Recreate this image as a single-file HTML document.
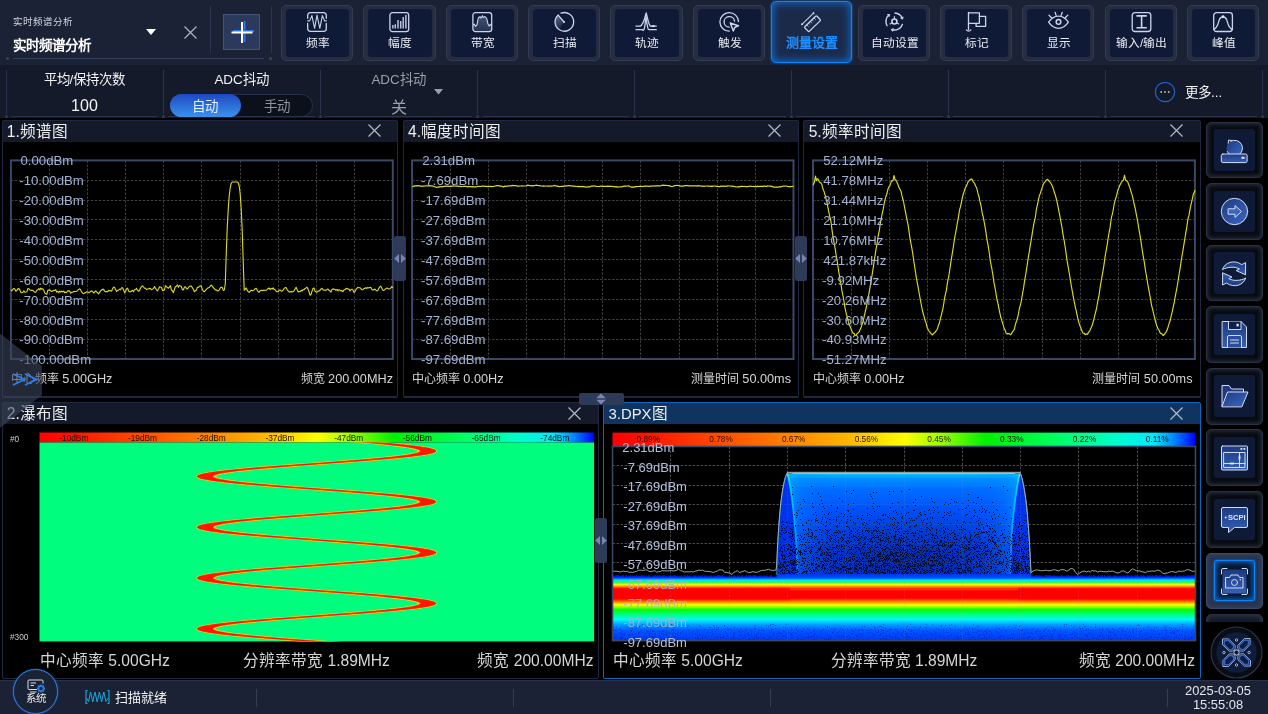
<!DOCTYPE html>
<html lang="zh-CN"><head><meta charset="utf-8"><title>实时频谱分析</title>
<style>
*{box-sizing:border-box;margin:0;padding:0}
html,body{width:1268px;height:714px;overflow:hidden;background:#000}
body{position:relative;font-family:"Liberation Sans",sans-serif;color:#fff;-webkit-font-smoothing:antialiased}
#root{position:absolute;left:0;top:0;width:1268px;height:714px;overflow:hidden;will-change:transform}
.abs{position:absolute}
#topbar{position:absolute;left:0;top:0;width:1268px;height:65px;background:#1b2236}
#prow{position:absolute;left:0;top:65px;width:1268px;height:53px;background:#141a2a}
.tb{position:absolute;top:4.6px;width:72.3px;height:56.4px;border-radius:5px;background:#262d43;border:1px solid #333b53}
.tb .in{position:absolute;left:4px;top:3.6px;width:63.3px;height:47.7px;border-radius:3.5px;background:#0f1b36}
.tb svg{position:absolute;left:25px;top:6.4px;width:20px;height:20px;overflow:visible}
.tb .lb{position:absolute;left:-10px;width:92px;top:29.6px;text-align:center;font-size:11.7px;line-height:16px;color:#e8eaf0;white-space:nowrap}
.tb.act{top:1px;width:81px;height:62px;background:#1c2a4a;border:1.5px solid #0a84ff;border-radius:5px;box-shadow:inset 0 0 9px 1px rgba(10,132,255,.75),0 0 3px rgba(10,132,255,.6)}
.tb.act svg{left:30px;top:10.7px}
.tb.act .lb{left:-6px;top:33px;font-size:13px;font-weight:bold;color:#1e8fff}
.sep{position:absolute;width:1px;background:#2c3650}
.pcell{position:absolute;top:0;height:53px}
.ptitle{position:absolute;left:0;width:100%;top:5.7px;text-align:center;font-size:13.4px;line-height:18px;color:#f2f2f2;white-space:nowrap}
.pval{position:absolute;left:0;width:100%;top:31.2px;text-align:center;font-size:16px;line-height:20px;color:#f2f2f2;white-space:nowrap}
.panel{position:absolute;background:#000;border:1px solid #1f2840;border-radius:2px}
.ptl{position:absolute;left:0;top:0;right:0;height:21px;background:#141a2a;font-size:15.6px;line-height:21px;padding-left:4.3px;color:#eee;white-space:nowrap}
.panel.act{border:1px solid #0b66c0}
.panel.act .ptl{background:#0f3460}
.px{position:absolute;top:3px;width:15px;height:15px}
.yl{position:absolute;font-size:13.2px;line-height:14px;color:#a4b2d2;white-space:nowrap}
.lt{font-size:12.7px}
.bl{position:absolute;font-size:12px;line-height:14px;color:#d6d6d6;white-space:nowrap}
.bl2{position:absolute;font-size:15.6px;line-height:18px;color:#d6d6d6;white-space:nowrap}
.hd{position:absolute;background:#2e3b58;border-radius:2.5px}
.sb{position:absolute;left:1206px;width:57px;height:56.7px;border-radius:5px;background:#080b12;border:1px solid #2a3142;box-shadow:inset 0 0 4px 1px rgba(70,80,105,.55)}
.sb .in{position:absolute;left:7px;top:6.6px;width:41px;height:41.4px;border-radius:3px;background:#0f1b36}
.sb svg{position:absolute;left:12px;top:12px;width:31px;height:31px;overflow:visible}
#status{position:absolute;left:0;top:680px;width:1268px;height:34px;background:#1b2236;border-top:1px solid #2a3248}
</style></head>
<body>
<div id="root">
<div id="topbar">
<div class="abs" style="left:13px;top:15.6px;font-size:9.5px;line-height:12px;color:#d2d6de;white-space:nowrap">实时频谱分析</div>
<div class="abs" style="left:13px;top:37px;font-size:13.5px;line-height:17px;font-weight:bold;color:#fff;white-space:nowrap">实时频谱分析</div>
<svg class="abs" style="left:146px;top:29px" width="10" height="6"><path d="M0 0H10L5 6Z" fill="#fff"/></svg>
<svg class="abs" style="left:184px;top:26px" width="13" height="13"><path d="M0.5 0.5L12.5 12.5M12.5 0.5L0.5 12.5" stroke="#aab0bd" stroke-width="1.3" fill="none"/></svg>
<div class="sep" style="left:209.5px;top:6px;height:47px"></div>
<div class="abs" style="left:223px;top:14px;width:37px;height:36px;background:#2b3a5c;border:1px solid #44547a"></div>
<svg class="abs" style="left:223px;top:14px" width="37" height="36"><path d="M10 17H31M21.5 7V28" stroke="#2b74e8" stroke-width="2" fill="none"/><path d="M8.5 18.5H29.5M19 8V29" stroke="#fff" stroke-width="2" fill="none"/></svg>
<div class="sep" style="left:270.5px;top:6px;height:47px"></div>
<div class="abs" style="left:13px;top:58px;width:251px;height:1px;background:#37415c"></div>
<div class="abs" style="left:6px;top:57px;width:3px;height:3px;border-radius:2px;background:#3a4560"></div>
<div class="abs" style="left:269px;top:57px;width:3px;height:3px;border-radius:2px;background:#3a4560"></div>
<div class="tb" style="left:281.0px"><div class="in"></div><svg viewBox="0 0 20 20"><path d="M0.7 6.3V3.2A2.5 2.5 0 0 1 3.2 0.7H16.8A2.5 2.5 0 0 1 19.3 3.2V6.3M0.7 11.4V16.8A2.5 2.5 0 0 0 3.2 19.3H16.8A2.5 2.5 0 0 0 19.3 16.8V11.4" stroke="#ccd3ea" stroke-width="1.3" fill="none" stroke-linecap="round" stroke-linejoin="round"/><path d="M0.3 8.9H2.6L4.9 3.6L7.6 16.3L10 3.1L12.8 16.3L15.4 3.6L17.6 8.9H19.7" stroke="#c9d0e8" stroke-width="1.1" fill="none" stroke-linejoin="round"/></svg><div class="lb">频率</div></div>
<div class="tb" style="left:363.4px"><div class="in"></div><svg viewBox="0 0 20 20"><rect x="0.9" y="0.6" width="18.8" height="19" rx="2.6" stroke="#ccd3ea" stroke-width="1.3" fill="none" stroke-linecap="round" stroke-linejoin="round"/><path d="M3.9 16.5V13M6.3 16.5V12.2M9 16.5V8M11.7 16.5V8.9M14.2 16.5V4.9M16.9 16.5V3" stroke="#b9c2de" stroke-width="1.5" fill="none"/></svg><div class="lb">幅度</div></div>
<div class="tb" style="left:445.7px"><div class="in"></div><svg viewBox="0 0 20 20"><defs><linearGradient id="gbw" x1="0" y1="0" x2="0" y2="1"><stop offset="0" stop-color="#6d7ea8" stop-opacity=".55"/><stop offset="1" stop-color="#6d7ea8" stop-opacity=".25"/></linearGradient></defs><path d="M1.2 13L2.4 12.2L3.6 14.4L5 12.6C5.6 10 5.6 8.5 6 7.2C6.3 6 6.5 5.4 6.9 5.1L8.2 4.9L8.85 6L9.6 5.2L10.5 3.7L11.1 5.4L11.7 5.3L12.5 4.6L13.6 5.1C14.2 5.6 14.6 6.4 15 7.7C15.4 9.2 15.6 10.8 16 12L17.2 14.1L18.4 12.4L19.3 13.4V17.5Q19.3 19 17.8 19H2.7Q1.2 19 1.2 17.5Z" fill="url(#gbw)"/><rect x="0.9" y="0.6" width="18.8" height="19" rx="2.6" stroke="#ccd3ea" stroke-width="1.3" fill="none" stroke-linecap="round" stroke-linejoin="round"/><path d="M1.2 13L2.4 12.2L3.6 14.4L5 12.6C5.6 10 5.6 8.5 6 7.2C6.3 6 6.5 5.4 6.9 5.1L8.2 4.9L8.85 6L9.6 5.2L10.5 3.7L11.1 5.4L11.7 5.3L12.5 4.6L13.6 5.1C14.2 5.6 14.6 6.4 15 7.7C15.4 9.2 15.6 10.8 16 12L17.2 14.1L18.4 12.4L19.3 13.4" stroke="#ccd3ea" stroke-width="1.1" fill="none" stroke-linejoin="round"/></svg><div class="lb">带宽</div></div>
<div class="tb" style="left:528.1px"><div class="in"></div><svg viewBox="0 0 20 20"><defs><linearGradient id="gsc" x1="0.2" y1="0" x2="0.6" y2="1"><stop offset="0" stop-color="#7e8fb8" stop-opacity=".7"/><stop offset="1" stop-color="#7e8fb8" stop-opacity=".05"/></linearGradient></defs><path d="M10 10L4.2 3.3A9 9 0 0 0 5 17.4Z" fill="url(#gsc)"/><path d="M7 1.2A9.3 9.3 0 1 1 4.2 2.9" stroke="#ccd3ea" stroke-width="1.3" fill="none" stroke-linecap="round" stroke-linejoin="round"/><path d="M10 10L4.4 3.4" stroke="#ccd3ea" stroke-width="1.3" fill="none" stroke-linecap="round" stroke-linejoin="round"/><circle cx="10" cy="10" r="1.1" fill="#ccd3ea"/></svg><div class="lb">扫描</div></div>
<div class="tb" style="left:610.4px"><div class="in"></div><svg viewBox="0 0 20 20"><path d="M0 14.1H4.3C7.3 13.2 8.9 5.5 10.2 0.9C11.4 5.5 12.6 12.5 14.2 14.1H20.3" stroke="#ccd3ea" stroke-width="1.3" fill="none" stroke-linecap="round" stroke-linejoin="round"/><path d="M0 17.7H6.3L7 18.4L8 17.6C9 15.5 9.5 8.5 10 4.2C10.6 8.5 11.2 16.2 12.4 17.3L13.2 17.7H20.3" stroke="#ccd3ea" stroke-width="1.3" fill="none" stroke-linecap="round" stroke-linejoin="round"/><path d="M15 14.1L17 12.9L19.4 14.1L17 15.3Z" fill="#dfe5f6"/></svg><div class="lb">轨迹</div></div>
<div class="tb" style="left:692.8px"><div class="in"></div><svg viewBox="0 0 20 20"><path d="M19.5 9.6A9.3 9.3 0 1 0 10.2 19.2" stroke="#ccd3ea" stroke-width="1.3" fill="none" stroke-linecap="round" stroke-linejoin="round"/><path d="M15.6 9.2A5.3 5.3 0 1 0 10.2 15.2" stroke="#ccd3ea" stroke-width="1.3" fill="none" stroke-linecap="round" stroke-linejoin="round"/><path d="M11.3 11L19.4 13.8L15.9 15.3L14.3 18.9Z" stroke="#ccd3ea" stroke-width="1.5" fill="none" stroke-linejoin="round"/></svg><div class="lb">触发</div></div>
<div class="tb act" style="left:771.3px"><svg viewBox="0 0 20 20"><g transform="translate(10.55 10.7) rotate(-44)"><rect x="-8.4" y="-3.2" width="16.8" height="6.4" rx="1" stroke="#ccd3ea" stroke-width="1.3" fill="none"/><path d="M-5 -3.2V-0.8M-2.5 -3.2V-1.5M0 -3.2V-0.8M2.5 -3.2V-1.5M5 -3.2V-0.8" stroke="#ccd3ea" stroke-width="0.8" fill="none"/><path d="M-8 -6.9H8" stroke="#ccd3ea" stroke-width="1"/><circle cx="-8" cy="-6.9" r="1" fill="#ccd3ea"/><circle cx="8" cy="-6.9" r="1" fill="#ccd3ea"/></g></svg><div class="lb">测量设置</div></div>
<div class="tb" style="left:857.5px"><div class="in"></div><svg viewBox="0 0 20 20"><path d="M3.04 13.75A8.5 8.5 0 0 1 4.94 2.99M10.99 1.02A8.5 8.5 0 0 1 18.28 6.32M18.39 12.41A8.5 8.5 0 0 1 8.20 17.71" stroke="#ccd3ea" stroke-width="1.4" fill="none" stroke-linecap="round"/><path d="M6.16 1.96L2.73 2.23L5.30 5.29ZM18.88 7.80L19.69 4.45L15.98 5.95ZM6.65 17.30L8.84 19.95L9.88 16.09Z" fill="#ccd3ea"/><circle cx="10.4" cy="9.5" r="2.5" stroke="#ccd3ea" stroke-width="1.6" fill="none"/><path d="M10.40 6.50L10.40 4.50M13.00 11.00L14.73 12.00M7.80 11.00L6.07 12.00" stroke="#ccd3ea" stroke-width="1.1" fill="none" stroke-linecap="round"/></svg><div class="lb">自动设置</div></div>
<div class="tb" style="left:939.9px"><div class="in"></div><svg viewBox="0 0 20 20"><path d="M2.5 0.5V17.6" stroke="#ccd3ea" stroke-width="1.3" fill="none" stroke-linecap="round" stroke-linejoin="round"/><path d="M2.5 0.9H13.4V11.3H2.5" stroke="#ccd3ea" stroke-width="1.3" fill="none" stroke-linecap="round" stroke-linejoin="round"/><path d="M13.4 4.4H19.6V14.4H10.1V11.3" stroke="#ccd3ea" stroke-width="1.3" fill="none" stroke-linecap="round" stroke-linejoin="round"/><path d="M0.4 17.9Q2.6 20.3 4.9 17.9" stroke="#ccd3ea" stroke-width="1.3" fill="none" stroke-linecap="round" stroke-linejoin="round"/></svg><div class="lb">标记</div></div>
<div class="tb" style="left:1022.2px"><div class="in"></div><svg viewBox="0 0 20 20"><path d="M0.6 10.2C3.8 5.6 7.4 4.2 10.5 4.2C13.6 4.2 17.2 5.6 20.4 10.2C17.2 14.9 13.6 16.4 10.5 16.4C7.4 16.4 3.8 14.9 0.6 10.2Z" stroke="#ccd3ea" stroke-width="1.3" fill="none" stroke-linecap="round" stroke-linejoin="round"/><circle cx="10.5" cy="9.9" r="2.3" stroke="#ccd3ea" stroke-width="1.5" fill="none"/><path d="M1 3.2L3.5 5.8M7.1 0.3L8.1 3.4M14.3 0.3L13.1 3.4M19.8 3.2L17.2 5.8" stroke="#ccd3ea" stroke-width="1.3" fill="none" stroke-linecap="round" stroke-linejoin="round"/></svg><div class="lb">显示</div></div>
<div class="tb" style="left:1104.6px"><div class="in"></div><svg viewBox="0 0 20 20"><rect x="1.2" y="0.6" width="18.6" height="18.9" rx="2.8" stroke="#ccd3ea" stroke-width="1.3" fill="none" stroke-linecap="round" stroke-linejoin="round"/><path d="M5.4 3.9H15.8M10.6 3.9V15.7M5.4 15.7H15.8" stroke="#ccd3ea" stroke-width="1.6" fill="none"/></svg><div class="lb">输入/输出</div></div>
<div class="tb" style="left:1187.0px"><div class="in"></div><svg viewBox="0 0 20 20"><rect x="0.7" y="0.6" width="18.7" height="18.9" rx="2.8" stroke="#ccd3ea" stroke-width="1.3" fill="none" stroke-linecap="round" stroke-linejoin="round"/><path d="M1 17.4C4.6 15.4 5.2 11.5 6 8.6C6.8 5.9 8 5 10 5C12 5 13.2 5.9 14 8.6C14.8 11.5 15.4 15.4 19 17.4" stroke="#ccd3ea" stroke-width="1.3" fill="none" stroke-linecap="round" stroke-linejoin="round"/><circle cx="10" cy="4.6" r="1.35" fill="#dfe5f6"/></svg><div class="lb">峰值</div></div>
</div>
<div id="prow">
<div class="sep" style="left:5.9px;top:5px;height:44px;background:#2a334b"></div>
<div class="abs" style="left:4.9px;top:50px;width:3px;height:3px;border-radius:2px;background:#2f3953"></div>
<div class="abs" style="left:10.9px;top:51px;width:147.1px;height:1px;background:#2a334b"></div>
<div class="sep" style="left:163.0px;top:5px;height:44px;background:#2a334b"></div>
<div class="abs" style="left:162.0px;top:50px;width:3px;height:3px;border-radius:2px;background:#2f3953"></div>
<div class="abs" style="left:168.0px;top:51px;width:147.1px;height:1px;background:#2a334b"></div>
<div class="sep" style="left:320.0px;top:5px;height:44px;background:#2a334b"></div>
<div class="abs" style="left:319.0px;top:50px;width:3px;height:3px;border-radius:2px;background:#2f3953"></div>
<div class="abs" style="left:325.0px;top:51px;width:147.1px;height:1px;background:#2a334b"></div>
<div class="sep" style="left:477.1px;top:5px;height:44px;background:#2a334b"></div>
<div class="abs" style="left:476.1px;top:50px;width:3px;height:3px;border-radius:2px;background:#2f3953"></div>
<div class="abs" style="left:482.1px;top:51px;width:147.1px;height:1px;background:#2a334b"></div>
<div class="sep" style="left:634.1px;top:5px;height:44px;background:#2a334b"></div>
<div class="abs" style="left:633.1px;top:50px;width:3px;height:3px;border-radius:2px;background:#2f3953"></div>
<div class="abs" style="left:639.1px;top:51px;width:147.1px;height:1px;background:#2a334b"></div>
<div class="sep" style="left:791.1px;top:5px;height:44px;background:#2a334b"></div>
<div class="abs" style="left:790.1px;top:50px;width:3px;height:3px;border-radius:2px;background:#2f3953"></div>
<div class="abs" style="left:796.1px;top:51px;width:147.1px;height:1px;background:#2a334b"></div>
<div class="sep" style="left:948.2px;top:5px;height:44px;background:#2a334b"></div>
<div class="abs" style="left:947.2px;top:50px;width:3px;height:3px;border-radius:2px;background:#2f3953"></div>
<div class="abs" style="left:953.2px;top:51px;width:147.1px;height:1px;background:#2a334b"></div>
<div class="sep" style="left:1105.3px;top:5px;height:44px;background:#2a334b"></div>
<div class="abs" style="left:1104.3px;top:50px;width:3px;height:3px;border-radius:2px;background:#2f3953"></div>
<div class="abs" style="left:1110.3px;top:51px;width:147.1px;height:1px;background:#2a334b"></div>
<div class="sep" style="left:1262.3px;top:5px;height:44px;background:#2a334b"></div>
<div class="abs" style="left:1261.3px;top:50px;width:3px;height:3px;border-radius:2px;background:#2f3953"></div>
<div class="pcell" style="left:5.9px;width:157.1px"><div class="ptitle">平均/保持次数</div><div class="pval">100</div></div>
<div class="pcell" style="left:163.0px;width:157.1px"><div class="ptitle">ADC抖动</div><div class="abs" style="left:6.5px;top:28.5px;width:143px;height:23px;border-radius:12px;background:#0c101b;border:1px solid #27314b"></div><div class="abs" style="left:6.5px;top:28.5px;width:71px;height:23px;border-radius:12px;background:linear-gradient(#1d48c4,#3b92ec)"></div><div class="abs" style="left:6.5px;top:31.6px;width:71px;text-align:center;font-size:13.5px;line-height:20px;color:#e8eefc">自动</div><div class="abs" style="left:78px;top:31.6px;width:71px;text-align:center;font-size:13.5px;line-height:20px;color:#8f949e">手动</div></div>
<div class="pcell" style="left:320.0px;width:157.1px"><div class="ptitle" style="color:#9a9fa8">ADC抖动</div><div class="pval" style="color:#9a9fa8;top:32.6px">关</div><svg class="abs" style="left:113.7px;top:24px" width="9" height="6"><path d="M0 0H9L4.5 5.5Z" fill="#9a9fa8"/></svg></div>
<svg class="abs" style="left:1154px;top:16px" width="22" height="22"><circle cx="11" cy="11" r="9.7" fill="none" stroke="#1f5fd0" stroke-width="1.2"/><circle cx="7.2" cy="11" r="0.9" fill="#b8bcc6"/><circle cx="11" cy="11" r="0.9" fill="#b8bcc6"/><circle cx="14.8" cy="11" r="0.9" fill="#b8bcc6"/></svg>
<div class="abs" style="left:1185px;top:18.8px;font-size:13.5px;line-height:18px;color:#f2f2f2;white-space:nowrap">更多...</div>
</div>
<div class="panel" style="left:1.5px;top:120px;width:396.4px;height:277.9px;border-bottom-width:2px"><div class="ptl">1.频谱图</div><svg class="px" style="left:365.2px;top:3.0px;width:13px;height:13px" viewBox="0 0 13 13"><path d="M0.5 0.5L12.5 12.5M12.5 0.5L0.5 12.5" stroke="#b4bac6" stroke-width="1.2" fill="none"/></svg></div>
<div class="panel" style="left:402.8px;top:120px;width:396.2px;height:277.9px;border-bottom-width:2px"><div class="ptl">4.幅度时间图</div><svg class="px" style="left:364.7px;top:3.0px;width:13px;height:13px" viewBox="0 0 13 13"><path d="M0.5 0.5L12.5 12.5M12.5 0.5L0.5 12.5" stroke="#b4bac6" stroke-width="1.2" fill="none"/></svg></div>
<div class="panel" style="left:803.4px;top:120px;width:397.6px;height:277.9px;border-bottom-width:2px"><div class="ptl">5.频率时间图</div><svg class="px" style="left:365.2px;top:3.0px;width:13px;height:13px" viewBox="0 0 13 13"><path d="M0.5 0.5L12.5 12.5M12.5 0.5L0.5 12.5" stroke="#b4bac6" stroke-width="1.2" fill="none"/></svg></div>
<div class="panel" style="left:1.5px;top:401.8px;width:597.5px;height:277px"><div class="ptl">2.瀑布图</div><svg class="px" style="left:565.9px;top:4.0px;width:13px;height:13px" viewBox="0 0 13 13"><path d="M0.5 0.5L12.5 12.5M12.5 0.5L0.5 12.5" stroke="#b4bac6" stroke-width="1.2" fill="none"/></svg></div>
<div class="panel act" style="left:603.2px;top:401.8px;width:598px;height:277px"><div class="ptl"><span style="font-size:14.9px">3.DPX</span>图</div><svg class="px" style="left:565.4px;top:4.0px;width:13px;height:13px" viewBox="0 0 13 13"><path d="M0.5 0.5L12.5 12.5M12.5 0.5L0.5 12.5" stroke="#b4bac6" stroke-width="1.2" fill="none"/></svg></div>
<svg class="abs" style="left:0;top:0" width="1268" height="714" viewBox="0 0 1268 714"><defs>
<linearGradient id="cbar" x1="0" y1="0" x2="1" y2="0">
<stop offset="0" stop-color="#ff0000"/><stop offset="0.06" stop-color="#ff1400"/><stop offset="0.25" stop-color="#ff6a00"/><stop offset="0.40" stop-color="#ffb400"/><stop offset="0.50" stop-color="#ffff00"/><stop offset="0.56" stop-color="#a0ff00"/><stop offset="0.64" stop-color="#00f000"/><stop offset="0.76" stop-color="#00ff60"/><stop offset="0.86" stop-color="#00ffc8"/><stop offset="0.93" stop-color="#00e8ff"/><stop offset="0.965" stop-color="#0080ff"/><stop offset="1" stop-color="#0000ff"/>
</linearGradient>
<linearGradient id="nband" x1="0" y1="0" x2="0" y2="1">
<stop offset="0" stop-color="#0000f0"/><stop offset="0.035" stop-color="#0028ff"/><stop offset="0.06" stop-color="#0090ff"/><stop offset="0.08" stop-color="#00f0f0"/><stop offset="0.105" stop-color="#00ff70"/><stop offset="0.125" stop-color="#90ff00"/><stop offset="0.147" stop-color="#ffff00"/><stop offset="0.177" stop-color="#ff8000"/><stop offset="0.206" stop-color="#ff0800"/><stop offset="0.24" stop-color="#ff0000"/><stop offset="0.36" stop-color="#ff0000"/><stop offset="0.40" stop-color="#ff7000"/><stop offset="0.45" stop-color="#ffff00"/><stop offset="0.485" stop-color="#90ff00"/><stop offset="0.525" stop-color="#00ff10"/><stop offset="0.60" stop-color="#00ff80"/><stop offset="0.675" stop-color="#00f8f8"/><stop offset="0.75" stop-color="#00a0ff"/><stop offset="0.84" stop-color="#0058ff"/><stop offset="1" stop-color="#0038f8"/>
</linearGradient>
<linearGradient id="blktoe" x1="0" y1="0" x2="0" y2="1"><stop offset="0" stop-color="#0034ec"/><stop offset="0.6" stop-color="#0050ff"/><stop offset="1" stop-color="#00c0ff" stop-opacity="0"/></linearGradient>
<linearGradient id="edgL" gradientUnits="userSpaceOnUse" x1="787" y1="0" x2="830" y2="0"><stop offset="0" stop-color="#00b8ff" stop-opacity=".6"/><stop offset="0.35" stop-color="#0090ff" stop-opacity=".28"/><stop offset="1" stop-color="#0070ff" stop-opacity="0"/></linearGradient>
<linearGradient id="edgR" gradientUnits="userSpaceOnUse" x1="1020" y1="0" x2="977" y2="0"><stop offset="0" stop-color="#00b8ff" stop-opacity=".6"/><stop offset="0.35" stop-color="#0090ff" stop-opacity=".28"/><stop offset="1" stop-color="#0070ff" stop-opacity="0"/></linearGradient>
<linearGradient id="lobg" gradientUnits="userSpaceOnUse" x1="0" y1="472" x2="0" y2="580"><stop offset="0" stop-color="#40f0c0"/><stop offset="0.12" stop-color="#00d0ff"/><stop offset="0.6" stop-color="#0098ff"/><stop offset="1" stop-color="#0068ff"/></linearGradient>
<linearGradient id="blk" x1="0" y1="0" x2="0" y2="1">
<stop offset="0" stop-color="#20e8c0"/><stop offset="0.018" stop-color="#00b8ff"/><stop offset="0.055" stop-color="#0090ff"/><stop offset="0.15" stop-color="#006cff"/><stop offset="0.33" stop-color="#0054ff"/><stop offset="0.7" stop-color="#0042fc"/><stop offset="1" stop-color="#003af4"/>
</linearGradient>
<radialGradient id="spk" cx="0.5" cy="0.78" r="0.62" gradientTransform="translate(0.5 0.78) scale(1 0.85) translate(-0.5 -0.78)">
<stop offset="0" stop-color="#000" stop-opacity="0.30"/><stop offset="0.45" stop-color="#000" stop-opacity="0.20"/><stop offset="0.8" stop-color="#000" stop-opacity="0.06"/><stop offset="1" stop-color="#000" stop-opacity="0"/>
</radialGradient>
<filter id="wfb" x="-5%" y="-5%" width="110%" height="110%"><feGaussianBlur stdDeviation="0.7"/></filter>
<filter id="wfb2" x="-5%" y="-5%" width="110%" height="110%"><feGaussianBlur stdDeviation="0.35"/></filter>
<clipPath id="wfc"><rect x="39.5" y="442.5" width="555" height="199"/></clipPath>
<clipPath id="dpc"><rect x="612.5" y="446.5" width="583" height="194.1"/></clipPath>
</defs><path d="M49.5 160.4V359.0" stroke="#3e3e3e" stroke-width="1" stroke-dasharray="2.5 1.5" fill="none"/><path d="M87.5 160.4V359.0" stroke="#3e3e3e" stroke-width="1" stroke-dasharray="2.5 1.5" fill="none"/><path d="M125.5 160.4V359.0" stroke="#3e3e3e" stroke-width="1" stroke-dasharray="2.5 1.5" fill="none"/><path d="M163.5 160.4V359.0" stroke="#3e3e3e" stroke-width="1" stroke-dasharray="2.5 1.5" fill="none"/><path d="M201.5 160.4V359.0" stroke="#3e3e3e" stroke-width="1" stroke-dasharray="2.5 1.5" fill="none"/><path d="M240.5 160.4V359.0" stroke="#3e3e3e" stroke-width="1" stroke-dasharray="2.5 1.5" fill="none"/><path d="M278.5 160.4V359.0" stroke="#3e3e3e" stroke-width="1" stroke-dasharray="2.5 1.5" fill="none"/><path d="M316.5 160.4V359.0" stroke="#3e3e3e" stroke-width="1" stroke-dasharray="2.5 1.5" fill="none"/><path d="M354.5 160.4V359.0" stroke="#3e3e3e" stroke-width="1" stroke-dasharray="2.5 1.5" fill="none"/><path d="M10.9 180.5H392.8" stroke="#3e3e3e" stroke-width="1" stroke-dasharray="2.5 1.5" fill="none"/><path d="M10.9 200.5H392.8" stroke="#3e3e3e" stroke-width="1" stroke-dasharray="2.5 1.5" fill="none"/><path d="M10.9 219.5H392.8" stroke="#3e3e3e" stroke-width="1" stroke-dasharray="2.5 1.5" fill="none"/><path d="M10.9 239.5H392.8" stroke="#3e3e3e" stroke-width="1" stroke-dasharray="2.5 1.5" fill="none"/><path d="M10.9 259.5H392.8" stroke="#3e3e3e" stroke-width="1" stroke-dasharray="2.5 1.5" fill="none"/><path d="M10.9 279.5H392.8" stroke="#3e3e3e" stroke-width="1" stroke-dasharray="2.5 1.5" fill="none"/><path d="M10.9 299.5H392.8" stroke="#3e3e3e" stroke-width="1" stroke-dasharray="2.5 1.5" fill="none"/><path d="M10.9 319.5H392.8" stroke="#3e3e3e" stroke-width="1" stroke-dasharray="2.5 1.5" fill="none"/><path d="M10.9 339.5H392.8" stroke="#3e3e3e" stroke-width="1" stroke-dasharray="2.5 1.5" fill="none"/><rect x="10.9" y="160.4" width="381.9" height="198.6" fill="none" stroke="#3a4868" stroke-width="2"/><path d="M450.5 160.4V359.0" stroke="#3e3e3e" stroke-width="1" stroke-dasharray="2.5 1.5" fill="none"/><path d="M488.5 160.4V359.0" stroke="#3e3e3e" stroke-width="1" stroke-dasharray="2.5 1.5" fill="none"/><path d="M526.5 160.4V359.0" stroke="#3e3e3e" stroke-width="1" stroke-dasharray="2.5 1.5" fill="none"/><path d="M564.5 160.4V359.0" stroke="#3e3e3e" stroke-width="1" stroke-dasharray="2.5 1.5" fill="none"/><path d="M602.5 160.4V359.0" stroke="#3e3e3e" stroke-width="1" stroke-dasharray="2.5 1.5" fill="none"/><path d="M640.5 160.4V359.0" stroke="#3e3e3e" stroke-width="1" stroke-dasharray="2.5 1.5" fill="none"/><path d="M679.5 160.4V359.0" stroke="#3e3e3e" stroke-width="1" stroke-dasharray="2.5 1.5" fill="none"/><path d="M717.5 160.4V359.0" stroke="#3e3e3e" stroke-width="1" stroke-dasharray="2.5 1.5" fill="none"/><path d="M755.5 160.4V359.0" stroke="#3e3e3e" stroke-width="1" stroke-dasharray="2.5 1.5" fill="none"/><path d="M412.1 180.5H793.5" stroke="#3e3e3e" stroke-width="1" stroke-dasharray="2.5 1.5" fill="none"/><path d="M412.1 200.5H793.5" stroke="#3e3e3e" stroke-width="1" stroke-dasharray="2.5 1.5" fill="none"/><path d="M412.1 219.5H793.5" stroke="#3e3e3e" stroke-width="1" stroke-dasharray="2.5 1.5" fill="none"/><path d="M412.1 239.5H793.5" stroke="#3e3e3e" stroke-width="1" stroke-dasharray="2.5 1.5" fill="none"/><path d="M412.1 259.5H793.5" stroke="#3e3e3e" stroke-width="1" stroke-dasharray="2.5 1.5" fill="none"/><path d="M412.1 279.5H793.5" stroke="#3e3e3e" stroke-width="1" stroke-dasharray="2.5 1.5" fill="none"/><path d="M412.1 299.5H793.5" stroke="#3e3e3e" stroke-width="1" stroke-dasharray="2.5 1.5" fill="none"/><path d="M412.1 319.5H793.5" stroke="#3e3e3e" stroke-width="1" stroke-dasharray="2.5 1.5" fill="none"/><path d="M412.1 339.5H793.5" stroke="#3e3e3e" stroke-width="1" stroke-dasharray="2.5 1.5" fill="none"/><rect x="412.1" y="160.4" width="381.4" height="198.6" fill="none" stroke="#3a4868" stroke-width="2"/><path d="M851.5 160.4V359.0" stroke="#3e3e3e" stroke-width="1" stroke-dasharray="2.5 1.5" fill="none"/><path d="M889.5 160.4V359.0" stroke="#3e3e3e" stroke-width="1" stroke-dasharray="2.5 1.5" fill="none"/><path d="M927.5 160.4V359.0" stroke="#3e3e3e" stroke-width="1" stroke-dasharray="2.5 1.5" fill="none"/><path d="M965.5 160.4V359.0" stroke="#3e3e3e" stroke-width="1" stroke-dasharray="2.5 1.5" fill="none"/><path d="M1003.5 160.4V359.0" stroke="#3e3e3e" stroke-width="1" stroke-dasharray="2.5 1.5" fill="none"/><path d="M1042.5 160.4V359.0" stroke="#3e3e3e" stroke-width="1" stroke-dasharray="2.5 1.5" fill="none"/><path d="M1080.5 160.4V359.0" stroke="#3e3e3e" stroke-width="1" stroke-dasharray="2.5 1.5" fill="none"/><path d="M1118.5 160.4V359.0" stroke="#3e3e3e" stroke-width="1" stroke-dasharray="2.5 1.5" fill="none"/><path d="M1156.5 160.4V359.0" stroke="#3e3e3e" stroke-width="1" stroke-dasharray="2.5 1.5" fill="none"/><path d="M813.0 180.5H1194.9" stroke="#3e3e3e" stroke-width="1" stroke-dasharray="2.5 1.5" fill="none"/><path d="M813.0 200.5H1194.9" stroke="#3e3e3e" stroke-width="1" stroke-dasharray="2.5 1.5" fill="none"/><path d="M813.0 219.5H1194.9" stroke="#3e3e3e" stroke-width="1" stroke-dasharray="2.5 1.5" fill="none"/><path d="M813.0 239.5H1194.9" stroke="#3e3e3e" stroke-width="1" stroke-dasharray="2.5 1.5" fill="none"/><path d="M813.0 259.5H1194.9" stroke="#3e3e3e" stroke-width="1" stroke-dasharray="2.5 1.5" fill="none"/><path d="M813.0 279.5H1194.9" stroke="#3e3e3e" stroke-width="1" stroke-dasharray="2.5 1.5" fill="none"/><path d="M813.0 299.5H1194.9" stroke="#3e3e3e" stroke-width="1" stroke-dasharray="2.5 1.5" fill="none"/><path d="M813.0 319.5H1194.9" stroke="#3e3e3e" stroke-width="1" stroke-dasharray="2.5 1.5" fill="none"/><path d="M813.0 339.5H1194.9" stroke="#3e3e3e" stroke-width="1" stroke-dasharray="2.5 1.5" fill="none"/><rect x="813.0" y="160.4" width="381.9" height="198.6" fill="none" stroke="#3a4868" stroke-width="2"/><polyline points="10.9,290.0 11.9,290.7 12.9,289.2 13.9,288.3 14.9,289.2 15.9,291.3 16.9,290.4 17.9,288.9 18.9,288.6 19.9,290.1 20.9,292.5 21.9,292.8 22.9,292.3 23.9,290.8 24.9,292.2 25.9,292.1 26.9,291.7 27.9,288.5 28.8,288.8 29.8,289.7 30.8,290.4 31.8,290.3 32.8,290.4 33.8,291.3 34.8,292.3 35.8,292.3 36.8,290.2 37.8,289.8 38.8,288.5 39.8,289.9 40.8,288.0 41.8,289.3 42.8,288.7 43.8,290.2 44.8,293.1 45.8,293.7 46.8,294.3 47.8,290.3 48.8,290.1 49.8,289.9 50.8,291.0 51.8,291.6 52.8,291.1 53.8,290.3 54.8,290.5 55.8,289.7 56.8,292.2 57.8,291.3 58.8,292.6 59.8,291.0 60.8,292.2 61.8,291.1 62.8,292.0 63.7,291.0 64.7,292.6 65.7,292.3 66.7,292.5 67.7,290.7 68.7,290.9 69.7,291.1 70.7,293.2 71.7,292.2 72.7,292.3 73.7,291.3 74.7,291.8 75.7,291.5 76.7,291.2 77.7,290.4 78.7,289.4 79.7,288.8 80.7,289.9 81.7,292.0 82.7,293.2 83.7,293.6 84.7,292.9 85.7,292.6 86.7,291.9 87.7,291.8 88.7,292.7 89.7,292.3 90.7,291.0 91.7,291.1 92.7,291.6 93.7,293.0 94.7,292.0 95.7,290.8 96.7,292.0 97.7,292.8 98.6,293.9 99.6,292.4 100.6,290.9 101.6,290.0 102.6,289.2 103.6,289.4 104.6,291.1 105.6,291.8 106.6,291.5 107.6,291.6 108.6,290.3 109.6,290.9 110.6,290.7 111.6,291.1 112.6,288.8 113.6,287.0 114.6,287.4 115.6,289.4 116.6,291.5 117.6,290.4 118.6,289.9 119.6,289.1 120.6,289.8 121.6,287.7 122.6,287.8 123.6,289.9 124.6,292.8 125.6,291.3 126.6,288.9 127.6,288.1 128.6,291.1 129.6,291.9 130.6,291.8 131.6,291.0 132.5,290.3 133.5,291.8 134.5,289.8 135.5,289.5 136.5,288.4 137.5,290.2 138.5,291.2 139.5,290.8 140.5,288.0 141.5,286.7 142.5,285.9 143.5,287.0 144.5,288.1 145.5,288.3 146.5,289.5 147.5,289.0 148.5,289.0 149.5,288.4 150.5,288.6 151.5,289.7 152.5,289.1 153.5,288.5 154.5,286.6 155.5,288.4 156.5,289.8 157.5,290.8 158.5,289.0 159.5,286.7 160.5,287.0 161.5,287.5 162.5,290.5 163.5,290.5 164.5,289.7 165.5,285.7 166.5,286.7 167.4,287.5 168.4,288.2 169.4,287.1 170.4,285.6 171.4,290.0 172.4,290.8 173.4,292.7 174.4,289.5 175.4,286.7 176.4,286.1 177.4,284.9 178.4,287.3 179.4,285.5 180.4,286.1 181.4,286.6 182.4,289.9 183.4,289.7 184.4,287.3 185.4,286.7 186.4,288.4 187.4,288.9 188.4,287.6 189.4,286.2 190.4,286.1 191.4,286.1 192.4,287.8 193.4,289.5 194.4,291.8 195.4,290.7 196.4,290.0 197.4,287.4 198.4,287.4 199.4,286.4 200.4,285.7 201.4,286.5 202.3,288.9 203.3,291.2 204.3,291.7 205.3,290.7 206.3,289.4 207.3,288.4 208.3,287.8 209.3,287.5 210.3,286.0 211.3,285.1 212.3,286.1 213.3,287.7 214.3,288.6 215.3,289.9 216.3,289.9 217.3,290.9 218.3,290.7 219.3,289.9 220.3,287.7 221.3,287.3 222.3,287.5 223.3,290.4 224.3,290.0 225.3,284.0 226.3,251.7 227.3,226.6 228.3,208.0 229.3,195.2 230.3,187.2 231.3,183.2 232.3,182.0 233.3,182.0 234.3,182.0 235.3,182.0 236.3,182.0 237.2,182.0 238.2,182.5 239.2,186.0 240.2,194.2 241.2,208.7 242.2,230.6 243.2,261.2 244.2,290.3 245.2,289.4 246.2,287.9 247.2,290.1 248.2,291.8 249.2,292.4 250.2,291.1 251.2,290.3 252.2,290.6 253.2,290.3 254.2,289.9 255.2,288.7 256.2,288.3 257.2,290.1 258.2,291.7 259.2,292.3 260.2,290.7 261.2,290.3 262.2,290.6 263.2,290.3 264.2,290.4 265.2,290.3 266.2,290.3 267.2,289.4 268.2,288.4 269.2,288.1 270.2,289.6 271.2,288.4 272.1,289.1 273.1,287.9 274.1,289.4 275.1,289.7 276.1,291.2 277.1,291.8 278.1,291.6 279.1,290.2 280.1,290.0 281.1,290.9 282.1,291.1 283.1,290.2 284.1,288.4 285.1,287.7 286.1,287.5 287.1,289.6 288.1,290.9 289.1,291.9 290.1,292.2 291.1,291.3 292.1,292.1 293.1,291.6 294.1,290.8 295.1,288.8 296.1,287.3 297.1,289.4 298.1,291.9 299.1,291.6 300.1,291.7 301.1,290.3 302.1,291.0 303.1,289.6 304.1,289.6 305.1,288.4 306.0,288.0 307.0,287.2 308.0,289.1 309.0,291.8 310.0,295.2 311.0,294.5 312.0,291.2 313.0,288.4 314.0,287.9 315.0,291.1 316.0,291.9 317.0,292.1 318.0,291.1 319.0,291.1 320.0,290.3 321.0,289.0 322.0,288.3 323.0,289.7 324.0,290.2 325.0,290.1 326.0,290.2 327.0,289.6 328.0,289.1 329.0,290.2 330.0,291.0 331.0,292.1 332.0,289.4 333.0,288.9 334.0,289.2 335.0,289.4 336.0,290.5 337.0,289.4 338.0,290.8 339.0,289.7 340.0,290.2 340.9,290.9 341.9,290.6 342.9,291.7 343.9,290.0 344.9,289.5 345.9,288.7 346.9,288.4 347.9,288.9 348.9,289.0 349.9,291.0 350.9,289.7 351.9,289.3 352.9,289.9 353.9,292.4 354.9,291.7 355.9,289.6 356.9,288.2 357.9,287.4 358.9,287.7 359.9,287.7 360.9,288.6 361.9,289.8 362.9,289.7 363.9,288.5 364.9,288.4 365.9,287.6 366.9,288.5 367.9,287.4 368.9,288.0 369.9,287.5 370.9,287.4 371.9,289.5 372.9,289.9 373.9,289.9 374.9,289.0 375.8,290.1 376.8,290.9 377.8,290.6 378.8,288.3 379.8,286.8 380.8,286.2 381.8,288.3 382.8,290.1 383.8,290.4 384.8,289.7 385.8,288.6 386.8,288.0 387.8,288.4 388.8,289.0 389.8,288.8 390.8,287.9 391.8,286.6 392.8,287.8" fill="none" stroke="#dcdc1e" stroke-width="1.1" stroke-linejoin="round"/><polyline points="412.1,186.5 413.1,186.4 414.1,186.1 415.1,185.9 416.1,185.7 417.1,185.8 418.1,185.7 419.1,185.8 420.1,185.9 421.1,186.3 422.1,186.1 423.1,186.0 424.0,186.2 425.0,186.0 426.0,185.8 427.0,185.9 428.0,186.0 429.0,185.6 430.0,185.9 431.0,185.8 432.0,185.8 433.0,186.1 434.0,186.5 435.0,187.0 436.0,187.2 437.0,187.3 438.0,187.0 439.0,187.1 440.0,186.6 441.0,186.6 442.0,186.8 443.0,186.6 444.0,186.4 445.0,186.3 446.0,186.1 447.0,186.2 447.9,186.4 448.9,186.4 449.9,186.4 450.9,186.3 451.9,186.2 452.9,186.1 453.9,185.9 454.9,186.0 455.9,186.1 456.9,186.0 457.9,186.1 458.9,186.4 459.9,186.4 460.9,186.7 461.9,186.5 462.9,186.5 463.9,186.3 464.9,186.3 465.9,186.3 466.9,186.6 467.9,186.9 468.9,186.6 469.9,186.7 470.9,186.6 471.8,186.8 472.8,186.7 473.8,186.9 474.8,186.9 475.8,186.8 476.8,186.6 477.8,186.3 478.8,186.5 479.8,186.4 480.8,186.5 481.8,186.2 482.8,186.1 483.8,186.2 484.8,186.4 485.8,186.3 486.8,186.3 487.8,186.6 488.8,186.6 489.8,186.4 490.8,186.4 491.8,186.7 492.8,186.5 493.8,186.3 494.8,186.0 495.7,185.9 496.7,185.6 497.7,185.6 498.7,185.5 499.7,186.1 500.7,186.2 501.7,186.2 502.7,186.7 503.7,186.8 504.7,186.2 505.7,186.3 506.7,186.2 507.7,186.1 508.7,185.9 509.7,186.0 510.7,185.7 511.7,185.8 512.7,185.4 513.7,185.6 514.7,185.6 515.7,185.7 516.7,185.8 517.7,186.1 518.7,186.1 519.6,186.0 520.6,186.0 521.6,185.8 522.6,186.1 523.6,186.0 524.6,186.0 525.6,186.0 526.6,185.8 527.6,185.2 528.6,185.3 529.6,185.6 530.6,185.7 531.6,185.8 532.6,185.7 533.6,185.8 534.6,185.5 535.6,185.3 536.6,185.2 537.6,185.5 538.6,185.6 539.6,185.7 540.6,185.9 541.6,186.0 542.6,186.1 543.5,185.9 544.5,186.2 545.5,186.0 546.5,186.0 547.5,186.1 548.5,186.1 549.5,186.0 550.5,186.1 551.5,186.2 552.5,186.0 553.5,185.8 554.5,185.4 555.5,185.8 556.5,185.9 557.5,186.1 558.5,186.4 559.5,186.7 560.5,186.5 561.5,186.4 562.5,186.3 563.5,186.3 564.5,186.2 565.5,185.8 566.5,185.8 567.4,185.8 568.4,185.7 569.4,185.7 570.4,185.8 571.4,185.8 572.4,186.1 573.4,186.0 574.4,186.2 575.4,186.4 576.4,186.5 577.4,186.4 578.4,186.6 579.4,186.4 580.4,186.6 581.4,186.6 582.4,186.4 583.4,186.6 584.4,186.8 585.4,186.9 586.4,187.1 587.4,187.0 588.4,186.7 589.4,186.9 590.4,186.6 591.3,186.1 592.3,186.2 593.3,186.1 594.3,185.8 595.3,186.1 596.3,186.5 597.3,186.5 598.3,186.5 599.3,186.5 600.3,186.1 601.3,186.2 602.3,186.3 603.3,186.3 604.3,186.4 605.3,186.3 606.3,186.4 607.3,186.2 608.3,186.4 609.3,186.2 610.3,186.4 611.3,186.3 612.3,186.3 613.3,186.6 614.3,186.7 615.2,186.8 616.2,186.7 617.2,187.1 618.2,186.9 619.2,187.0 620.2,186.8 621.2,186.8 622.2,186.6 623.2,186.3 624.2,186.1 625.2,186.1 626.2,186.1 627.2,186.0 628.2,185.9 629.2,186.1 630.2,186.7 631.2,187.1 632.2,186.9 633.2,187.1 634.2,187.1 635.2,186.6 636.2,186.5 637.2,186.6 638.2,186.5 639.1,186.4 640.1,186.4 641.1,186.4 642.1,186.5 643.1,186.4 644.1,186.3 645.1,186.2 646.1,186.1 647.1,186.0 648.1,186.3 649.1,186.4 650.1,186.2 651.1,186.1 652.1,186.1 653.1,186.0 654.1,185.8 655.1,186.1 656.1,185.9 657.1,185.8 658.1,185.7 659.1,186.0 660.1,185.8 661.1,185.6 662.1,185.3 663.0,185.2 664.0,185.3 665.0,185.4 666.0,185.3 667.0,185.5 668.0,185.7 669.0,185.7 670.0,185.9 671.0,186.3 672.0,186.5 673.0,186.2 674.0,185.9 675.0,185.6 676.0,185.5 677.0,185.4 678.0,185.5 679.0,185.6 680.0,185.9 681.0,186.2 682.0,186.2 683.0,186.2 684.0,185.9 685.0,185.7 686.0,185.7 686.9,185.4 687.9,185.7 688.9,185.9 689.9,185.9 690.9,185.8 691.9,185.8 692.9,185.9 693.9,185.8 694.9,185.9 695.9,185.8 696.9,186.1 697.9,185.6 698.9,185.8 699.9,185.8 700.9,186.2 701.9,186.0 702.9,186.2 703.9,186.4 704.9,186.1 705.9,186.0 706.9,186.0 707.9,186.1 708.9,186.0 709.9,186.3 710.8,186.3 711.8,186.2 712.8,186.3 713.8,186.0 714.8,186.0 715.8,186.2 716.8,186.5 717.8,186.3 718.8,186.7 719.8,186.6 720.8,186.2 721.8,186.1 722.8,186.4 723.8,186.2 724.8,186.2 725.8,186.3 726.8,186.1 727.8,185.9 728.8,186.0 729.8,186.0 730.8,186.1 731.8,186.0 732.8,186.3 733.8,186.4 734.7,186.5 735.7,186.8 736.7,187.0 737.7,186.8 738.7,186.7 739.7,186.8 740.7,186.4 741.7,186.4 742.7,186.4 743.7,186.5 744.7,186.4 745.7,186.7 746.7,186.5 747.7,186.6 748.7,186.5 749.7,186.1 750.7,186.2 751.7,186.4 752.7,186.5 753.7,186.3 754.7,186.7 755.7,186.4 756.7,186.6 757.7,186.2 758.6,186.6 759.6,186.4 760.6,186.4 761.6,186.2 762.6,186.5 763.6,186.1 764.6,186.1 765.6,186.4 766.6,186.4 767.6,185.9 768.6,186.0 769.6,186.1 770.6,186.1 771.6,186.3 772.6,186.6 773.6,187.1 774.6,187.1 775.6,187.1 776.6,187.1 777.6,187.4 778.6,187.0 779.6,186.7 780.6,186.8 781.6,186.7 782.5,186.3 783.5,186.0 784.5,186.2 785.5,186.0 786.5,186.0 787.5,186.4 788.5,186.6 789.5,186.7 790.5,186.6 791.5,186.5 792.5,186.4 793.5,186.5" fill="none" stroke="#dcdc1e" stroke-width="1.2"/><polyline points="813.0,185.2 813.5,184.2 814.0,183.0 814.5,182.1 815.0,178.6 815.5,176.0 816.0,178.6 816.5,180.7 817.0,179.3 817.5,178.9 818.0,178.9 818.5,179.9 819.0,181.1 819.5,182.0 820.0,182.7 820.5,182.6 821.0,182.9 821.5,183.7 822.0,185.0 822.5,187.4 823.0,188.7 823.5,190.2 824.0,191.2 824.5,193.1 825.0,194.7 825.5,196.7 826.0,198.6 826.5,200.6 827.0,202.6 827.5,205.1 828.0,207.8 828.5,210.3 829.0,213.0 829.5,215.4 830.0,217.3 830.5,219.2 831.0,222.2 831.5,226.0 832.0,229.9 832.5,233.3 833.0,236.5 833.5,239.3 834.0,242.3 834.5,244.4 835.0,247.7 835.5,250.7 836.0,254.3 836.5,257.1 837.0,259.8 837.5,263.1 838.0,266.7 838.5,270.0 839.0,273.3 839.5,275.8 840.0,279.0 840.5,281.6 841.0,284.9 841.5,287.7 842.0,290.9 842.5,293.5 843.0,296.0 843.5,298.5 844.0,301.6 844.5,304.9 844.9,307.4 845.4,309.7 845.9,311.8 846.4,314.2 846.9,315.7 847.4,317.5 847.9,319.1 848.4,321.7 848.9,323.5 849.4,325.6 849.9,326.0 850.4,327.3 850.9,328.6 851.4,330.1 851.9,331.2 852.4,331.9 852.9,333.0 853.4,333.2 853.9,333.4 854.4,333.7 854.9,335.0 855.4,335.5 855.9,335.7 856.4,334.5 856.9,334.0 857.4,333.4 857.9,332.8 858.4,332.6 858.9,331.9 859.4,331.5 859.9,329.9 860.4,329.1 860.9,327.6 861.4,326.7 861.9,324.9 862.4,323.1 862.9,321.5 863.4,319.6 863.9,317.9 864.4,315.3 864.9,313.3 865.4,311.0 865.9,309.1 866.4,306.7 866.9,304.2 867.4,301.1 867.9,298.5 868.4,296.3 868.9,294.1 869.4,290.8 869.9,287.9 870.4,284.8 870.9,282.3 871.4,279.2 871.9,276.0 872.4,272.8 872.9,269.9 873.4,266.7 873.9,263.1 874.4,259.6 874.9,256.7 875.4,253.4 875.9,250.1 876.4,247.0 876.9,244.4 877.4,241.5 877.9,237.9 878.4,235.1 878.9,232.6 879.4,229.9 879.9,226.5 880.4,222.8 880.9,220.3 881.4,217.8 881.9,215.2 882.4,212.7 882.9,210.4 883.4,208.3 883.9,205.1 884.4,202.5 884.9,200.3 885.4,198.4 885.9,196.7 886.4,195.0 886.9,193.8 887.4,191.6 887.9,189.4 888.4,187.9 888.9,187.1 889.4,186.4 889.9,185.4 890.4,184.0 890.9,182.7 891.4,181.1 891.9,180.7 892.4,181.0 892.9,181.0 893.4,178.5 893.9,175.5 894.4,176.9 894.9,179.3 895.4,179.9 895.9,179.8 896.4,181.4 896.9,182.0 897.4,183.4 897.9,184.2 898.4,186.0 898.9,187.3 899.4,188.5 899.9,189.0 900.4,190.0 900.9,191.0 901.4,193.0 901.9,195.7 902.4,197.3 902.9,199.6 903.4,200.6 903.9,203.7 904.4,206.3 904.9,208.9 905.4,211.6 905.9,213.8 906.4,216.9 906.9,219.1 907.4,221.7 907.9,224.1 908.4,226.8 908.8,230.1 909.3,233.3 909.8,237.0 910.3,239.8 910.8,242.7 911.3,245.0 911.8,247.9 912.3,250.8 912.8,253.9 913.3,257.5 913.8,261.1 914.3,264.5 914.8,267.5 915.3,270.9 915.8,274.2 916.3,277.4 916.8,280.0 917.3,282.8 917.8,285.3 918.3,288.3 918.8,291.0 919.3,294.0 919.8,296.7 920.3,299.5 920.8,302.2 921.3,304.6 921.8,307.5 922.3,309.9 922.8,312.0 923.3,313.9 923.8,315.7 924.3,317.7 924.8,319.6 925.3,321.2 925.8,322.3 926.3,323.9 926.8,326.1 927.3,327.9 927.8,328.8 928.3,329.8 928.8,330.7 929.3,331.5 929.8,331.8 930.3,332.9 930.8,333.1 931.3,334.0 931.8,334.3 932.3,335.0 932.8,334.6 933.3,333.9 933.8,333.5 934.3,332.7 934.8,332.8 935.3,331.9 935.8,331.4 936.3,330.4 936.8,329.8 937.3,329.0 937.8,327.5 938.3,325.8 938.8,324.5 939.3,323.3 939.8,321.4 940.3,319.1 940.8,316.9 941.3,315.3 941.8,313.2 942.3,311.2 942.8,309.2 943.3,306.4 943.8,303.5 944.3,299.8 944.8,297.0 945.3,294.9 945.8,292.7 946.3,290.8 946.8,287.1 947.3,283.8 947.8,280.7 948.3,278.6 948.8,276.0 949.3,272.8 949.8,269.4 950.3,266.0 950.8,262.6 951.3,259.6 951.8,256.4 952.3,253.4 952.8,250.4 953.3,247.0 953.8,243.5 954.3,240.2 954.8,237.3 955.3,234.5 955.8,231.9 956.3,229.1 956.8,226.2 957.3,223.0 957.8,220.8 958.3,217.9 958.8,214.7 959.3,211.4 959.8,209.0 960.3,207.4 960.8,205.2 961.3,203.0 961.8,200.3 962.3,197.8 962.8,195.8 963.3,193.8 963.8,192.9 964.3,190.8 964.8,189.3 965.3,187.6 965.8,187.1 966.3,186.3 966.8,185.0 967.3,183.9 967.8,182.4 968.3,181.3 968.8,181.2 969.3,180.4 969.8,180.3 970.3,179.4 970.8,179.5 971.3,178.9 971.8,179.2 972.2,179.7 972.7,180.9 973.2,181.8 973.7,182.4 974.2,183.0 974.7,183.8 975.2,185.1 975.7,186.2 976.2,187.0 976.7,187.9 977.2,190.0 977.7,192.4 978.2,194.2 978.7,195.7 979.2,197.7 979.7,200.4 980.2,202.3 980.7,204.3 981.2,206.6 981.7,209.9 982.2,212.9 982.7,214.8 983.2,216.9 983.7,219.1 984.2,222.2 984.7,224.7 985.2,227.6 985.7,230.5 986.2,234.2 986.7,237.6 987.2,240.8 987.7,243.4 988.2,246.1 988.7,249.0 989.2,252.5 989.7,256.2 990.2,259.9 990.7,262.8 991.2,265.7 991.7,267.8 992.2,271.0 992.7,273.6 993.2,277.6 993.7,280.3 994.2,283.8 994.7,285.9 995.2,288.9 995.7,291.5 996.2,295.0 996.7,297.9 997.2,300.5 997.7,302.2 998.2,304.6 998.7,307.3 999.2,309.8 999.7,312.3 1000.2,314.6 1000.7,317.0 1001.2,318.6 1001.7,320.4 1002.2,322.0 1002.7,323.3 1003.2,325.2 1003.7,326.9 1004.2,328.2 1004.7,329.2 1005.2,330.5 1005.7,332.0 1006.2,333.2 1006.7,333.5 1007.2,334.0 1007.7,333.7 1008.2,333.8 1008.7,333.5 1009.2,333.7 1009.7,333.9 1010.2,334.4 1010.7,334.7 1011.2,334.2 1011.7,333.2 1012.2,332.2 1012.7,331.3 1013.2,331.2 1013.7,330.5 1014.2,329.6 1014.7,327.5 1015.2,325.3 1015.7,323.6 1016.2,322.0 1016.7,320.5 1017.2,318.8 1017.7,317.3 1018.2,315.1 1018.7,312.5 1019.2,309.7 1019.7,307.3 1020.2,305.5 1020.7,303.7 1021.2,301.4 1021.7,298.4 1022.2,295.5 1022.7,292.6 1023.2,290.0 1023.7,287.2 1024.2,283.5 1024.7,280.4 1025.2,277.3 1025.7,274.5 1026.2,271.3 1026.7,268.1 1027.2,265.1 1027.7,261.3 1028.2,258.1 1028.7,255.1 1029.2,252.4 1029.7,248.8 1030.2,245.6 1030.7,242.7 1031.2,240.1 1031.7,237.1 1032.2,233.7 1032.7,230.5 1033.2,227.6 1033.7,224.7 1034.2,222.1 1034.7,220.1 1035.2,217.7 1035.7,215.0 1036.1,211.0 1036.6,208.3 1037.1,206.1 1037.6,204.0 1038.1,201.7 1038.6,198.6 1039.1,197.0 1039.6,194.9 1040.1,193.9 1040.6,192.4 1041.1,190.9 1041.6,189.4 1042.1,187.7 1042.6,186.4 1043.1,184.8 1043.6,183.5 1044.1,182.9 1044.6,182.5 1045.1,181.7 1045.6,181.1 1046.1,180.2 1046.6,179.7 1047.1,179.6 1047.6,179.4 1048.1,180.3 1048.6,180.2 1049.1,181.2 1049.6,181.5 1050.1,182.4 1050.6,182.9 1051.1,183.8 1051.6,184.5 1052.1,185.8 1052.6,186.8 1053.1,188.3 1053.6,189.9 1054.1,191.5 1054.6,193.1 1055.1,194.3 1055.6,196.1 1056.1,198.0 1056.6,200.2 1057.1,202.2 1057.6,204.4 1058.1,206.9 1058.6,209.7 1059.1,212.4 1059.6,214.5 1060.1,217.4 1060.6,219.9 1061.1,223.0 1061.6,225.4 1062.1,228.5 1062.6,231.9 1063.1,234.9 1063.6,237.9 1064.1,240.2 1064.6,243.5 1065.1,246.5 1065.6,250.0 1066.1,253.4 1066.6,257.1 1067.1,260.7 1067.6,263.4 1068.1,266.4 1068.6,269.2 1069.1,272.5 1069.6,275.0 1070.1,278.3 1070.6,281.5 1071.1,284.7 1071.6,287.4 1072.1,290.1 1072.6,292.8 1073.1,295.9 1073.6,298.5 1074.1,301.2 1074.6,303.4 1075.1,305.9 1075.6,308.3 1076.1,310.2 1076.6,312.8 1077.1,315.2 1077.6,317.5 1078.1,319.8 1078.6,321.3 1079.1,323.2 1079.6,324.6 1080.1,326.2 1080.6,327.3 1081.1,328.7 1081.6,330.1 1082.1,331.2 1082.6,332.3 1083.1,333.2 1083.6,333.3 1084.1,333.2 1084.6,333.8 1085.1,334.5 1085.6,334.6 1086.1,333.8 1086.6,333.8 1087.1,334.3 1087.6,334.2 1088.1,333.0 1088.6,332.1 1089.1,331.5 1089.6,331.2 1090.1,330.0 1090.6,328.7 1091.1,327.7 1091.6,326.7 1092.1,325.6 1092.6,323.8 1093.1,322.1 1093.6,320.2 1094.1,318.6 1094.6,316.0 1095.1,314.1 1095.6,312.0 1096.1,310.3 1096.6,307.8 1097.1,305.2 1097.6,302.2 1098.1,299.8 1098.6,297.2 1099.1,294.9 1099.5,291.8 1100.0,288.3 1100.5,285.1 1101.0,282.2 1101.5,279.3 1102.0,276.4 1102.5,273.7 1103.0,270.9 1103.5,267.9 1104.0,264.6 1104.5,261.1 1105.0,257.4 1105.5,254.0 1106.0,251.4 1106.5,248.6 1107.0,245.6 1107.5,242.6 1108.0,239.0 1108.5,235.9 1109.0,233.0 1109.5,230.4 1110.0,227.8 1110.5,224.0 1111.0,220.5 1111.5,217.2 1112.0,215.3 1112.5,213.6 1113.0,211.2 1113.5,208.1 1114.0,205.0 1114.5,202.6 1115.0,200.8 1115.5,198.8 1116.0,197.6 1116.5,195.7 1117.0,193.8 1117.5,191.6 1118.0,189.7 1118.5,188.7 1119.0,187.5 1119.5,186.1 1120.0,185.0 1120.5,183.9 1121.0,183.1 1121.5,182.1 1122.0,181.5 1122.5,180.9 1123.0,180.2 1123.5,180.1 1124.0,177.5 1124.5,175.2 1125.0,177.5 1125.5,179.8 1126.0,180.4 1126.5,180.4 1127.0,181.3 1127.5,181.5 1128.0,182.6 1128.5,184.0 1129.0,185.6 1129.5,186.7 1130.0,188.3 1130.5,189.6 1131.0,192.0 1131.5,193.1 1132.0,194.6 1132.5,196.6 1133.0,198.7 1133.5,201.4 1134.0,203.5 1134.5,205.5 1135.0,207.7 1135.5,209.7 1136.0,212.8 1136.5,215.4 1137.0,217.9 1137.5,220.5 1138.0,223.5 1138.5,226.7 1139.0,229.7 1139.5,232.3 1140.0,235.4 1140.5,238.4 1141.0,241.7 1141.5,245.2 1142.0,248.5 1142.5,251.8 1143.0,254.8 1143.5,257.7 1144.0,260.3 1144.5,263.6 1145.0,267.2 1145.5,270.7 1146.0,273.5 1146.5,276.0 1147.0,279.4 1147.5,282.5 1148.0,285.2 1148.5,287.8 1149.0,290.4 1149.5,293.4 1150.0,296.0 1150.5,298.6 1151.0,301.7 1151.5,304.8 1152.0,307.1 1152.5,308.8 1153.0,310.7 1153.5,313.2 1154.0,315.2 1154.5,317.6 1155.0,319.2 1155.5,321.6 1156.0,323.2 1156.5,325.2 1157.0,326.3 1157.5,327.5 1158.0,328.9 1158.5,329.6 1159.0,330.2 1159.5,331.2 1160.0,332.6 1160.5,333.4 1161.0,333.5 1161.5,333.7 1162.0,333.9 1162.5,335.1 1163.0,334.9 1163.4,335.4 1163.9,334.5 1164.4,334.5 1164.9,333.6 1165.4,332.7 1165.9,332.4 1166.4,331.5 1166.9,330.6 1167.4,329.0 1167.9,327.6 1168.4,325.9 1168.9,324.4 1169.4,322.5 1169.9,321.3 1170.4,319.8 1170.9,317.5 1171.4,315.2 1171.9,313.2 1172.4,311.1 1172.9,308.6 1173.4,306.2 1173.9,304.0 1174.4,301.7 1174.9,298.4 1175.4,295.8 1175.9,293.0 1176.4,290.6 1176.9,287.8 1177.4,285.2 1177.9,282.0 1178.4,278.8 1178.9,275.5 1179.4,272.5 1179.9,269.6 1180.4,266.3 1180.9,263.1 1181.4,259.7 1181.9,256.5 1182.4,253.5 1182.9,250.8 1183.4,247.7 1183.9,244.7 1184.4,241.4 1184.9,238.5 1185.4,235.4 1185.9,232.2 1186.4,229.3 1186.9,226.3 1187.4,222.6 1187.9,219.7 1188.4,217.1 1188.9,215.9 1189.4,212.9 1189.9,210.2 1190.4,207.3 1190.9,204.9 1191.4,203.0 1191.9,200.8 1192.4,198.7 1192.9,196.1 1193.4,193.9 1193.9,193.0 1194.4,192.3 1194.9,190.1" fill="none" stroke="#dcdc1e" stroke-width="1.15" stroke-linejoin="round"/><rect x="39.5" y="432.5" width="554.6" height="10" fill="url(#cbar)"/><rect x="39.5" y="442.5" width="554.6" height="198.9" fill="#00fd7e"/><g clip-path="url(#wfc)"><polygon points="234.0,430.5 237.2,430.9 240.6,431.3 244.3,431.7 248.2,432.1 252.2,432.5 256.4,432.9 260.8,433.3 265.4,433.7 270.0,434.1 274.9,434.5 279.8,434.9 284.9,435.3 290.0,435.7 295.3,436.1 300.6,436.5 306.0,436.9 311.4,437.3 316.9,437.7 322.4,438.1 327.8,438.5 333.3,438.9 338.8,439.3 344.2,439.7 349.6,440.1 354.9,440.5 360.2,440.9 365.3,441.3 370.4,441.7 375.3,442.1 380.2,442.5 384.8,442.9 389.4,443.3 393.8,443.7 398.0,444.1 402.0,444.5 405.9,444.9 409.6,445.3 413.0,445.7 416.2,446.1 419.3,446.5 422.0,446.9 424.6,447.3 426.9,447.7 428.9,448.1 430.7,448.5 432.3,448.9 433.6,449.3 434.6,449.7 435.3,450.1 435.8,450.5 436.0,450.9 435.9,451.3 435.6,451.7 435.0,452.1 434.1,452.5 433.0,452.9 431.5,453.3 429.9,453.7 427.9,454.1 425.8,454.5 423.3,454.9 420.7,455.3 417.8,455.7 414.7,456.1 411.3,456.5 407.8,456.9 404.0,457.3 400.1,457.7 395.9,458.1 391.6,458.5 387.1,458.9 382.5,459.3 377.8,459.7 372.9,460.1 367.9,460.5 362.7,460.9 357.5,461.3 352.3,461.7 346.9,462.1 341.5,462.5 336.1,462.9 330.6,463.3 325.1,463.7 319.6,464.1 314.1,464.5 308.7,464.9 303.3,465.3 297.9,465.7 292.7,466.1 287.5,466.5 282.3,466.9 277.3,467.3 272.4,467.7 267.7,468.1 263.1,468.5 258.6,468.9 254.3,469.3 250.1,469.7 246.2,470.1 242.4,470.5 238.9,470.9 235.5,471.3 232.4,471.7 229.5,472.1 226.9,472.5 224.4,472.9 222.3,473.3 220.3,473.7 218.7,474.1 217.2,474.5 216.1,474.9 215.2,475.3 214.6,475.7 214.3,476.1 214.2,476.5 214.4,476.9 214.9,477.3 215.6,477.7 216.6,478.1 217.9,478.5 219.5,478.9 221.3,479.3 223.3,479.7 225.6,480.1 228.2,480.5 230.9,480.9 234.0,481.3 237.2,481.7 240.6,482.1 244.3,482.5 248.2,482.9 252.2,483.3 256.4,483.7 260.8,484.1 265.4,484.5 270.0,484.9 274.9,485.3 279.8,485.7 284.9,486.1 290.0,486.5 295.3,486.9 300.6,487.3 306.0,487.7 311.4,488.1 316.9,488.5 322.4,488.9 327.8,489.3 333.3,489.7 338.8,490.1 344.2,490.5 349.6,490.9 354.9,491.3 360.2,491.7 365.3,492.1 370.4,492.5 375.3,492.9 380.2,493.3 384.8,493.7 389.4,494.1 393.8,494.5 398.0,494.9 402.0,495.3 405.9,495.7 409.6,496.1 413.0,496.5 416.2,496.9 419.3,497.3 422.0,497.7 424.6,498.1 426.9,498.5 428.9,498.9 430.7,499.3 432.3,499.7 433.6,500.1 434.6,500.5 435.3,500.9 435.8,501.3 436.0,501.7 435.9,502.1 435.6,502.5 435.0,502.9 434.1,503.3 433.0,503.7 431.5,504.1 429.9,504.5 427.9,504.9 425.8,505.3 423.3,505.7 420.7,506.1 417.8,506.5 414.7,506.9 411.3,507.3 407.8,507.7 404.0,508.1 400.1,508.5 395.9,508.9 391.6,509.3 387.1,509.7 382.5,510.1 377.8,510.5 372.9,510.9 367.9,511.3 362.7,511.7 357.5,512.1 352.3,512.5 346.9,512.9 341.5,513.3 336.1,513.7 330.6,514.1 325.1,514.5 319.6,514.9 314.1,515.3 308.7,515.7 303.3,516.1 297.9,516.5 292.7,516.9 287.5,517.3 282.3,517.7 277.3,518.1 272.4,518.5 267.7,518.9 263.1,519.3 258.6,519.7 254.3,520.1 250.1,520.5 246.2,520.9 242.4,521.3 238.9,521.7 235.5,522.1 232.4,522.5 229.5,522.9 226.9,523.3 224.4,523.7 222.3,524.1 220.3,524.5 218.7,524.9 217.2,525.3 216.1,525.7 215.2,526.1 214.6,526.5 214.3,526.9 214.2,527.3 214.4,527.7 214.9,528.1 215.6,528.5 216.6,528.9 217.9,529.3 219.5,529.7 221.3,530.1 223.3,530.5 225.6,530.9 228.2,531.3 230.9,531.7 234.0,532.1 237.2,532.5 240.6,532.9 244.3,533.3 248.2,533.7 252.2,534.1 256.4,534.5 260.8,534.9 265.4,535.3 270.0,535.7 274.9,536.1 279.8,536.5 284.9,536.9 290.0,537.3 295.3,537.7 300.6,538.1 306.0,538.5 311.4,538.9 316.9,539.3 322.4,539.7 327.8,540.1 333.3,540.5 338.8,540.9 344.2,541.3 349.6,541.7 354.9,542.1 360.2,542.5 365.3,542.9 370.4,543.3 375.3,543.7 380.2,544.1 384.8,544.5 389.4,544.9 393.8,545.3 398.0,545.7 402.0,546.1 405.9,546.5 409.6,546.9 413.0,547.3 416.2,547.7 419.3,548.1 422.0,548.5 424.6,548.9 426.9,549.3 428.9,549.7 430.7,550.1 432.3,550.5 433.6,550.9 434.6,551.3 435.3,551.7 435.8,552.1 436.0,552.5 435.9,552.9 435.6,553.3 435.0,553.7 434.1,554.1 433.0,554.5 431.5,554.9 429.9,555.3 427.9,555.7 425.8,556.1 423.3,556.5 420.7,556.9 417.8,557.3 414.7,557.7 411.3,558.1 407.8,558.5 404.0,558.9 400.1,559.3 395.9,559.7 391.6,560.1 387.1,560.5 382.5,560.9 377.8,561.3 372.9,561.7 367.9,562.1 362.7,562.5 357.5,562.9 352.3,563.3 346.9,563.7 341.5,564.1 336.1,564.5 330.6,564.9 325.1,565.3 319.6,565.7 314.1,566.1 308.7,566.5 303.3,566.9 297.9,567.3 292.7,567.7 287.5,568.1 282.3,568.5 277.3,568.9 272.4,569.3 267.7,569.7 263.1,570.1 258.6,570.5 254.3,570.9 250.1,571.3 246.2,571.7 242.4,572.1 238.9,572.5 235.5,572.9 232.4,573.3 229.5,573.7 226.9,574.1 224.4,574.5 222.3,574.9 220.3,575.3 218.7,575.7 217.2,576.1 216.1,576.5 215.2,576.9 214.6,577.3 214.3,577.7 214.2,578.1 214.4,578.5 214.9,578.9 215.6,579.3 216.6,579.7 217.9,580.1 219.5,580.5 221.3,580.9 223.3,581.3 225.6,581.7 228.2,582.1 230.9,582.5 234.0,582.9 237.2,583.3 240.6,583.7 244.3,584.1 248.2,584.5 252.2,584.9 256.4,585.3 260.8,585.7 265.4,586.1 270.0,586.5 274.9,586.9 279.8,587.3 284.9,587.7 290.0,588.1 295.3,588.5 300.6,588.9 306.0,589.3 311.4,589.7 316.9,590.1 322.4,590.5 327.8,590.9 333.3,591.3 338.8,591.7 344.2,592.1 349.6,592.5 354.9,592.9 360.2,593.3 365.3,593.7 370.4,594.1 375.3,594.5 380.2,594.9 384.8,595.3 389.4,595.7 393.8,596.1 398.0,596.5 402.0,596.9 405.9,597.3 409.6,597.7 413.0,598.1 416.2,598.5 419.3,598.9 422.0,599.3 424.6,599.7 426.9,600.1 428.9,600.5 430.7,600.9 432.3,601.3 433.6,601.7 434.6,602.1 435.3,602.5 435.8,602.9 436.0,603.3 435.9,603.7 435.6,604.1 435.0,604.5 434.1,604.9 433.0,605.3 431.5,605.7 429.9,606.1 427.9,606.5 425.8,606.9 423.3,607.3 420.7,607.7 417.8,608.1 414.7,608.5 411.3,608.9 407.8,609.3 404.0,609.7 400.1,610.1 395.9,610.5 391.6,610.9 387.1,611.3 382.5,611.7 377.8,612.1 372.9,612.5 367.9,612.9 362.7,613.3 357.5,613.7 352.3,614.1 346.9,614.5 341.5,614.9 336.1,615.3 330.6,615.7 325.1,616.1 319.6,616.5 314.1,616.9 308.7,617.3 303.3,617.7 297.9,618.1 292.7,618.5 287.5,618.9 282.3,619.3 277.3,619.7 272.4,620.1 267.7,620.5 263.1,620.9 258.6,621.3 254.3,621.7 250.1,622.1 246.2,622.5 242.4,622.9 238.9,623.3 235.5,623.7 232.4,624.1 229.5,624.5 226.9,624.9 224.4,625.3 222.3,625.7 220.3,626.1 218.7,626.5 217.2,626.9 216.1,627.3 215.2,627.7 214.6,628.1 214.3,628.5 214.2,628.9 214.4,629.3 214.9,629.7 215.6,630.1 216.6,630.5 217.9,630.9 219.5,631.3 221.3,631.7 223.3,632.1 225.6,632.5 228.2,632.9 230.9,633.3 234.0,633.7 237.2,634.1 240.6,634.5 244.3,634.9 248.2,635.3 252.2,635.7 256.4,636.1 260.8,636.5 265.4,636.9 270.0,637.3 274.9,637.7 279.8,638.1 284.9,638.5 290.0,638.9 295.3,639.3 300.6,639.7 306.0,640.1 311.4,640.5 316.9,640.9 322.4,641.3 327.8,641.7 333.3,642.1 338.8,642.5 344.2,642.9 349.6,643.3 354.9,643.7 360.2,644.1 365.3,644.5 370.4,644.9 375.3,645.3 380.2,645.7 384.8,646.1 389.4,646.5 393.8,646.9 398.0,647.3 402.0,647.7 405.9,648.1 409.6,648.5 413.0,648.9 416.2,649.3 419.3,649.7 422.0,650.1 424.6,650.5 426.9,650.9 428.9,651.3 430.7,651.7 432.3,652.1 433.6,652.5 434.6,652.9 435.3,653.3 418.3,653.3 417.6,652.9 416.6,652.5 415.3,652.1 413.7,651.7 411.9,651.3 409.9,650.9 407.6,650.5 405.0,650.1 402.3,649.7 399.2,649.3 396.0,648.9 392.6,648.5 388.9,648.1 385.0,647.7 381.0,647.3 376.8,646.9 372.4,646.5 367.8,646.1 363.2,645.7 358.3,645.3 353.4,644.9 348.3,644.5 343.2,644.1 337.9,643.7 332.6,643.3 327.2,642.9 321.8,642.5 316.3,642.1 310.8,641.7 305.4,641.3 299.9,640.9 294.4,640.5 289.0,640.1 283.6,639.7 278.3,639.3 273.0,638.9 267.9,638.5 262.8,638.1 257.9,637.7 253.0,637.3 248.4,636.9 243.8,636.5 239.4,636.1 235.2,635.7 231.2,635.3 227.3,634.9 223.6,634.5 220.2,634.1 217.0,633.7 213.9,633.3 211.2,632.9 208.6,632.5 206.3,632.1 204.3,631.7 202.5,631.3 200.9,630.9 199.6,630.5 198.6,630.1 197.9,629.7 197.4,629.3 197.2,628.9 197.3,628.5 197.6,628.1 198.2,627.7 199.1,627.3 200.2,626.9 201.7,626.5 203.3,626.1 205.3,625.7 207.4,625.3 209.9,624.9 212.5,624.5 215.4,624.1 218.5,623.7 221.9,623.3 225.4,622.9 229.2,622.5 233.1,622.1 237.3,621.7 241.6,621.3 246.1,620.9 250.7,620.5 255.4,620.1 260.3,619.7 265.3,619.3 270.5,618.9 275.7,618.5 280.9,618.1 286.3,617.7 291.7,617.3 297.1,616.9 302.6,616.5 308.1,616.1 313.6,615.7 319.1,615.3 324.5,614.9 329.9,614.5 335.3,614.1 340.5,613.7 345.7,613.3 350.9,612.9 355.9,612.5 360.8,612.1 365.5,611.7 370.1,611.3 374.6,610.9 378.9,610.5 383.1,610.1 387.0,609.7 390.8,609.3 394.3,608.9 397.7,608.5 400.8,608.1 403.7,607.7 406.3,607.3 408.8,606.9 410.9,606.5 412.9,606.1 414.5,605.7 416.0,605.3 417.1,604.9 418.0,604.5 418.6,604.1 418.9,603.7 419.0,603.3 418.8,602.9 418.3,602.5 417.6,602.1 416.6,601.7 415.3,601.3 413.7,600.9 411.9,600.5 409.9,600.1 407.6,599.7 405.0,599.3 402.3,598.9 399.2,598.5 396.0,598.1 392.6,597.7 388.9,597.3 385.0,596.9 381.0,596.5 376.8,596.1 372.4,595.7 367.8,595.3 363.2,594.9 358.3,594.5 353.4,594.1 348.3,593.7 343.2,593.3 337.9,592.9 332.6,592.5 327.2,592.1 321.8,591.7 316.3,591.3 310.8,590.9 305.4,590.5 299.9,590.1 294.4,589.7 289.0,589.3 283.6,588.9 278.3,588.5 273.0,588.1 267.9,587.7 262.8,587.3 257.9,586.9 253.0,586.5 248.4,586.1 243.8,585.7 239.4,585.3 235.2,584.9 231.2,584.5 227.3,584.1 223.6,583.7 220.2,583.3 217.0,582.9 213.9,582.5 211.2,582.1 208.6,581.7 206.3,581.3 204.3,580.9 202.5,580.5 200.9,580.1 199.6,579.7 198.6,579.3 197.9,578.9 197.4,578.5 197.2,578.1 197.3,577.7 197.6,577.3 198.2,576.9 199.1,576.5 200.2,576.1 201.7,575.7 203.3,575.3 205.3,574.9 207.4,574.5 209.9,574.1 212.5,573.7 215.4,573.3 218.5,572.9 221.9,572.5 225.4,572.1 229.2,571.7 233.1,571.3 237.3,570.9 241.6,570.5 246.1,570.1 250.7,569.7 255.4,569.3 260.3,568.9 265.3,568.5 270.5,568.1 275.7,567.7 280.9,567.3 286.3,566.9 291.7,566.5 297.1,566.1 302.6,565.7 308.1,565.3 313.6,564.9 319.1,564.5 324.5,564.1 329.9,563.7 335.3,563.3 340.5,562.9 345.7,562.5 350.9,562.1 355.9,561.7 360.8,561.3 365.5,560.9 370.1,560.5 374.6,560.1 378.9,559.7 383.1,559.3 387.0,558.9 390.8,558.5 394.3,558.1 397.7,557.7 400.8,557.3 403.7,556.9 406.3,556.5 408.8,556.1 410.9,555.7 412.9,555.3 414.5,554.9 416.0,554.5 417.1,554.1 418.0,553.7 418.6,553.3 418.9,552.9 419.0,552.5 418.8,552.1 418.3,551.7 417.6,551.3 416.6,550.9 415.3,550.5 413.7,550.1 411.9,549.7 409.9,549.3 407.6,548.9 405.0,548.5 402.3,548.1 399.2,547.7 396.0,547.3 392.6,546.9 388.9,546.5 385.0,546.1 381.0,545.7 376.8,545.3 372.4,544.9 367.8,544.5 363.2,544.1 358.3,543.7 353.4,543.3 348.3,542.9 343.2,542.5 337.9,542.1 332.6,541.7 327.2,541.3 321.8,540.9 316.3,540.5 310.8,540.1 305.4,539.7 299.9,539.3 294.4,538.9 289.0,538.5 283.6,538.1 278.3,537.7 273.0,537.3 267.9,536.9 262.8,536.5 257.9,536.1 253.0,535.7 248.4,535.3 243.8,534.9 239.4,534.5 235.2,534.1 231.2,533.7 227.3,533.3 223.6,532.9 220.2,532.5 217.0,532.1 213.9,531.7 211.2,531.3 208.6,530.9 206.3,530.5 204.3,530.1 202.5,529.7 200.9,529.3 199.6,528.9 198.6,528.5 197.9,528.1 197.4,527.7 197.2,527.3 197.3,526.9 197.6,526.5 198.2,526.1 199.1,525.7 200.2,525.3 201.7,524.9 203.3,524.5 205.3,524.1 207.4,523.7 209.9,523.3 212.5,522.9 215.4,522.5 218.5,522.1 221.9,521.7 225.4,521.3 229.2,520.9 233.1,520.5 237.3,520.1 241.6,519.7 246.1,519.3 250.7,518.9 255.4,518.5 260.3,518.1 265.3,517.7 270.5,517.3 275.7,516.9 280.9,516.5 286.3,516.1 291.7,515.7 297.1,515.3 302.6,514.9 308.1,514.5 313.6,514.1 319.1,513.7 324.5,513.3 329.9,512.9 335.3,512.5 340.5,512.1 345.7,511.7 350.9,511.3 355.9,510.9 360.8,510.5 365.5,510.1 370.1,509.7 374.6,509.3 378.9,508.9 383.1,508.5 387.0,508.1 390.8,507.7 394.3,507.3 397.7,506.9 400.8,506.5 403.7,506.1 406.3,505.7 408.8,505.3 410.9,504.9 412.9,504.5 414.5,504.1 416.0,503.7 417.1,503.3 418.0,502.9 418.6,502.5 418.9,502.1 419.0,501.7 418.8,501.3 418.3,500.9 417.6,500.5 416.6,500.1 415.3,499.7 413.7,499.3 411.9,498.9 409.9,498.5 407.6,498.1 405.0,497.7 402.3,497.3 399.2,496.9 396.0,496.5 392.6,496.1 388.9,495.7 385.0,495.3 381.0,494.9 376.8,494.5 372.4,494.1 367.8,493.7 363.2,493.3 358.3,492.9 353.4,492.5 348.3,492.1 343.2,491.7 337.9,491.3 332.6,490.9 327.2,490.5 321.8,490.1 316.3,489.7 310.8,489.3 305.4,488.9 299.9,488.5 294.4,488.1 289.0,487.7 283.6,487.3 278.3,486.9 273.0,486.5 267.9,486.1 262.8,485.7 257.9,485.3 253.0,484.9 248.4,484.5 243.8,484.1 239.4,483.7 235.2,483.3 231.2,482.9 227.3,482.5 223.6,482.1 220.2,481.7 217.0,481.3 213.9,480.9 211.2,480.5 208.6,480.1 206.3,479.7 204.3,479.3 202.5,478.9 200.9,478.5 199.6,478.1 198.6,477.7 197.9,477.3 197.4,476.9 197.2,476.5 197.3,476.1 197.6,475.7 198.2,475.3 199.1,474.9 200.2,474.5 201.7,474.1 203.3,473.7 205.3,473.3 207.4,472.9 209.9,472.5 212.5,472.1 215.4,471.7 218.5,471.3 221.9,470.9 225.4,470.5 229.2,470.1 233.1,469.7 237.3,469.3 241.6,468.9 246.1,468.5 250.7,468.1 255.4,467.7 260.3,467.3 265.3,466.9 270.5,466.5 275.7,466.1 280.9,465.7 286.3,465.3 291.7,464.9 297.1,464.5 302.6,464.1 308.1,463.7 313.6,463.3 319.1,462.9 324.5,462.5 329.9,462.1 335.3,461.7 340.5,461.3 345.7,460.9 350.9,460.5 355.9,460.1 360.8,459.7 365.5,459.3 370.1,458.9 374.6,458.5 378.9,458.1 383.1,457.7 387.0,457.3 390.8,456.9 394.3,456.5 397.7,456.1 400.8,455.7 403.7,455.3 406.3,454.9 408.8,454.5 410.9,454.1 412.9,453.7 414.5,453.3 416.0,452.9 417.1,452.5 418.0,452.1 418.6,451.7 418.9,451.3 419.0,450.9 418.8,450.5 418.3,450.1 417.6,449.7 416.6,449.3 415.3,448.9 413.7,448.5 411.9,448.1 409.9,447.7 407.6,447.3 405.0,446.9 402.3,446.5 399.2,446.1 396.0,445.7 392.6,445.3 388.9,444.9 385.0,444.5 381.0,444.1 376.8,443.7 372.4,443.3 367.8,442.9 363.2,442.5 358.3,442.1 353.4,441.7 348.3,441.3 343.2,440.9 337.9,440.5 332.6,440.1 327.2,439.7 321.8,439.3 316.3,438.9 310.8,438.5 305.4,438.1 299.9,437.7 294.4,437.3 289.0,436.9 283.6,436.5 278.3,436.1 273.0,435.7 267.9,435.3 262.8,434.9 257.9,434.5 253.0,434.1 248.4,433.7 243.8,433.3 239.4,432.9 235.2,432.5 231.2,432.1 227.3,431.7 223.6,431.3 220.2,430.9 217.0,430.5" fill="#d8ff20" stroke="#d8ff20" stroke-width="1.6" stroke-linejoin="round" filter="url(#wfb)"/><polygon points="233.4,430.5 236.6,430.9 240.1,431.3 243.8,431.7 247.6,432.1 251.7,432.5 255.9,432.9 260.3,433.3 264.9,433.7 269.6,434.1 274.4,434.5 279.4,434.9 284.5,435.3 289.7,435.7 294.9,436.1 300.2,436.5 305.6,436.9 311.1,437.3 316.6,437.7 322.0,438.1 327.6,438.5 333.0,438.9 338.5,439.3 344.0,439.7 349.4,440.1 354.7,440.5 359.9,440.9 365.1,441.3 370.2,441.7 375.2,442.1 380.0,442.5 384.7,442.9 389.3,443.3 393.7,443.7 397.9,444.1 402.0,444.5 405.8,444.9 409.5,445.3 413.0,445.7 416.2,446.1 419.2,446.5 422.0,446.9 424.6,447.3 426.9,447.7 428.9,448.1 430.7,448.5 432.3,448.9 433.6,449.3 434.6,449.7 435.3,450.1 435.8,450.5 436.0,450.9 435.9,451.3 435.6,451.7 435.0,452.1 434.1,452.5 432.9,452.9 431.5,453.3 429.9,453.7 427.9,454.1 425.7,454.5 423.3,454.9 420.6,455.3 417.7,455.7 414.6,456.1 411.2,456.5 407.7,456.9 403.9,457.3 400.0,457.7 395.8,458.1 391.5,458.5 387.0,458.9 382.4,459.3 377.6,459.7 372.7,460.1 367.7,460.5 362.5,460.9 357.3,461.3 352.0,461.7 346.7,462.1 341.2,462.5 335.8,462.9 330.3,463.3 324.8,463.7 319.3,464.1 313.8,464.5 308.4,464.9 302.9,465.3 297.6,465.7 292.3,466.1 287.1,466.5 281.9,466.9 276.9,467.3 272.0,467.7 267.2,468.1 262.6,468.5 258.1,468.9 253.8,469.3 249.6,469.7 245.7,470.1 241.9,470.5 238.4,470.9 235.0,471.3 231.9,471.7 229.0,472.1 226.3,472.5 223.9,472.9 221.7,473.3 219.7,473.7 218.1,474.1 216.7,474.5 215.5,474.9 214.6,475.3 214.0,475.7 213.7,476.1 213.6,476.5 213.8,476.9 214.3,477.3 215.0,477.7 216.0,478.1 217.3,478.5 218.9,478.9 220.7,479.3 222.7,479.7 225.0,480.1 227.6,480.5 230.4,480.9 233.4,481.3 236.6,481.7 240.1,482.1 243.8,482.5 247.6,482.9 251.7,483.3 255.9,483.7 260.3,484.1 264.9,484.5 269.6,484.9 274.4,485.3 279.4,485.7 284.5,486.1 289.7,486.5 294.9,486.9 300.2,487.3 305.6,487.7 311.1,488.1 316.6,488.5 322.0,488.9 327.6,489.3 333.0,489.7 338.5,490.1 344.0,490.5 349.4,490.9 354.7,491.3 359.9,491.7 365.1,492.1 370.2,492.5 375.2,492.9 380.0,493.3 384.7,493.7 389.3,494.1 393.7,494.5 397.9,494.9 402.0,495.3 405.8,495.7 409.5,496.1 413.0,496.5 416.2,496.9 419.2,497.3 422.0,497.7 424.6,498.1 426.9,498.5 428.9,498.9 430.7,499.3 432.3,499.7 433.6,500.1 434.6,500.5 435.3,500.9 435.8,501.3 436.0,501.7 435.9,502.1 435.6,502.5 435.0,502.9 434.1,503.3 432.9,503.7 431.5,504.1 429.9,504.5 427.9,504.9 425.7,505.3 423.3,505.7 420.6,506.1 417.7,506.5 414.6,506.9 411.2,507.3 407.7,507.7 403.9,508.1 400.0,508.5 395.8,508.9 391.5,509.3 387.0,509.7 382.4,510.1 377.6,510.5 372.7,510.9 367.7,511.3 362.5,511.7 357.3,512.1 352.0,512.5 346.7,512.9 341.2,513.3 335.8,513.7 330.3,514.1 324.8,514.5 319.3,514.9 313.8,515.3 308.4,515.7 302.9,516.1 297.6,516.5 292.3,516.9 287.1,517.3 281.9,517.7 276.9,518.1 272.0,518.5 267.2,518.9 262.6,519.3 258.1,519.7 253.8,520.1 249.6,520.5 245.7,520.9 241.9,521.3 238.4,521.7 235.0,522.1 231.9,522.5 229.0,522.9 226.3,523.3 223.9,523.7 221.7,524.1 219.7,524.5 218.1,524.9 216.7,525.3 215.5,525.7 214.6,526.1 214.0,526.5 213.7,526.9 213.6,527.3 213.8,527.7 214.3,528.1 215.0,528.5 216.0,528.9 217.3,529.3 218.9,529.7 220.7,530.1 222.7,530.5 225.0,530.9 227.6,531.3 230.4,531.7 233.4,532.1 236.6,532.5 240.1,532.9 243.8,533.3 247.6,533.7 251.7,534.1 255.9,534.5 260.3,534.9 264.9,535.3 269.6,535.7 274.4,536.1 279.4,536.5 284.5,536.9 289.7,537.3 294.9,537.7 300.2,538.1 305.6,538.5 311.1,538.9 316.6,539.3 322.0,539.7 327.6,540.1 333.0,540.5 338.5,540.9 344.0,541.3 349.4,541.7 354.7,542.1 359.9,542.5 365.1,542.9 370.2,543.3 375.2,543.7 380.0,544.1 384.7,544.5 389.3,544.9 393.7,545.3 397.9,545.7 402.0,546.1 405.8,546.5 409.5,546.9 413.0,547.3 416.2,547.7 419.2,548.1 422.0,548.5 424.6,548.9 426.9,549.3 428.9,549.7 430.7,550.1 432.3,550.5 433.6,550.9 434.6,551.3 435.3,551.7 435.8,552.1 436.0,552.5 435.9,552.9 435.6,553.3 435.0,553.7 434.1,554.1 432.9,554.5 431.5,554.9 429.9,555.3 427.9,555.7 425.7,556.1 423.3,556.5 420.6,556.9 417.7,557.3 414.6,557.7 411.2,558.1 407.7,558.5 403.9,558.9 400.0,559.3 395.8,559.7 391.5,560.1 387.0,560.5 382.4,560.9 377.6,561.3 372.7,561.7 367.7,562.1 362.5,562.5 357.3,562.9 352.0,563.3 346.7,563.7 341.2,564.1 335.8,564.5 330.3,564.9 324.8,565.3 319.3,565.7 313.8,566.1 308.4,566.5 302.9,566.9 297.6,567.3 292.3,567.7 287.1,568.1 281.9,568.5 276.9,568.9 272.0,569.3 267.2,569.7 262.6,570.1 258.1,570.5 253.8,570.9 249.6,571.3 245.7,571.7 241.9,572.1 238.4,572.5 235.0,572.9 231.9,573.3 229.0,573.7 226.3,574.1 223.9,574.5 221.7,574.9 219.7,575.3 218.1,575.7 216.7,576.1 215.5,576.5 214.6,576.9 214.0,577.3 213.7,577.7 213.6,578.1 213.8,578.5 214.3,578.9 215.0,579.3 216.0,579.7 217.3,580.1 218.9,580.5 220.7,580.9 222.7,581.3 225.0,581.7 227.6,582.1 230.4,582.5 233.4,582.9 236.6,583.3 240.1,583.7 243.8,584.1 247.6,584.5 251.7,584.9 255.9,585.3 260.3,585.7 264.9,586.1 269.6,586.5 274.4,586.9 279.4,587.3 284.5,587.7 289.7,588.1 294.9,588.5 300.2,588.9 305.6,589.3 311.1,589.7 316.6,590.1 322.0,590.5 327.6,590.9 333.0,591.3 338.5,591.7 344.0,592.1 349.4,592.5 354.7,592.9 359.9,593.3 365.1,593.7 370.2,594.1 375.2,594.5 380.0,594.9 384.7,595.3 389.3,595.7 393.7,596.1 397.9,596.5 402.0,596.9 405.8,597.3 409.5,597.7 413.0,598.1 416.2,598.5 419.2,598.9 422.0,599.3 424.6,599.7 426.9,600.1 428.9,600.5 430.7,600.9 432.3,601.3 433.6,601.7 434.6,602.1 435.3,602.5 435.8,602.9 436.0,603.3 435.9,603.7 435.6,604.1 435.0,604.5 434.1,604.9 432.9,605.3 431.5,605.7 429.9,606.1 427.9,606.5 425.7,606.9 423.3,607.3 420.6,607.7 417.7,608.1 414.6,608.5 411.2,608.9 407.7,609.3 403.9,609.7 400.0,610.1 395.8,610.5 391.5,610.9 387.0,611.3 382.4,611.7 377.6,612.1 372.7,612.5 367.7,612.9 362.5,613.3 357.3,613.7 352.0,614.1 346.7,614.5 341.2,614.9 335.8,615.3 330.3,615.7 324.8,616.1 319.3,616.5 313.8,616.9 308.4,617.3 302.9,617.7 297.6,618.1 292.3,618.5 287.1,618.9 281.9,619.3 276.9,619.7 272.0,620.1 267.2,620.5 262.6,620.9 258.1,621.3 253.8,621.7 249.6,622.1 245.7,622.5 241.9,622.9 238.4,623.3 235.0,623.7 231.9,624.1 229.0,624.5 226.3,624.9 223.9,625.3 221.7,625.7 219.7,626.1 218.1,626.5 216.7,626.9 215.5,627.3 214.6,627.7 214.0,628.1 213.7,628.5 213.6,628.9 213.8,629.3 214.3,629.7 215.0,630.1 216.0,630.5 217.3,630.9 218.9,631.3 220.7,631.7 222.7,632.1 225.0,632.5 227.6,632.9 230.4,633.3 233.4,633.7 236.6,634.1 240.1,634.5 243.8,634.9 247.6,635.3 251.7,635.7 255.9,636.1 260.3,636.5 264.9,636.9 269.6,637.3 274.4,637.7 279.4,638.1 284.5,638.5 289.7,638.9 294.9,639.3 300.2,639.7 305.6,640.1 311.1,640.5 316.6,640.9 322.0,641.3 327.6,641.7 333.0,642.1 338.5,642.5 344.0,642.9 349.4,643.3 354.7,643.7 359.9,644.1 365.1,644.5 370.2,644.9 375.2,645.3 380.0,645.7 384.7,646.1 389.3,646.5 393.7,646.9 397.9,647.3 402.0,647.7 405.8,648.1 409.5,648.5 413.0,648.9 416.2,649.3 419.2,649.7 422.0,650.1 424.6,650.5 426.9,650.9 428.9,651.3 430.7,651.7 432.3,652.1 433.6,652.5 434.6,652.9 435.3,653.3 418.9,653.3 418.2,652.9 417.2,652.5 415.9,652.1 414.3,651.7 412.5,651.3 410.5,650.9 408.2,650.5 405.6,650.1 402.8,649.7 399.8,649.3 396.6,648.9 393.1,648.5 389.4,648.1 385.6,647.7 381.5,647.3 377.3,646.9 372.9,646.5 368.3,646.1 363.6,645.7 358.8,645.3 353.8,644.9 348.7,644.5 343.5,644.1 338.3,643.7 333.0,643.3 327.6,642.9 322.1,642.5 316.6,642.1 311.2,641.7 305.6,641.3 300.2,640.9 294.7,640.5 289.2,640.1 283.8,639.7 278.5,639.3 273.3,638.9 268.1,638.5 263.0,638.1 258.0,637.7 253.2,637.3 248.5,636.9 243.9,636.5 239.5,636.1 235.3,635.7 231.2,635.3 227.4,634.9 223.7,634.5 220.2,634.1 217.0,633.7 214.0,633.3 211.2,632.9 208.6,632.5 206.3,632.1 204.3,631.7 202.5,631.3 200.9,630.9 199.6,630.5 198.6,630.1 197.9,629.7 197.4,629.3 197.2,628.9 197.3,628.5 197.6,628.1 198.2,627.7 199.1,627.3 200.3,626.9 201.7,626.5 203.3,626.1 205.3,625.7 207.5,625.3 209.9,624.9 212.6,624.5 215.5,624.1 218.6,623.7 222.0,623.3 225.5,622.9 229.3,622.5 233.2,622.1 237.4,621.7 241.7,621.3 246.2,620.9 250.8,620.5 255.6,620.1 260.5,619.7 265.5,619.3 270.7,618.9 275.9,618.5 281.2,618.1 286.5,617.7 292.0,617.3 297.4,616.9 302.9,616.5 308.4,616.1 313.9,615.7 319.4,615.3 324.8,614.9 330.3,614.5 335.6,614.1 340.9,613.7 346.1,613.3 351.3,612.9 356.3,612.5 361.2,612.1 366.0,611.7 370.6,611.3 375.1,610.9 379.4,610.5 383.6,610.1 387.5,609.7 391.3,609.3 394.8,608.9 398.2,608.5 401.3,608.1 404.2,607.7 406.9,607.3 409.3,606.9 411.5,606.5 413.5,606.1 415.1,605.7 416.5,605.3 417.7,604.9 418.6,604.5 419.2,604.1 419.5,603.7 419.6,603.3 419.4,602.9 418.9,602.5 418.2,602.1 417.2,601.7 415.9,601.3 414.3,600.9 412.5,600.5 410.5,600.1 408.2,599.7 405.6,599.3 402.8,598.9 399.8,598.5 396.6,598.1 393.1,597.7 389.4,597.3 385.6,596.9 381.5,596.5 377.3,596.1 372.9,595.7 368.3,595.3 363.6,594.9 358.8,594.5 353.8,594.1 348.7,593.7 343.5,593.3 338.3,592.9 333.0,592.5 327.6,592.1 322.1,591.7 316.6,591.3 311.2,590.9 305.6,590.5 300.2,590.1 294.7,589.7 289.2,589.3 283.8,588.9 278.5,588.5 273.3,588.1 268.1,587.7 263.0,587.3 258.0,586.9 253.2,586.5 248.5,586.1 243.9,585.7 239.5,585.3 235.3,584.9 231.2,584.5 227.4,584.1 223.7,583.7 220.2,583.3 217.0,582.9 214.0,582.5 211.2,582.1 208.6,581.7 206.3,581.3 204.3,580.9 202.5,580.5 200.9,580.1 199.6,579.7 198.6,579.3 197.9,578.9 197.4,578.5 197.2,578.1 197.3,577.7 197.6,577.3 198.2,576.9 199.1,576.5 200.3,576.1 201.7,575.7 203.3,575.3 205.3,574.9 207.5,574.5 209.9,574.1 212.6,573.7 215.5,573.3 218.6,572.9 222.0,572.5 225.5,572.1 229.3,571.7 233.2,571.3 237.4,570.9 241.7,570.5 246.2,570.1 250.8,569.7 255.6,569.3 260.5,568.9 265.5,568.5 270.7,568.1 275.9,567.7 281.2,567.3 286.5,566.9 292.0,566.5 297.4,566.1 302.9,565.7 308.4,565.3 313.9,564.9 319.4,564.5 324.8,564.1 330.3,563.7 335.6,563.3 340.9,562.9 346.1,562.5 351.3,562.1 356.3,561.7 361.2,561.3 366.0,560.9 370.6,560.5 375.1,560.1 379.4,559.7 383.6,559.3 387.5,558.9 391.3,558.5 394.8,558.1 398.2,557.7 401.3,557.3 404.2,556.9 406.9,556.5 409.3,556.1 411.5,555.7 413.5,555.3 415.1,554.9 416.5,554.5 417.7,554.1 418.6,553.7 419.2,553.3 419.5,552.9 419.6,552.5 419.4,552.1 418.9,551.7 418.2,551.3 417.2,550.9 415.9,550.5 414.3,550.1 412.5,549.7 410.5,549.3 408.2,548.9 405.6,548.5 402.8,548.1 399.8,547.7 396.6,547.3 393.1,546.9 389.4,546.5 385.6,546.1 381.5,545.7 377.3,545.3 372.9,544.9 368.3,544.5 363.6,544.1 358.8,543.7 353.8,543.3 348.7,542.9 343.5,542.5 338.3,542.1 333.0,541.7 327.6,541.3 322.1,540.9 316.6,540.5 311.2,540.1 305.6,539.7 300.2,539.3 294.7,538.9 289.2,538.5 283.8,538.1 278.5,537.7 273.3,537.3 268.1,536.9 263.0,536.5 258.0,536.1 253.2,535.7 248.5,535.3 243.9,534.9 239.5,534.5 235.3,534.1 231.2,533.7 227.4,533.3 223.7,532.9 220.2,532.5 217.0,532.1 214.0,531.7 211.2,531.3 208.6,530.9 206.3,530.5 204.3,530.1 202.5,529.7 200.9,529.3 199.6,528.9 198.6,528.5 197.9,528.1 197.4,527.7 197.2,527.3 197.3,526.9 197.6,526.5 198.2,526.1 199.1,525.7 200.3,525.3 201.7,524.9 203.3,524.5 205.3,524.1 207.5,523.7 209.9,523.3 212.6,522.9 215.5,522.5 218.6,522.1 222.0,521.7 225.5,521.3 229.3,520.9 233.2,520.5 237.4,520.1 241.7,519.7 246.2,519.3 250.8,518.9 255.6,518.5 260.5,518.1 265.5,517.7 270.7,517.3 275.9,516.9 281.2,516.5 286.5,516.1 292.0,515.7 297.4,515.3 302.9,514.9 308.4,514.5 313.9,514.1 319.4,513.7 324.8,513.3 330.3,512.9 335.6,512.5 340.9,512.1 346.1,511.7 351.3,511.3 356.3,510.9 361.2,510.5 366.0,510.1 370.6,509.7 375.1,509.3 379.4,508.9 383.6,508.5 387.5,508.1 391.3,507.7 394.8,507.3 398.2,506.9 401.3,506.5 404.2,506.1 406.9,505.7 409.3,505.3 411.5,504.9 413.5,504.5 415.1,504.1 416.5,503.7 417.7,503.3 418.6,502.9 419.2,502.5 419.5,502.1 419.6,501.7 419.4,501.3 418.9,500.9 418.2,500.5 417.2,500.1 415.9,499.7 414.3,499.3 412.5,498.9 410.5,498.5 408.2,498.1 405.6,497.7 402.8,497.3 399.8,496.9 396.6,496.5 393.1,496.1 389.4,495.7 385.6,495.3 381.5,494.9 377.3,494.5 372.9,494.1 368.3,493.7 363.6,493.3 358.8,492.9 353.8,492.5 348.7,492.1 343.5,491.7 338.3,491.3 333.0,490.9 327.6,490.5 322.1,490.1 316.6,489.7 311.2,489.3 305.6,488.9 300.2,488.5 294.7,488.1 289.2,487.7 283.8,487.3 278.5,486.9 273.3,486.5 268.1,486.1 263.0,485.7 258.0,485.3 253.2,484.9 248.5,484.5 243.9,484.1 239.5,483.7 235.3,483.3 231.2,482.9 227.4,482.5 223.7,482.1 220.2,481.7 217.0,481.3 214.0,480.9 211.2,480.5 208.6,480.1 206.3,479.7 204.3,479.3 202.5,478.9 200.9,478.5 199.6,478.1 198.6,477.7 197.9,477.3 197.4,476.9 197.2,476.5 197.3,476.1 197.6,475.7 198.2,475.3 199.1,474.9 200.3,474.5 201.7,474.1 203.3,473.7 205.3,473.3 207.5,472.9 209.9,472.5 212.6,472.1 215.5,471.7 218.6,471.3 222.0,470.9 225.5,470.5 229.3,470.1 233.2,469.7 237.4,469.3 241.7,468.9 246.2,468.5 250.8,468.1 255.6,467.7 260.5,467.3 265.5,466.9 270.7,466.5 275.9,466.1 281.2,465.7 286.5,465.3 292.0,464.9 297.4,464.5 302.9,464.1 308.4,463.7 313.9,463.3 319.4,462.9 324.8,462.5 330.3,462.1 335.6,461.7 340.9,461.3 346.1,460.9 351.3,460.5 356.3,460.1 361.2,459.7 366.0,459.3 370.6,458.9 375.1,458.5 379.4,458.1 383.6,457.7 387.5,457.3 391.3,456.9 394.8,456.5 398.2,456.1 401.3,455.7 404.2,455.3 406.9,454.9 409.3,454.5 411.5,454.1 413.5,453.7 415.1,453.3 416.5,452.9 417.7,452.5 418.6,452.1 419.2,451.7 419.5,451.3 419.6,450.9 419.4,450.5 418.9,450.1 418.2,449.7 417.2,449.3 415.9,448.9 414.3,448.5 412.5,448.1 410.5,447.7 408.2,447.3 405.6,446.9 402.8,446.5 399.8,446.1 396.6,445.7 393.1,445.3 389.4,444.9 385.6,444.5 381.5,444.1 377.3,443.7 372.9,443.3 368.3,442.9 363.6,442.5 358.8,442.1 353.8,441.7 348.7,441.3 343.5,440.9 338.3,440.5 333.0,440.1 327.6,439.7 322.1,439.3 316.6,438.9 311.2,438.5 305.6,438.1 300.2,437.7 294.7,437.3 289.2,436.9 283.8,436.5 278.5,436.1 273.3,435.7 268.1,435.3 263.0,434.9 258.0,434.5 253.2,434.1 248.5,433.7 243.9,433.3 239.5,432.9 235.3,432.5 231.2,432.1 227.4,431.7 223.7,431.3 220.2,430.9 217.0,430.5" fill="#ffa000" stroke="#ffa000" stroke-width="0.9" stroke-linejoin="round" filter="url(#wfb2)"/><polygon points="232.7,430.5 235.9,430.9 239.4,431.3 243.1,431.7 247.0,432.1 251.0,432.5 255.3,432.9 259.7,433.3 264.3,433.7 269.0,434.1 273.9,434.5 278.8,434.9 283.9,435.3 289.1,435.7 294.4,436.1 299.8,436.5 305.2,436.9 310.6,437.3 316.1,437.7 321.6,438.1 327.2,438.5 332.7,438.9 338.2,439.3 343.6,439.7 349.0,440.1 354.4,440.5 359.7,440.9 364.9,441.3 370.0,441.7 374.9,442.1 379.8,442.5 384.5,442.9 389.1,443.3 393.5,443.7 397.8,444.1 401.8,444.5 405.7,444.9 409.4,445.3 412.9,445.7 416.1,446.1 419.2,446.5 422.0,446.9 424.5,447.3 426.8,447.7 428.9,448.1 430.7,448.5 432.3,448.9 433.5,449.3 434.6,449.7 435.3,450.1 435.8,450.5 436.0,450.9 435.9,451.3 435.6,451.7 435.0,452.1 434.1,452.5 432.9,452.9 431.5,453.3 429.8,453.7 427.9,454.1 425.7,454.5 423.3,454.9 420.6,455.3 417.7,455.7 414.5,456.1 411.2,456.5 407.6,456.9 403.8,457.3 399.8,457.7 395.7,458.1 391.3,458.5 386.8,458.9 382.2,459.3 377.4,459.7 372.5,460.1 367.4,460.5 362.3,460.9 357.0,461.3 351.7,461.7 346.3,462.1 340.9,462.5 335.4,462.9 329.9,463.3 324.4,463.7 318.9,464.1 313.4,464.5 307.9,464.9 302.5,465.3 297.1,465.7 291.8,466.1 286.5,466.5 281.4,466.9 276.3,467.3 271.4,467.7 266.6,468.1 262.0,468.5 257.5,468.9 253.1,469.3 249.0,469.7 245.0,470.1 241.2,470.5 237.6,470.9 234.3,471.3 231.1,471.7 228.2,472.1 225.5,472.5 223.1,472.9 220.9,473.3 219.0,473.7 217.3,474.1 215.9,474.5 214.7,474.9 213.8,475.3 213.2,475.7 212.9,476.1 212.8,476.5 213.0,476.9 213.5,477.3 214.2,477.7 215.3,478.1 216.5,478.5 218.1,478.9 219.9,479.3 222.0,479.7 224.3,480.1 226.8,480.5 229.6,480.9 232.7,481.3 235.9,481.7 239.4,482.1 243.1,482.5 247.0,482.9 251.0,483.3 255.3,483.7 259.7,484.1 264.3,484.5 269.0,484.9 273.9,485.3 278.8,485.7 283.9,486.1 289.1,486.5 294.4,486.9 299.8,487.3 305.2,487.7 310.6,488.1 316.1,488.5 321.6,488.9 327.2,489.3 332.7,489.7 338.2,490.1 343.6,490.5 349.0,490.9 354.4,491.3 359.7,491.7 364.9,492.1 370.0,492.5 374.9,492.9 379.8,493.3 384.5,493.7 389.1,494.1 393.5,494.5 397.8,494.9 401.8,495.3 405.7,495.7 409.4,496.1 412.9,496.5 416.1,496.9 419.2,497.3 422.0,497.7 424.5,498.1 426.8,498.5 428.9,498.9 430.7,499.3 432.3,499.7 433.5,500.1 434.6,500.5 435.3,500.9 435.8,501.3 436.0,501.7 435.9,502.1 435.6,502.5 435.0,502.9 434.1,503.3 432.9,503.7 431.5,504.1 429.8,504.5 427.9,504.9 425.7,505.3 423.3,505.7 420.6,506.1 417.7,506.5 414.5,506.9 411.2,507.3 407.6,507.7 403.8,508.1 399.8,508.5 395.7,508.9 391.3,509.3 386.8,509.7 382.2,510.1 377.4,510.5 372.5,510.9 367.4,511.3 362.3,511.7 357.0,512.1 351.7,512.5 346.3,512.9 340.9,513.3 335.4,513.7 329.9,514.1 324.4,514.5 318.9,514.9 313.4,515.3 307.9,515.7 302.5,516.1 297.1,516.5 291.8,516.9 286.5,517.3 281.4,517.7 276.3,518.1 271.4,518.5 266.6,518.9 262.0,519.3 257.5,519.7 253.1,520.1 249.0,520.5 245.0,520.9 241.2,521.3 237.6,521.7 234.3,522.1 231.1,522.5 228.2,522.9 225.5,523.3 223.1,523.7 220.9,524.1 219.0,524.5 217.3,524.9 215.9,525.3 214.7,525.7 213.8,526.1 213.2,526.5 212.9,526.9 212.8,527.3 213.0,527.7 213.5,528.1 214.2,528.5 215.3,528.9 216.5,529.3 218.1,529.7 219.9,530.1 222.0,530.5 224.3,530.9 226.8,531.3 229.6,531.7 232.7,532.1 235.9,532.5 239.4,532.9 243.1,533.3 247.0,533.7 251.0,534.1 255.3,534.5 259.7,534.9 264.3,535.3 269.0,535.7 273.9,536.1 278.8,536.5 283.9,536.9 289.1,537.3 294.4,537.7 299.8,538.1 305.2,538.5 310.6,538.9 316.1,539.3 321.6,539.7 327.2,540.1 332.7,540.5 338.2,540.9 343.6,541.3 349.0,541.7 354.4,542.1 359.7,542.5 364.9,542.9 370.0,543.3 374.9,543.7 379.8,544.1 384.5,544.5 389.1,544.9 393.5,545.3 397.8,545.7 401.8,546.1 405.7,546.5 409.4,546.9 412.9,547.3 416.1,547.7 419.2,548.1 422.0,548.5 424.5,548.9 426.8,549.3 428.9,549.7 430.7,550.1 432.3,550.5 433.5,550.9 434.6,551.3 435.3,551.7 435.8,552.1 436.0,552.5 435.9,552.9 435.6,553.3 435.0,553.7 434.1,554.1 432.9,554.5 431.5,554.9 429.8,555.3 427.9,555.7 425.7,556.1 423.3,556.5 420.6,556.9 417.7,557.3 414.5,557.7 411.2,558.1 407.6,558.5 403.8,558.9 399.8,559.3 395.7,559.7 391.3,560.1 386.8,560.5 382.2,560.9 377.4,561.3 372.5,561.7 367.4,562.1 362.3,562.5 357.0,562.9 351.7,563.3 346.3,563.7 340.9,564.1 335.4,564.5 329.9,564.9 324.4,565.3 318.9,565.7 313.4,566.1 307.9,566.5 302.5,566.9 297.1,567.3 291.8,567.7 286.5,568.1 281.4,568.5 276.3,568.9 271.4,569.3 266.6,569.7 262.0,570.1 257.5,570.5 253.1,570.9 249.0,571.3 245.0,571.7 241.2,572.1 237.6,572.5 234.3,572.9 231.1,573.3 228.2,573.7 225.5,574.1 223.1,574.5 220.9,574.9 219.0,575.3 217.3,575.7 215.9,576.1 214.7,576.5 213.8,576.9 213.2,577.3 212.9,577.7 212.8,578.1 213.0,578.5 213.5,578.9 214.2,579.3 215.3,579.7 216.5,580.1 218.1,580.5 219.9,580.9 222.0,581.3 224.3,581.7 226.8,582.1 229.6,582.5 232.7,582.9 235.9,583.3 239.4,583.7 243.1,584.1 247.0,584.5 251.0,584.9 255.3,585.3 259.7,585.7 264.3,586.1 269.0,586.5 273.9,586.9 278.8,587.3 283.9,587.7 289.1,588.1 294.4,588.5 299.8,588.9 305.2,589.3 310.6,589.7 316.1,590.1 321.6,590.5 327.2,590.9 332.7,591.3 338.2,591.7 343.6,592.1 349.0,592.5 354.4,592.9 359.7,593.3 364.9,593.7 370.0,594.1 374.9,594.5 379.8,594.9 384.5,595.3 389.1,595.7 393.5,596.1 397.8,596.5 401.8,596.9 405.7,597.3 409.4,597.7 412.9,598.1 416.1,598.5 419.2,598.9 422.0,599.3 424.5,599.7 426.8,600.1 428.9,600.5 430.7,600.9 432.3,601.3 433.5,601.7 434.6,602.1 435.3,602.5 435.8,602.9 436.0,603.3 435.9,603.7 435.6,604.1 435.0,604.5 434.1,604.9 432.9,605.3 431.5,605.7 429.8,606.1 427.9,606.5 425.7,606.9 423.3,607.3 420.6,607.7 417.7,608.1 414.5,608.5 411.2,608.9 407.6,609.3 403.8,609.7 399.8,610.1 395.7,610.5 391.3,610.9 386.8,611.3 382.2,611.7 377.4,612.1 372.5,612.5 367.4,612.9 362.3,613.3 357.0,613.7 351.7,614.1 346.3,614.5 340.9,614.9 335.4,615.3 329.9,615.7 324.4,616.1 318.9,616.5 313.4,616.9 307.9,617.3 302.5,617.7 297.1,618.1 291.8,618.5 286.5,618.9 281.4,619.3 276.3,619.7 271.4,620.1 266.6,620.5 262.0,620.9 257.5,621.3 253.1,621.7 249.0,622.1 245.0,622.5 241.2,622.9 237.6,623.3 234.3,623.7 231.1,624.1 228.2,624.5 225.5,624.9 223.1,625.3 220.9,625.7 219.0,626.1 217.3,626.5 215.9,626.9 214.7,627.3 213.8,627.7 213.2,628.1 212.9,628.5 212.8,628.9 213.0,629.3 213.5,629.7 214.2,630.1 215.3,630.5 216.5,630.9 218.1,631.3 219.9,631.7 222.0,632.1 224.3,632.5 226.8,632.9 229.6,633.3 232.7,633.7 235.9,634.1 239.4,634.5 243.1,634.9 247.0,635.3 251.0,635.7 255.3,636.1 259.7,636.5 264.3,636.9 269.0,637.3 273.9,637.7 278.8,638.1 283.9,638.5 289.1,638.9 294.4,639.3 299.8,639.7 305.2,640.1 310.6,640.5 316.1,640.9 321.6,641.3 327.2,641.7 332.7,642.1 338.2,642.5 343.6,642.9 349.0,643.3 354.4,643.7 359.7,644.1 364.9,644.5 370.0,644.9 374.9,645.3 379.8,645.7 384.5,646.1 389.1,646.5 393.5,646.9 397.8,647.3 401.8,647.7 405.7,648.1 409.4,648.5 412.9,648.9 416.1,649.3 419.2,649.7 422.0,650.1 424.5,650.5 426.8,650.9 428.9,651.3 430.7,651.7 432.3,652.1 433.5,652.5 434.6,652.9 435.3,653.3 419.7,653.3 419.0,652.9 417.9,652.5 416.7,652.1 415.1,651.7 413.3,651.3 411.2,650.9 408.9,650.5 406.4,650.1 403.6,649.7 400.5,649.3 397.3,648.9 393.8,648.5 390.1,648.1 386.2,647.7 382.2,647.3 377.9,646.9 373.5,646.5 368.9,646.1 364.2,645.7 359.3,645.3 354.4,644.9 349.3,644.5 344.1,644.1 338.8,643.7 333.4,643.3 328.0,642.9 322.6,642.5 317.1,642.1 311.6,641.7 306.0,641.3 300.5,640.9 295.0,640.5 289.6,640.1 284.2,639.7 278.8,639.3 273.5,638.9 268.3,638.5 263.2,638.1 258.3,637.7 253.4,637.3 248.7,636.9 244.1,636.5 239.7,636.1 235.4,635.7 231.4,635.3 227.5,634.9 223.8,634.5 220.3,634.1 217.1,633.7 214.0,633.3 211.2,632.9 208.7,632.5 206.4,632.1 204.3,631.7 202.5,631.3 200.9,630.9 199.7,630.5 198.6,630.1 197.9,629.7 197.4,629.3 197.2,628.9 197.3,628.5 197.6,628.1 198.2,627.7 199.1,627.3 200.3,626.9 201.7,626.5 203.4,626.1 205.3,625.7 207.5,625.3 209.9,624.9 212.6,624.5 215.5,624.1 218.7,623.7 222.0,623.3 225.6,622.9 229.4,622.5 233.4,622.1 237.5,621.7 241.9,621.3 246.4,620.9 251.0,620.5 255.8,620.1 260.7,619.7 265.8,619.3 270.9,618.9 276.2,618.5 281.5,618.1 286.9,617.7 292.3,617.3 297.8,616.9 303.3,616.5 308.8,616.1 314.3,615.7 319.8,615.3 325.3,614.9 330.7,614.5 336.1,614.1 341.4,613.7 346.7,613.3 351.8,612.9 356.9,612.5 361.8,612.1 366.6,611.7 371.2,611.3 375.7,610.9 380.1,610.5 384.2,610.1 388.2,609.7 392.0,609.3 395.6,608.9 398.9,608.5 402.1,608.1 405.0,607.7 407.7,607.3 410.1,606.9 412.3,606.5 414.2,606.1 415.9,605.7 417.3,605.3 418.5,604.9 419.4,604.5 420.0,604.1 420.3,603.7 420.4,603.3 420.2,602.9 419.7,602.5 419.0,602.1 417.9,601.7 416.7,601.3 415.1,600.9 413.3,600.5 411.2,600.1 408.9,599.7 406.4,599.3 403.6,598.9 400.5,598.5 397.3,598.1 393.8,597.7 390.1,597.3 386.2,596.9 382.2,596.5 377.9,596.1 373.5,595.7 368.9,595.3 364.2,594.9 359.3,594.5 354.4,594.1 349.3,593.7 344.1,593.3 338.8,592.9 333.4,592.5 328.0,592.1 322.6,591.7 317.1,591.3 311.6,590.9 306.0,590.5 300.5,590.1 295.0,589.7 289.6,589.3 284.2,588.9 278.8,588.5 273.5,588.1 268.3,587.7 263.2,587.3 258.3,586.9 253.4,586.5 248.7,586.1 244.1,585.7 239.7,585.3 235.4,584.9 231.4,584.5 227.5,584.1 223.8,583.7 220.3,583.3 217.1,582.9 214.0,582.5 211.2,582.1 208.7,581.7 206.4,581.3 204.3,580.9 202.5,580.5 200.9,580.1 199.7,579.7 198.6,579.3 197.9,578.9 197.4,578.5 197.2,578.1 197.3,577.7 197.6,577.3 198.2,576.9 199.1,576.5 200.3,576.1 201.7,575.7 203.4,575.3 205.3,574.9 207.5,574.5 209.9,574.1 212.6,573.7 215.5,573.3 218.7,572.9 222.0,572.5 225.6,572.1 229.4,571.7 233.4,571.3 237.5,570.9 241.9,570.5 246.4,570.1 251.0,569.7 255.8,569.3 260.7,568.9 265.8,568.5 270.9,568.1 276.2,567.7 281.5,567.3 286.9,566.9 292.3,566.5 297.8,566.1 303.3,565.7 308.8,565.3 314.3,564.9 319.8,564.5 325.3,564.1 330.7,563.7 336.1,563.3 341.4,562.9 346.7,562.5 351.8,562.1 356.9,561.7 361.8,561.3 366.6,560.9 371.2,560.5 375.7,560.1 380.1,559.7 384.2,559.3 388.2,558.9 392.0,558.5 395.6,558.1 398.9,557.7 402.1,557.3 405.0,556.9 407.7,556.5 410.1,556.1 412.3,555.7 414.2,555.3 415.9,554.9 417.3,554.5 418.5,554.1 419.4,553.7 420.0,553.3 420.3,552.9 420.4,552.5 420.2,552.1 419.7,551.7 419.0,551.3 417.9,550.9 416.7,550.5 415.1,550.1 413.3,549.7 411.2,549.3 408.9,548.9 406.4,548.5 403.6,548.1 400.5,547.7 397.3,547.3 393.8,546.9 390.1,546.5 386.2,546.1 382.2,545.7 377.9,545.3 373.5,544.9 368.9,544.5 364.2,544.1 359.3,543.7 354.4,543.3 349.3,542.9 344.1,542.5 338.8,542.1 333.4,541.7 328.0,541.3 322.6,540.9 317.1,540.5 311.6,540.1 306.0,539.7 300.5,539.3 295.0,538.9 289.6,538.5 284.2,538.1 278.8,537.7 273.5,537.3 268.3,536.9 263.2,536.5 258.3,536.1 253.4,535.7 248.7,535.3 244.1,534.9 239.7,534.5 235.4,534.1 231.4,533.7 227.5,533.3 223.8,532.9 220.3,532.5 217.1,532.1 214.0,531.7 211.2,531.3 208.7,530.9 206.4,530.5 204.3,530.1 202.5,529.7 200.9,529.3 199.7,528.9 198.6,528.5 197.9,528.1 197.4,527.7 197.2,527.3 197.3,526.9 197.6,526.5 198.2,526.1 199.1,525.7 200.3,525.3 201.7,524.9 203.4,524.5 205.3,524.1 207.5,523.7 209.9,523.3 212.6,522.9 215.5,522.5 218.7,522.1 222.0,521.7 225.6,521.3 229.4,520.9 233.4,520.5 237.5,520.1 241.9,519.7 246.4,519.3 251.0,518.9 255.8,518.5 260.7,518.1 265.8,517.7 270.9,517.3 276.2,516.9 281.5,516.5 286.9,516.1 292.3,515.7 297.8,515.3 303.3,514.9 308.8,514.5 314.3,514.1 319.8,513.7 325.3,513.3 330.7,512.9 336.1,512.5 341.4,512.1 346.7,511.7 351.8,511.3 356.9,510.9 361.8,510.5 366.6,510.1 371.2,509.7 375.7,509.3 380.1,508.9 384.2,508.5 388.2,508.1 392.0,507.7 395.6,507.3 398.9,506.9 402.1,506.5 405.0,506.1 407.7,505.7 410.1,505.3 412.3,504.9 414.2,504.5 415.9,504.1 417.3,503.7 418.5,503.3 419.4,502.9 420.0,502.5 420.3,502.1 420.4,501.7 420.2,501.3 419.7,500.9 419.0,500.5 417.9,500.1 416.7,499.7 415.1,499.3 413.3,498.9 411.2,498.5 408.9,498.1 406.4,497.7 403.6,497.3 400.5,496.9 397.3,496.5 393.8,496.1 390.1,495.7 386.2,495.3 382.2,494.9 377.9,494.5 373.5,494.1 368.9,493.7 364.2,493.3 359.3,492.9 354.4,492.5 349.3,492.1 344.1,491.7 338.8,491.3 333.4,490.9 328.0,490.5 322.6,490.1 317.1,489.7 311.6,489.3 306.0,488.9 300.5,488.5 295.0,488.1 289.6,487.7 284.2,487.3 278.8,486.9 273.5,486.5 268.3,486.1 263.2,485.7 258.3,485.3 253.4,484.9 248.7,484.5 244.1,484.1 239.7,483.7 235.4,483.3 231.4,482.9 227.5,482.5 223.8,482.1 220.3,481.7 217.1,481.3 214.0,480.9 211.2,480.5 208.7,480.1 206.4,479.7 204.3,479.3 202.5,478.9 200.9,478.5 199.7,478.1 198.6,477.7 197.9,477.3 197.4,476.9 197.2,476.5 197.3,476.1 197.6,475.7 198.2,475.3 199.1,474.9 200.3,474.5 201.7,474.1 203.4,473.7 205.3,473.3 207.5,472.9 209.9,472.5 212.6,472.1 215.5,471.7 218.7,471.3 222.0,470.9 225.6,470.5 229.4,470.1 233.4,469.7 237.5,469.3 241.9,468.9 246.4,468.5 251.0,468.1 255.8,467.7 260.7,467.3 265.8,466.9 270.9,466.5 276.2,466.1 281.5,465.7 286.9,465.3 292.3,464.9 297.8,464.5 303.3,464.1 308.8,463.7 314.3,463.3 319.8,462.9 325.3,462.5 330.7,462.1 336.1,461.7 341.4,461.3 346.7,460.9 351.8,460.5 356.9,460.1 361.8,459.7 366.6,459.3 371.2,458.9 375.7,458.5 380.1,458.1 384.2,457.7 388.2,457.3 392.0,456.9 395.6,456.5 398.9,456.1 402.1,455.7 405.0,455.3 407.7,454.9 410.1,454.5 412.3,454.1 414.2,453.7 415.9,453.3 417.3,452.9 418.5,452.5 419.4,452.1 420.0,451.7 420.3,451.3 420.4,450.9 420.2,450.5 419.7,450.1 419.0,449.7 417.9,449.3 416.7,448.9 415.1,448.5 413.3,448.1 411.2,447.7 408.9,447.3 406.4,446.9 403.6,446.5 400.5,446.1 397.3,445.7 393.8,445.3 390.1,444.9 386.2,444.5 382.2,444.1 377.9,443.7 373.5,443.3 368.9,442.9 364.2,442.5 359.3,442.1 354.4,441.7 349.3,441.3 344.1,440.9 338.8,440.5 333.4,440.1 328.0,439.7 322.6,439.3 317.1,438.9 311.6,438.5 306.0,438.1 300.5,437.7 295.0,437.3 289.6,436.9 284.2,436.5 278.8,436.1 273.5,435.7 268.3,435.3 263.2,434.9 258.3,434.5 253.4,434.1 248.7,433.7 244.1,433.3 239.7,432.9 235.4,432.5 231.4,432.1 227.5,431.7 223.8,431.3 220.3,430.9 217.1,430.5" fill="#ff1800" stroke="#ff1800" stroke-width="0.3" stroke-linejoin="round"/></g><rect x="612.5" y="432.6" width="583.0" height="13.4" fill="url(#cbar)"/><path d="M670.5 446.5V640.6" stroke="#3a3a3a" stroke-width="1" stroke-dasharray="2.5 1.5" fill="none"/><path d="M729.5 446.5V640.6" stroke="#3a3a3a" stroke-width="1" stroke-dasharray="2.5 1.5" fill="none"/><path d="M787.5 446.5V640.6" stroke="#3a3a3a" stroke-width="1" stroke-dasharray="2.5 1.5" fill="none"/><path d="M845.5 446.5V640.6" stroke="#3a3a3a" stroke-width="1" stroke-dasharray="2.5 1.5" fill="none"/><path d="M904.5 446.5V640.6" stroke="#3a3a3a" stroke-width="1" stroke-dasharray="2.5 1.5" fill="none"/><path d="M962.5 446.5V640.6" stroke="#3a3a3a" stroke-width="1" stroke-dasharray="2.5 1.5" fill="none"/><path d="M1020.5 446.5V640.6" stroke="#3a3a3a" stroke-width="1" stroke-dasharray="2.5 1.5" fill="none"/><path d="M1078.5 446.5V640.6" stroke="#3a3a3a" stroke-width="1" stroke-dasharray="2.5 1.5" fill="none"/><path d="M1137.5 446.5V640.6" stroke="#3a3a3a" stroke-width="1" stroke-dasharray="2.5 1.5" fill="none"/><path d="M612.5 465.5H1195.5" stroke="#3a3a3a" stroke-width="1" stroke-dasharray="2.5 1.5" fill="none"/><path d="M612.5 485.5H1195.5" stroke="#3a3a3a" stroke-width="1" stroke-dasharray="2.5 1.5" fill="none"/><path d="M612.5 504.5H1195.5" stroke="#3a3a3a" stroke-width="1" stroke-dasharray="2.5 1.5" fill="none"/><path d="M612.5 524.5H1195.5" stroke="#3a3a3a" stroke-width="1" stroke-dasharray="2.5 1.5" fill="none"/><path d="M612.5 543.5H1195.5" stroke="#3a3a3a" stroke-width="1" stroke-dasharray="2.5 1.5" fill="none"/><path d="M612.5 562.5H1195.5" stroke="#3a3a3a" stroke-width="1" stroke-dasharray="2.5 1.5" fill="none"/><path d="M612.5 582.5H1195.5" stroke="#3a3a3a" stroke-width="1" stroke-dasharray="2.5 1.5" fill="none"/><path d="M612.5 601.5H1195.5" stroke="#3a3a3a" stroke-width="1" stroke-dasharray="2.5 1.5" fill="none"/><path d="M612.5 621.5H1195.5" stroke="#3a3a3a" stroke-width="1" stroke-dasharray="2.5 1.5" fill="none"/><g clip-path="url(#dpc)"><path d="M776.6 583.0 C777.4 545 779 520 780.6 505 C782.3 490 784.5 477 787.4 472.7 L1019.9 472.7 C1022.4 477 1024.7 490 1026.5 505 C1028.1 520 1029.8 545 1030.7 583.0 Z" fill="#0034ec"/><path d="M797.6 583.0 C797.2 555 796 535 794.4 520 C792.8 503 790.5 485 787.4 472.7 L1019.9 472.7 C1016.8 485 1014.5 503 1012.9 520 C1011.3 535 1010.6 555 1010.4 583.0 Z" fill="url(#blk)"/><path d="M797.6 583.0 C797.2 555 796 535 794.4 520 C792.8 503 790.5 485 787.4 472.7 L1019.9 472.7 C1016.8 485 1014.5 503 1012.9 520 C1011.3 535 1010.6 555 1010.4 583.0 Z" fill="url(#edgL)"/><path d="M797.6 583.0 C797.2 555 796 535 794.4 520 C792.8 503 790.5 485 787.4 472.7 L1019.9 472.7 C1016.8 485 1014.5 503 1012.9 520 C1011.3 535 1010.6 555 1010.4 583.0 Z" fill="url(#edgR)"/><rect x="776" y="472.7" width="255" height="110.3" fill="url(#spk)"/><path d="M797.6 579.0 C797.2 555 796 535 794.4 520 C792.8 503 790.5 485 787.4 472.7" stroke="url(#lobg)" stroke-width="1.8" fill="none"/><path d="M1010.4 579.0 C1010.6 555 1011.3 535 1012.9 520 C1014.5 503 1016.8 485 1019.9 472.7" stroke="url(#lobg)" stroke-width="1.8" fill="none"/><path d="M776.6 575.0 C777.4 545 779 520 780.6 505 C782.3 490 784.5 477 787.4 472.7" stroke="#20c0d0" stroke-width="0.9" fill="none" opacity=".7"/><path d="M1030.7 575.0 C1029.8 545 1028.1 520 1026.5 505 C1024.7 490 1022.4 477 1019.9 472.7" stroke="#20c0d0" stroke-width="0.9" fill="none" opacity=".7"/><path d="M811 486h1m21 0h1m169 0h1M792 487h1m197 0h1M909 489h1M853 490h1m153 0h1M846 491h1m42 0h1m3 0h1m7 0h1M873 492h1m2 0h1M812 493h1m5 0h1m32 0h1M792 494h1m77 0h1m18 0h1m78 0h1M820 496h1m50 0h1m49 0h1M977 497h1m0 0h1M839 498h1m32 0h1m58 0h1M803 499h1m111 0h1m35 0h1m29 0h1M821 500h1m146 0h1M804 501h1m37 0h1m89 0h1m21 0h1M797 502h1m100 0h1m14 0h1m20 0h1m10 0h1m10 0h1m16 0h1m18 0h1M812 503h1m9 0h1m30 0h1m19 0h1m18 0h1m57 0h1m11 0h1m13 0h1M800 504h1m18 0h1m28 0h1m95 0h1m3 0h1M831 505h1m83 0h1m52 0h1M812 506h1m10 0h1m48 0h1m4 0h1m1 0h1m27 0h1m73 0h1M813 507h1m23 0h1m52 0h1m11 0h1m30 0h1m3 0h1m28 0h1m43 0h1M801 508h1m22 0h1m12 0h1m29 0h1m5 0h1m91 0h1m16 0h1M853 509h1m75 0h1m28 0h1m3 0h1m21 0h1m11 0h1M798 510h1m48 0h1m0 0h1m46 0h1m17 0h1m0 0h1m13 0h1m5 0h1m39 0h1m4 0h1m6 0h1m10 0h1M822 511h1m13 0h1m11 0h1m25 0h1m18 0h1m30 0h1m25 0h1m18 0h1m12 0h1m2 0h1M796 512h1m18 0h1m13 0h1m1 0h1m64 0h1m11 0h1m11 0h1m12 0h1m4 0h1m5 0h1m2 0h1m2 0h1m24 0h1m5 0h1m3 0h1m3 0h1m3 0h1M797 513h1m4 0h1m25 0h1m12 0h1m8 0h1m16 0h1m21 0h1m11 0h1m4 0h1m12 0h1m10 0h1m17 0h1m5 0h1m50 0h1M794 514h1m18 0h1m10 0h1m3 0h1m15 0h1m24 0h1m13 0h1m1 0h1m11 0h1m22 0h1m3 0h1m0 0h1m20 0h1m19 0h1m0 0h1m26 0h1m4 0h1m19 0h1M796 515h1m0 0h1m18 0h1m45 0h1m4 0h1m3 0h1m10 0h1m0 0h1m1 0h1m3 0h1m15 0h1m15 0h1m22 0h1m4 0h1m1 0h1m13 0h1m8 0h1m50 0h1M838 516h1m4 0h1m3 0h1m2 0h1m0 0h1m5 0h1m29 0h1m14 0h1m15 0h1m54 0h1m3 0h1m13 0h1m6 0h1M796 517h1m25 0h1m2 0h1m10 0h1m51 0h1m4 0h1m7 0h1m28 0h1m1 0h1m9 0h1m0 0h1m73 0h1M816 518h1m10 0h1m29 0h1m0 0h1m2 0h1m28 0h1m3 0h1m7 0h1m6 0h1m1 0h1m4 0h1m10 0h1m4 0h1m38 0h1m7 0h1m12 0h1m2 0h1m7 0h1m7 0h1M800 519h1m14 0h1m6 0h1m6 0h1m0 0h1m2 0h1m2 0h1m10 0h1m13 0h1m1 0h1m14 0h1m1 0h1m2 0h1m8 0h1m2 0h1m28 0h1m2 0h1m16 0h1m2 0h1m38 0h1m5 0h1m13 0h1m8 0h1M808 520h1m2 0h1m3 0h1m0 0h1m0 0h1m18 0h1m4 0h1m8 0h1m18 0h1m11 0h1m28 0h1m1 0h1m1 0h1m6 0h1m1 0h1m33 0h1m20 0h1m45 0h1m1 0h1M782 521h1m0 0h1m31 0h1m5 0h1m4 0h1m20 0h1m28 0h1m24 0h1m62 0h1m11 0h1M781 522h1m4 0h1m0 0h1m18 0h1m11 0h1m7 0h1m19 0h1m6 0h1m10 0h1m9 0h1m2 0h1m5 0h1m10 0h1m2 0h1m0 0h1m7 0h1m2 0h1m12 0h1m7 0h1m32 0h1m6 0h1m9 0h1m38 0h1m3 0h1M789 523h1m1 0h1m0 0h1m13 0h1m14 0h1m8 0h1m8 0h1m6 0h1m8 0h1m6 0h1m3 0h1m12 0h1m18 0h1m7 0h1m19 0h1m0 0h1m10 0h1m2 0h1m8 0h1m14 0h1m12 0h1m7 0h1m13 0h1m12 0h1m5 0h1m4 0h1M782 524h1m0 0h1m18 0h1m7 0h1m12 0h1m5 0h1m3 0h1m20 0h1m7 0h1m0 0h1m3 0h1m9 0h1m1 0h1m6 0h1m3 0h1m1 0h1m1 0h1m2 0h1m3 0h1m2 0h1m11 0h1m5 0h1m3 0h1m4 0h1m8 0h1m21 0h1m15 0h1m2 0h1m0 0h1m8 0h1m6 0h1m16 0h1m3 0h1M795 525h1m2 0h1m3 0h1m0 0h1m22 0h1m10 0h1m27 0h1m27 0h1m21 0h1m0 0h1m13 0h1m25 0h1m22 0h1m6 0h1m0 0h1m6 0h1m13 0h1m12 0h1m0 0h1M781 526h1m5 0h1m7 0h1m29 0h1m10 0h1m9 0h1m0 0h1m27 0h1m13 0h1m7 0h1m3 0h1m8 0h1m3 0h1m46 0h1m25 0h1m1 0h1m19 0h1m8 0h1m1 0h1M786 527h1m6 0h1m24 0h1m18 0h1m10 0h1m10 0h1m4 0h1m11 0h1m1 0h1m5 0h1m7 0h1m3 0h1m12 0h1m16 0h1m0 0h1m3 0h1m11 0h1m13 0h1m3 0h1m21 0h1m34 0h1M782 528h1m1 0h1m5 0h1m17 0h1m40 0h1m3 0h1m1 0h1m10 0h1m2 0h1m3 0h1m3 0h1m16 0h1m4 0h1m1 0h1m19 0h1m6 0h1m3 0h1m8 0h1m3 0h1m1 0h1m15 0h1m12 0h1m6 0h1m5 0h1m0 0h1m1 0h1m28 0h1m5 0h1M791 529h1m0 0h1m10 0h1m4 0h1m1 0h1m8 0h1m0 0h1m4 0h1m4 0h1m18 0h1m8 0h1m16 0h1m9 0h1m1 0h1m0 0h1m1 0h1m6 0h1m0 0h1m11 0h1m15 0h1m0 0h1m1 0h1m6 0h1m8 0h1m2 0h1m10 0h1m1 0h1m2 0h1m0 0h1m12 0h1m0 0h1m0 0h1m9 0h1m13 0h1m8 0h1m2 0h1m4 0h1m5 0h1M781 530h1m0 0h1m2 0h1m17 0h1m1 0h1m2 0h1m2 0h1m3 0h1m0 0h1m5 0h1m3 0h1m0 0h1m1 0h1m6 0h1m1 0h1m12 0h1m5 0h1m4 0h1m2 0h1m0 0h1m0 0h1m0 0h1m2 0h1m1 0h1m0 0h1m1 0h1m1 0h1m3 0h1m0 0h1m9 0h1m13 0h1m9 0h1m1 0h1m10 0h1m5 0h1m2 0h1m3 0h1m7 0h1m2 0h1m7 0h1m31 0h1m6 0h1m11 0h1M786 531h1m3 0h1m1 0h1m35 0h1m10 0h1m2 0h1m1 0h1m0 0h1m4 0h1m0 0h1m5 0h1m4 0h1m2 0h1m1 0h1m1 0h1m3 0h1m2 0h1m0 0h1m1 0h1m15 0h1m0 0h1m1 0h1m5 0h1m0 0h1m0 0h1m1 0h1m10 0h1m0 0h1m0 0h1m0 0h1m3 0h1m13 0h1m3 0h1m34 0h1m1 0h1m4 0h1m1 0h1m0 0h1m3 0h1m1 0h1m12 0h1m7 0h1m1 0h1M783 532h1m1 0h1m0 0h1m1 0h1m3 0h1m16 0h1m1 0h1m0 0h1m8 0h1m5 0h1m6 0h1m0 0h1m0 0h1m0 0h1m2 0h1m8 0h1m5 0h1m3 0h1m8 0h1m2 0h1m0 0h1m7 0h1m1 0h1m6 0h1m5 0h1m3 0h1m12 0h1m2 0h1m5 0h1m14 0h1m7 0h1m7 0h1m0 0h1m8 0h1m6 0h1m4 0h1m3 0h1m2 0h1m0 0h1m0 0h1m0 0h1m1 0h1m0 0h1m4 0h1m2 0h1m17 0h1m5 0h1m5 0h1M780 533h1m3 0h1m4 0h1m0 0h1m0 0h1m15 0h1m4 0h1m12 0h1m3 0h1m3 0h1m4 0h1m11 0h1m0 0h1m5 0h1m4 0h1m8 0h1m0 0h1m4 0h1m1 0h1m2 0h1m0 0h1m2 0h1m3 0h1m12 0h1m0 0h1m2 0h1m0 0h1m2 0h1m1 0h1m1 0h1m2 0h1m11 0h1m5 0h1m6 0h1m5 0h1m1 0h1m2 0h1m4 0h1m20 0h1m21 0h1m6 0h1m5 0h1m0 0h1m1 0h1m0 0h1m3 0h1M781 534h1m10 0h1m0 0h1m10 0h1m1 0h1m1 0h1m3 0h1m6 0h1m1 0h1m4 0h1m4 0h1m11 0h1m0 0h1m0 0h1m3 0h1m9 0h1m13 0h1m12 0h1m8 0h1m1 0h1m30 0h1m2 0h1m0 0h1m14 0h1m2 0h1m3 0h1m0 0h1m9 0h1m4 0h1m5 0h1m0 0h1m0 0h1m8 0h1m1 0h1m1 0h1m10 0h1m9 0h1m9 0h1M792 535h1m4 0h1m0 0h1m1 0h1m11 0h1m8 0h1m5 0h1m1 0h1m2 0h1m1 0h1m1 0h1m6 0h1m0 0h1m4 0h1m3 0h1m9 0h1m7 0h1m1 0h1m1 0h1m1 0h1m1 0h1m0 0h1m0 0h1m4 0h1m8 0h1m4 0h1m0 0h1m11 0h1m0 0h1m4 0h1m1 0h1m3 0h1m0 0h1m5 0h1m0 0h1m1 0h1m0 0h1m3 0h1m4 0h1m11 0h1m0 0h1m12 0h1m3 0h1m13 0h1m4 0h1m0 0h1m4 0h1m0 0h1m10 0h1m0 0h1m0 0h1m4 0h1m4 0h1m2 0h1M780 536h1m8 0h1m1 0h1m0 0h1m8 0h1m6 0h1m1 0h1m0 0h1m2 0h1m1 0h1m13 0h1m4 0h1m5 0h1m9 0h1m1 0h1m0 0h1m0 0h1m2 0h1m2 0h1m3 0h1m8 0h1m3 0h1m4 0h1m4 0h1m2 0h1m1 0h1m0 0h1m0 0h1m7 0h1m2 0h1m7 0h1m6 0h1m15 0h1m9 0h1m6 0h1m0 0h1m7 0h1m1 0h1m4 0h1m3 0h1m3 0h1m9 0h1m2 0h1m15 0h1m1 0h1m8 0h1m7 0h1m0 0h1M790 537h1m10 0h1m2 0h1m7 0h1m2 0h1m11 0h1m9 0h1m0 0h1m2 0h1m0 0h1m4 0h1m1 0h1m2 0h1m3 0h1m4 0h1m0 0h1m1 0h1m1 0h1m5 0h1m0 0h1m1 0h1m0 0h1m0 0h1m0 0h1m3 0h1m1 0h1m0 0h1m0 0h1m4 0h1m2 0h1m4 0h1m1 0h1m2 0h1m1 0h1m11 0h1m2 0h1m0 0h1m8 0h1m0 0h1m1 0h1m2 0h1m3 0h1m0 0h1m1 0h1m0 0h1m2 0h1m1 0h1m2 0h1m7 0h1m2 0h1m0 0h1m4 0h1m5 0h1m2 0h1m4 0h1m0 0h1m6 0h1m0 0h1m2 0h1m6 0h1m0 0h1m0 0h1m4 0h1m4 0h1m3 0h1m1 0h1m0 0h1M783 538h1m7 0h1m1 0h1m5 0h1m3 0h1m7 0h1m2 0h1m15 0h1m0 0h1m3 0h1m4 0h1m1 0h1m6 0h1m7 0h1m1 0h1m0 0h1m3 0h1m0 0h1m3 0h1m1 0h1m2 0h1m5 0h1m2 0h1m2 0h1m1 0h1m0 0h1m4 0h1m4 0h1m1 0h1m0 0h1m0 0h1m14 0h1m15 0h1m0 0h1m1 0h1m6 0h1m8 0h1m2 0h1m3 0h1m3 0h1m1 0h1m2 0h1m0 0h1m6 0h1m13 0h1m0 0h1m5 0h1m5 0h1m3 0h1m3 0h1m0 0h1m1 0h1m3 0h1m0 0h1m6 0h1M784 539h1m0 0h1m6 0h1m4 0h1m2 0h1m1 0h1m0 0h1m1 0h1m1 0h1m9 0h1m3 0h1m0 0h1m3 0h1m2 0h1m4 0h1m8 0h1m10 0h1m3 0h1m5 0h1m2 0h1m0 0h1m1 0h1m0 0h1m6 0h1m0 0h1m0 0h1m6 0h1m7 0h1m0 0h1m1 0h1m0 0h1m0 0h1m6 0h1m0 0h1m3 0h1m2 0h1m1 0h1m6 0h1m4 0h1m2 0h1m14 0h1m2 0h1m3 0h1m0 0h1m0 0h1m0 0h1m8 0h1m5 0h1m6 0h1m0 0h1m7 0h1m0 0h1m4 0h1m24 0h1m2 0h1m1 0h1M794 540h1m2 0h1m1 0h1m7 0h1m1 0h1m20 0h1m4 0h1m2 0h1m3 0h1m4 0h1m0 0h1m6 0h1m1 0h1m0 0h1m0 0h1m3 0h1m6 0h1m4 0h1m4 0h1m0 0h1m0 0h1m0 0h1m1 0h1m2 0h1m5 0h1m3 0h1m1 0h1m0 0h1m1 0h1m1 0h1m5 0h1m10 0h1m1 0h1m0 0h1m8 0h1m5 0h1m0 0h1m7 0h1m9 0h1m7 0h1m2 0h1m0 0h1m16 0h1m1 0h1m1 0h1m4 0h1m1 0h1m5 0h1m4 0h1m3 0h1m4 0h1m0 0h1M791 541h1m9 0h1m17 0h1m10 0h1m2 0h1m2 0h1m4 0h1m3 0h1m0 0h1m1 0h1m1 0h1m0 0h1m17 0h1m0 0h1m0 0h1m0 0h1m1 0h1m1 0h1m3 0h1m3 0h1m1 0h1m3 0h1m7 0h1m1 0h1m2 0h1m0 0h1m4 0h1m0 0h1m1 0h1m5 0h1m2 0h1m2 0h1m3 0h1m2 0h1m1 0h1m3 0h1m2 0h1m0 0h1m2 0h1m19 0h1m3 0h1m0 0h1m4 0h1m15 0h1m1 0h1m0 0h1m4 0h1m12 0h1m1 0h1m0 0h1m10 0h1m2 0h1M805 542h1m0 0h1m1 0h1m0 0h1m3 0h1m4 0h1m0 0h1m2 0h1m3 0h1m0 0h1m7 0h1m2 0h1m7 0h1m2 0h1m10 0h1m4 0h1m6 0h1m4 0h1m0 0h1m6 0h1m2 0h1m1 0h1m2 0h1m1 0h1m4 0h1m1 0h1m3 0h1m5 0h1m2 0h1m3 0h1m4 0h1m1 0h1m0 0h1m5 0h1m1 0h1m0 0h1m3 0h1m0 0h1m3 0h1m0 0h1m1 0h1m1 0h1m1 0h1m1 0h1m1 0h1m5 0h1m5 0h1m0 0h1m4 0h1m3 0h1m2 0h1m0 0h1m2 0h1m3 0h1m3 0h1m0 0h1m0 0h1m6 0h1m0 0h1m0 0h1m2 0h1m10 0h1m5 0h1m3 0h1M781 543h1m5 0h1m5 0h1m21 0h1m0 0h1m1 0h1m7 0h1m6 0h1m4 0h1m7 0h1m0 0h1m1 0h1m8 0h1m0 0h1m1 0h1m2 0h1m0 0h1m2 0h1m8 0h1m3 0h1m2 0h1m4 0h1m7 0h1m0 0h1m1 0h1m5 0h1m2 0h1m4 0h1m1 0h1m6 0h1m10 0h1m2 0h1m1 0h1m2 0h1m0 0h1m0 0h1m3 0h1m4 0h1m0 0h1m3 0h1m5 0h1m5 0h1m5 0h1m3 0h1m0 0h1m1 0h1m0 0h1m3 0h1m2 0h1m2 0h1m0 0h1m12 0h1m0 0h1m1 0h1m2 0h1m1 0h1m3 0h1m6 0h1M780 544h1m5 0h1m1 0h1m0 0h1m3 0h1m6 0h1m1 0h1m1 0h1m6 0h1m3 0h1m6 0h1m5 0h1m3 0h1m8 0h1m1 0h1m9 0h1m4 0h1m4 0h1m0 0h1m0 0h1m1 0h1m1 0h1m5 0h1m3 0h1m0 0h1m6 0h1m5 0h1m1 0h1m0 0h1m0 0h1m0 0h1m4 0h1m5 0h1m0 0h1m14 0h1m1 0h1m0 0h1m8 0h1m0 0h1m3 0h1m1 0h1m1 0h1m3 0h1m1 0h1m2 0h1m5 0h1m0 0h1m2 0h1m2 0h1m0 0h1m5 0h1m1 0h1m7 0h1m1 0h1m1 0h1m4 0h1m1 0h1m3 0h1m9 0h1m2 0h1m0 0h1m0 0h1m0 0h1m1 0h1m4 0h1M783 545h1m0 0h1m4 0h1m4 0h1m0 0h1m3 0h1m5 0h1m2 0h1m7 0h1m7 0h1m11 0h1m0 0h1m1 0h1m1 0h1m2 0h1m1 0h1m8 0h1m0 0h1m3 0h1m11 0h1m2 0h1m4 0h1m2 0h1m2 0h1m3 0h1m5 0h1m1 0h1m1 0h1m1 0h1m1 0h1m1 0h1m0 0h1m0 0h1m0 0h1m1 0h1m0 0h1m9 0h1m2 0h1m1 0h1m1 0h1m4 0h1m0 0h1m0 0h1m1 0h1m0 0h1m0 0h1m0 0h1m0 0h1m1 0h1m0 0h1m2 0h1m1 0h1m0 0h1m0 0h1m2 0h1m1 0h1m1 0h1m6 0h1m5 0h1m3 0h1m1 0h1m1 0h1m1 0h1m3 0h1m0 0h1m7 0h1m8 0h1m4 0h1m3 0h1m5 0h1m2 0h1m5 0h1M781 546h1m5 0h1m2 0h1m0 0h1m9 0h1m9 0h1m2 0h1m5 0h1m0 0h1m7 0h1m6 0h1m1 0h1m2 0h1m0 0h1m1 0h1m3 0h1m3 0h1m9 0h1m0 0h1m3 0h1m3 0h1m2 0h1m2 0h1m6 0h1m0 0h1m6 0h1m2 0h1m3 0h1m7 0h1m1 0h1m2 0h1m2 0h1m1 0h1m0 0h1m3 0h1m1 0h1m7 0h1m0 0h1m8 0h1m0 0h1m0 0h1m3 0h1m1 0h1m0 0h1m7 0h1m2 0h1m1 0h1m1 0h1m7 0h1m2 0h1m1 0h1m4 0h1m0 0h1m1 0h1m8 0h1m1 0h1m2 0h1m10 0h1m2 0h1m9 0h1M780 547h1m0 0h1m2 0h1m5 0h1m0 0h1m2 0h1m10 0h1m0 0h1m2 0h1m1 0h1m0 0h1m7 0h1m4 0h1m4 0h1m1 0h1m0 0h1m0 0h1m1 0h1m4 0h1m7 0h1m1 0h1m2 0h1m0 0h1m0 0h1m0 0h1m0 0h1m3 0h1m1 0h1m2 0h1m1 0h1m2 0h1m2 0h1m0 0h1m0 0h1m0 0h1m1 0h1m5 0h1m0 0h1m4 0h1m4 0h1m2 0h1m0 0h1m1 0h1m6 0h1m4 0h1m4 0h1m2 0h1m1 0h1m4 0h1m0 0h1m0 0h1m5 0h1m8 0h1m1 0h1m0 0h1m9 0h1m1 0h1m0 0h1m4 0h1m0 0h1m1 0h1m0 0h1m0 0h1m0 0h1m1 0h1m0 0h1m1 0h1m5 0h1m0 0h1m0 0h1m21 0h1m2 0h1m4 0h1m2 0h1m2 0h1m1 0h1m2 0h1M781 548h1m5 0h1m0 0h1m4 0h1m2 0h1m4 0h1m6 0h1m9 0h1m0 0h1m0 0h1m5 0h1m0 0h1m5 0h1m1 0h1m1 0h1m1 0h1m3 0h1m0 0h1m6 0h1m3 0h1m3 0h1m1 0h1m6 0h1m1 0h1m10 0h1m0 0h1m2 0h1m0 0h1m1 0h1m5 0h1m0 0h1m2 0h1m4 0h1m8 0h1m0 0h1m0 0h1m0 0h1m2 0h1m3 0h1m3 0h1m5 0h1m3 0h1m1 0h1m7 0h1m8 0h1m1 0h1m6 0h1m0 0h1m0 0h1m1 0h1m0 0h1m3 0h1m0 0h1m4 0h1m0 0h1m3 0h1m7 0h1m1 0h1m2 0h1m23 0h1m2 0h1m2 0h1m0 0h1M780 549h1m3 0h1m2 0h1m0 0h1m1 0h1m1 0h1m0 0h1m1 0h1m0 0h1m6 0h1m1 0h1m5 0h1m6 0h1m0 0h1m0 0h1m6 0h1m0 0h1m0 0h1m1 0h1m0 0h1m5 0h1m1 0h1m1 0h1m6 0h1m0 0h1m0 0h1m1 0h1m4 0h1m0 0h1m3 0h1m5 0h1m3 0h1m4 0h1m4 0h1m0 0h1m0 0h1m3 0h1m0 0h1m0 0h1m1 0h1m2 0h1m2 0h1m0 0h1m1 0h1m0 0h1m3 0h1m1 0h1m0 0h1m5 0h1m1 0h1m9 0h1m9 0h1m0 0h1m4 0h1m1 0h1m1 0h1m5 0h1m0 0h1m1 0h1m0 0h1m8 0h1m0 0h1m1 0h1m0 0h1m2 0h1m0 0h1m5 0h1m6 0h1m19 0h1m0 0h1m3 0h1m7 0h1m0 0h1m1 0h1m1 0h1m0 0h1M779 550h1m0 0h1m3 0h1m2 0h1m2 0h1m0 0h1m0 0h1m2 0h1m2 0h1m1 0h1m3 0h1m5 0h1m6 0h1m1 0h1m2 0h1m5 0h1m12 0h1m6 0h1m11 0h1m4 0h1m4 0h1m3 0h1m7 0h1m1 0h1m9 0h1m2 0h1m1 0h1m1 0h1m1 0h1m0 0h1m0 0h1m1 0h1m3 0h1m3 0h1m3 0h1m0 0h1m0 0h1m2 0h1m1 0h1m0 0h1m2 0h1m5 0h1m2 0h1m2 0h1m2 0h1m6 0h1m7 0h1m5 0h1m2 0h1m13 0h1m1 0h1m1 0h1m1 0h1m1 0h1m6 0h1m0 0h1m0 0h1m13 0h1m1 0h1m0 0h1m1 0h1m1 0h1M779 551h1m1 0h1m0 0h1m3 0h1m5 0h1m1 0h1m0 0h1m2 0h1m0 0h1m0 0h1m3 0h1m0 0h1m0 0h1m2 0h1m1 0h1m6 0h1m2 0h1m4 0h1m6 0h1m1 0h1m1 0h1m0 0h1m0 0h1m1 0h1m0 0h1m0 0h1m3 0h1m8 0h1m3 0h1m9 0h1m1 0h1m4 0h1m1 0h1m5 0h1m1 0h1m2 0h1m0 0h1m8 0h1m6 0h1m4 0h1m1 0h1m2 0h1m0 0h1m4 0h1m2 0h1m0 0h1m1 0h1m0 0h1m0 0h1m1 0h1m0 0h1m0 0h1m2 0h1m0 0h1m0 0h1m2 0h1m6 0h1m1 0h1m3 0h1m0 0h1m4 0h1m1 0h1m11 0h1m0 0h1m0 0h1m0 0h1m2 0h1m2 0h1m0 0h1m0 0h1m0 0h1m1 0h1m0 0h1m8 0h1m0 0h1m2 0h1m4 0h1m7 0h1m0 0h1m0 0h1m1 0h1m1 0h1m4 0h1M782 552h1m6 0h1m3 0h1m0 0h1m0 0h1m1 0h1m1 0h1m0 0h1m0 0h1m8 0h1m4 0h1m0 0h1m0 0h1m4 0h1m1 0h1m1 0h1m0 0h1m1 0h1m0 0h1m6 0h1m9 0h1m3 0h1m3 0h1m6 0h1m1 0h1m2 0h1m0 0h1m0 0h1m0 0h1m3 0h1m3 0h1m1 0h1m2 0h1m2 0h1m3 0h1m1 0h1m2 0h1m0 0h1m0 0h1m0 0h1m1 0h1m1 0h1m2 0h1m0 0h1m9 0h1m0 0h1m0 0h1m0 0h1m2 0h1m6 0h1m9 0h1m3 0h1m0 0h1m3 0h1m0 0h1m0 0h1m6 0h1m0 0h1m1 0h1m3 0h1m5 0h1m3 0h1m9 0h1m5 0h1m4 0h1m1 0h1m0 0h1m5 0h1m2 0h1m1 0h1m13 0h1m4 0h1M782 553h1m3 0h1m2 0h1m0 0h1m0 0h1m2 0h1m0 0h1m1 0h1m2 0h1m1 0h1m1 0h1m2 0h1m2 0h1m10 0h1m0 0h1m1 0h1m2 0h1m5 0h1m0 0h1m0 0h1m0 0h1m9 0h1m2 0h1m0 0h1m1 0h1m7 0h1m0 0h1m1 0h1m0 0h1m1 0h1m8 0h1m3 0h1m0 0h1m2 0h1m6 0h1m0 0h1m1 0h1m0 0h1m0 0h1m0 0h1m5 0h1m1 0h1m2 0h1m1 0h1m1 0h1m2 0h1m0 0h1m9 0h1m0 0h1m1 0h1m4 0h1m0 0h1m0 0h1m0 0h1m0 0h1m1 0h1m2 0h1m9 0h1m1 0h1m14 0h1m3 0h1m4 0h1m2 0h1m1 0h1m1 0h1m0 0h1m4 0h1m3 0h1m3 0h1m7 0h1m2 0h1m4 0h1m0 0h1m1 0h1m3 0h1m0 0h1m0 0h1m3 0h1M781 554h1m5 0h1m2 0h1m0 0h1m4 0h1m2 0h1m0 0h1m1 0h1m2 0h1m7 0h1m1 0h1m1 0h1m2 0h1m0 0h1m1 0h1m0 0h1m1 0h1m1 0h1m2 0h1m2 0h1m0 0h1m5 0h1m9 0h1m1 0h1m0 0h1m6 0h1m1 0h1m2 0h1m2 0h1m4 0h1m2 0h1m0 0h1m0 0h1m0 0h1m2 0h1m0 0h1m2 0h1m2 0h1m0 0h1m0 0h1m2 0h1m0 0h1m3 0h1m0 0h1m2 0h1m1 0h1m1 0h1m1 0h1m1 0h1m0 0h1m6 0h1m1 0h1m2 0h1m3 0h1m4 0h1m1 0h1m2 0h1m0 0h1m4 0h1m1 0h1m10 0h1m9 0h1m0 0h1m7 0h1m1 0h1m0 0h1m1 0h1m2 0h1m0 0h1m0 0h1m2 0h1m3 0h1m0 0h1m0 0h1m0 0h1m2 0h1m1 0h1m6 0h1m5 0h1m10 0h1M781 555h1m0 0h1m0 0h1m0 0h1m4 0h1m0 0h1m1 0h1m1 0h1m5 0h1m3 0h1m7 0h1m7 0h1m0 0h1m0 0h1m3 0h1m1 0h1m0 0h1m0 0h1m6 0h1m2 0h1m1 0h1m2 0h1m12 0h1m4 0h1m0 0h1m2 0h1m1 0h1m2 0h1m4 0h1m0 0h1m3 0h1m3 0h1m0 0h1m0 0h1m0 0h1m0 0h1m1 0h1m0 0h1m2 0h1m0 0h1m2 0h1m2 0h1m2 0h1m0 0h1m3 0h1m1 0h1m0 0h1m3 0h1m4 0h1m0 0h1m1 0h1m1 0h1m1 0h1m6 0h1m2 0h1m1 0h1m1 0h1m1 0h1m1 0h1m1 0h1m1 0h1m4 0h1m8 0h1m0 0h1m6 0h1m1 0h1m3 0h1m3 0h1m1 0h1m3 0h1m2 0h1m2 0h1m8 0h1m1 0h1m2 0h1m0 0h1m1 0h1m1 0h1m1 0h1m5 0h1m4 0h1M782 556h1m1 0h1m2 0h1m0 0h1m19 0h1m4 0h1m16 0h1m0 0h1m1 0h1m18 0h1m0 0h1m0 0h1m11 0h1m1 0h1m0 0h1m5 0h1m1 0h1m0 0h1m0 0h1m0 0h1m1 0h1m2 0h1m0 0h1m1 0h1m4 0h1m0 0h1m0 0h1m1 0h1m0 0h1m0 0h1m2 0h1m0 0h1m1 0h1m2 0h1m3 0h1m0 0h1m0 0h1m1 0h1m0 0h1m3 0h1m2 0h1m0 0h1m4 0h1m1 0h1m1 0h1m2 0h1m0 0h1m0 0h1m0 0h1m0 0h1m2 0h1m8 0h1m2 0h1m3 0h1m0 0h1m3 0h1m0 0h1m0 0h1m5 0h1m2 0h1m0 0h1m14 0h1m0 0h1m3 0h1m2 0h1m9 0h1m0 0h1m2 0h1m5 0h1m1 0h1m0 0h1m1 0h1m0 0h1M782 557h1m2 0h1m16 0h1m8 0h1m4 0h1m0 0h1m8 0h1m3 0h1m5 0h1m2 0h1m1 0h1m0 0h1m1 0h1m4 0h1m0 0h1m5 0h1m0 0h1m1 0h1m2 0h1m2 0h1m5 0h1m1 0h1m0 0h1m1 0h1m1 0h1m4 0h1m1 0h1m1 0h1m1 0h1m3 0h1m10 0h1m0 0h1m0 0h1m2 0h1m6 0h1m0 0h1m2 0h1m0 0h1m2 0h1m4 0h1m1 0h1m0 0h1m0 0h1m0 0h1m1 0h1m1 0h1m4 0h1m0 0h1m0 0h1m0 0h1m1 0h1m3 0h1m0 0h1m0 0h1m2 0h1m2 0h1m0 0h1m2 0h1m1 0h1m3 0h1m0 0h1m1 0h1m3 0h1m0 0h1m1 0h1m3 0h1m2 0h1m1 0h1m1 0h1m3 0h1m0 0h1m8 0h1m0 0h1m2 0h1m6 0h1m5 0h1m1 0h1m1 0h1m1 0h1M779 558h1m2 0h1m1 0h1m4 0h1m1 0h1m3 0h1m6 0h1m0 0h1m0 0h1m0 0h1m7 0h1m2 0h1m1 0h1m0 0h1m3 0h1m0 0h1m2 0h1m0 0h1m2 0h1m1 0h1m3 0h1m1 0h1m1 0h1m2 0h1m1 0h1m1 0h1m3 0h1m1 0h1m4 0h1m2 0h1m0 0h1m2 0h1m0 0h1m1 0h1m1 0h1m0 0h1m1 0h1m5 0h1m0 0h1m0 0h1m1 0h1m1 0h1m0 0h1m0 0h1m0 0h1m2 0h1m1 0h1m2 0h1m2 0h1m1 0h1m0 0h1m1 0h1m1 0h1m2 0h1m2 0h1m1 0h1m1 0h1m1 0h1m2 0h1m2 0h1m2 0h1m0 0h1m3 0h1m0 0h1m2 0h1m1 0h1m0 0h1m0 0h1m3 0h1m1 0h1m0 0h1m0 0h1m2 0h1m0 0h1m8 0h1m5 0h1m2 0h1m2 0h1m6 0h1m0 0h1m7 0h1m8 0h1m6 0h1m6 0h1m0 0h1m2 0h1m3 0h1m0 0h1m2 0h1m2 0h1m0 0h1M783 559h1m0 0h1m1 0h1m6 0h1m1 0h1m1 0h1m1 0h1m11 0h1m2 0h1m4 0h1m3 0h1m1 0h1m2 0h1m8 0h1m1 0h1m0 0h1m0 0h1m4 0h1m3 0h1m1 0h1m1 0h1m3 0h1m1 0h1m1 0h1m9 0h1m1 0h1m1 0h1m2 0h1m4 0h1m0 0h1m0 0h1m1 0h1m1 0h1m2 0h1m1 0h1m0 0h1m0 0h1m0 0h1m2 0h1m0 0h1m0 0h1m0 0h1m7 0h1m1 0h1m6 0h1m5 0h1m0 0h1m7 0h1m1 0h1m3 0h1m6 0h1m0 0h1m0 0h1m3 0h1m1 0h1m0 0h1m7 0h1m1 0h1m0 0h1m1 0h1m0 0h1m0 0h1m4 0h1m0 0h1m7 0h1m0 0h1m5 0h1m2 0h1m0 0h1m4 0h1m3 0h1m3 0h1m1 0h1m2 0h1m2 0h1m3 0h1m0 0h1m2 0h1m0 0h1M779 560h1m10 0h1m0 0h1m0 0h1m1 0h1m1 0h1m5 0h1m2 0h1m3 0h1m3 0h1m3 0h1m6 0h1m0 0h1m1 0h1m2 0h1m0 0h1m1 0h1m1 0h1m0 0h1m2 0h1m6 0h1m1 0h1m0 0h1m0 0h1m2 0h1m2 0h1m0 0h1m3 0h1m6 0h1m1 0h1m0 0h1m1 0h1m0 0h1m3 0h1m0 0h1m1 0h1m0 0h1m0 0h1m1 0h1m1 0h1m2 0h1m2 0h1m0 0h1m0 0h1m0 0h1m1 0h1m0 0h1m8 0h1m0 0h1m5 0h1m1 0h1m0 0h1m2 0h1m2 0h1m3 0h1m1 0h1m0 0h1m0 0h1m1 0h1m0 0h1m0 0h1m0 0h1m4 0h1m0 0h1m2 0h1m2 0h1m1 0h1m2 0h1m11 0h1m0 0h1m2 0h1m9 0h1m11 0h1m3 0h1m6 0h1m5 0h1m0 0h1m0 0h1m1 0h1m0 0h1m0 0h1m3 0h1M779 561h1m4 0h1m0 0h1m1 0h1m0 0h1m1 0h1m2 0h1m0 0h1m0 0h1m1 0h1m4 0h1m0 0h1m3 0h1m7 0h1m4 0h1m0 0h1m0 0h1m2 0h1m0 0h1m0 0h1m0 0h1m4 0h1m0 0h1m0 0h1m0 0h1m3 0h1m0 0h1m1 0h1m1 0h1m2 0h1m1 0h1m4 0h1m0 0h1m0 0h1m0 0h1m0 0h1m0 0h1m1 0h1m0 0h1m0 0h1m1 0h1m1 0h1m0 0h1m0 0h1m0 0h1m1 0h1m2 0h1m1 0h1m0 0h1m0 0h1m1 0h1m2 0h1m1 0h1m4 0h1m0 0h1m1 0h1m0 0h1m0 0h1m0 0h1m0 0h1m2 0h1m2 0h1m0 0h1m0 0h1m3 0h1m2 0h1m0 0h1m1 0h1m1 0h1m2 0h1m0 0h1m0 0h1m7 0h1m1 0h1m2 0h1m1 0h1m4 0h1m3 0h1m2 0h1m0 0h1m0 0h1m1 0h1m6 0h1m4 0h1m0 0h1m1 0h1m0 0h1m4 0h1m2 0h1m0 0h1m0 0h1m4 0h1m4 0h1m7 0h1m0 0h1m2 0h1m2 0h1m0 0h1m0 0h1m9 0h1m2 0h1m1 0h1m0 0h1m0 0h1m3 0h1M780 562h1m0 0h1m1 0h1m0 0h1m0 0h1m0 0h1m1 0h1m0 0h1m0 0h1m1 0h1m0 0h1m0 0h1m0 0h1m0 0h1m1 0h1m0 0h1m4 0h1m3 0h1m2 0h1m1 0h1m4 0h1m2 0h1m1 0h1m6 0h1m2 0h1m0 0h1m0 0h1m1 0h1m6 0h1m2 0h1m6 0h1m4 0h1m5 0h1m2 0h1m1 0h1m4 0h1m2 0h1m4 0h1m0 0h1m0 0h1m3 0h1m3 0h1m0 0h1m1 0h1m1 0h1m1 0h1m1 0h1m1 0h1m3 0h1m0 0h1m2 0h1m1 0h1m0 0h1m0 0h1m4 0h1m0 0h1m1 0h1m0 0h1m0 0h1m1 0h1m3 0h1m0 0h1m2 0h1m1 0h1m0 0h1m1 0h1m0 0h1m1 0h1m1 0h1m3 0h1m0 0h1m2 0h1m1 0h1m1 0h1m0 0h1m5 0h1m0 0h1m0 0h1m2 0h1m5 0h1m0 0h1m1 0h1m2 0h1m3 0h1m3 0h1m4 0h1m0 0h1m1 0h1m0 0h1m1 0h1m0 0h1m0 0h1m5 0h1m0 0h1m0 0h1m1 0h1m0 0h1m0 0h1m0 0h1m1 0h1m2 0h1m0 0h1m1 0h1M780 563h1m4 0h1m4 0h1m0 0h1m0 0h1m0 0h1m0 0h1m8 0h1m0 0h1m6 0h1m0 0h1m0 0h1m2 0h1m3 0h1m3 0h1m1 0h1m3 0h1m3 0h1m0 0h1m1 0h1m1 0h1m4 0h1m1 0h1m3 0h1m3 0h1m1 0h1m1 0h1m1 0h1m0 0h1m1 0h1m6 0h1m0 0h1m1 0h1m1 0h1m0 0h1m0 0h1m5 0h1m0 0h1m0 0h1m0 0h1m0 0h1m0 0h1m0 0h1m4 0h1m11 0h1m0 0h1m0 0h1m1 0h1m1 0h1m4 0h1m0 0h1m1 0h1m2 0h1m1 0h1m0 0h1m1 0h1m7 0h1m1 0h1m0 0h1m0 0h1m1 0h1m5 0h1m1 0h1m1 0h1m1 0h1m1 0h1m0 0h1m2 0h1m1 0h1m4 0h1m3 0h1m5 0h1m1 0h1m2 0h1m1 0h1m6 0h1m1 0h1m5 0h1m0 0h1m0 0h1m4 0h1m0 0h1m4 0h1m0 0h1m0 0h1m2 0h1m0 0h1m0 0h1m0 0h1m4 0h1m2 0h1M780 564h1m0 0h1m0 0h1m0 0h1m3 0h1m1 0h1m1 0h1m0 0h1m0 0h1m1 0h1m0 0h1m0 0h1m3 0h1m5 0h1m1 0h1m1 0h1m0 0h1m2 0h1m0 0h1m5 0h1m0 0h1m3 0h1m1 0h1m3 0h1m6 0h1m0 0h1m3 0h1m3 0h1m1 0h1m5 0h1m0 0h1m1 0h1m0 0h1m3 0h1m4 0h1m1 0h1m9 0h1m0 0h1m3 0h1m3 0h1m6 0h1m0 0h1m1 0h1m2 0h1m1 0h1m0 0h1m1 0h1m4 0h1m0 0h1m2 0h1m1 0h1m2 0h1m0 0h1m1 0h1m1 0h1m2 0h1m1 0h1m0 0h1m3 0h1m1 0h1m0 0h1m0 0h1m10 0h1m3 0h1m2 0h1m0 0h1m1 0h1m0 0h1m0 0h1m2 0h1m4 0h1m2 0h1m2 0h1m3 0h1m4 0h1m5 0h1m2 0h1m0 0h1m3 0h1m3 0h1m7 0h1m1 0h1m1 0h1m1 0h1m0 0h1m3 0h1m1 0h1M778 565h1m0 0h1m3 0h1m2 0h1m0 0h1m0 0h1m2 0h1m1 0h1m0 0h1m1 0h1m3 0h1m0 0h1m0 0h1m4 0h1m3 0h1m1 0h1m4 0h1m0 0h1m2 0h1m0 0h1m1 0h1m0 0h1m5 0h1m0 0h1m1 0h1m11 0h1m1 0h1m0 0h1m3 0h1m0 0h1m0 0h1m2 0h1m3 0h1m1 0h1m0 0h1m1 0h1m0 0h1m0 0h1m0 0h1m0 0h1m0 0h1m1 0h1m1 0h1m2 0h1m0 0h1m1 0h1m1 0h1m0 0h1m0 0h1m0 0h1m0 0h1m4 0h1m0 0h1m3 0h1m0 0h1m0 0h1m1 0h1m0 0h1m3 0h1m0 0h1m0 0h1m1 0h1m1 0h1m2 0h1m1 0h1m0 0h1m0 0h1m2 0h1m4 0h1m0 0h1m0 0h1m0 0h1m0 0h1m0 0h1m0 0h1m1 0h1m1 0h1m0 0h1m1 0h1m0 0h1m3 0h1m0 0h1m2 0h1m0 0h1m4 0h1m1 0h1m0 0h1m4 0h1m3 0h1m9 0h1m0 0h1m0 0h1m2 0h1m16 0h1m3 0h1m2 0h1m1 0h1m0 0h1m0 0h1m2 0h1m0 0h1m1 0h1m0 0h1m1 0h1m0 0h1m4 0h1M778 566h1m1 0h1m1 0h1m0 0h1m0 0h1m1 0h1m0 0h1m16 0h1m1 0h1m10 0h1m0 0h1m0 0h1m2 0h1m7 0h1m0 0h1m2 0h1m0 0h1m5 0h1m0 0h1m0 0h1m0 0h1m0 0h1m0 0h1m9 0h1m0 0h1m5 0h1m2 0h1m2 0h1m0 0h1m2 0h1m1 0h1m0 0h1m2 0h1m1 0h1m1 0h1m0 0h1m0 0h1m3 0h1m1 0h1m1 0h1m2 0h1m3 0h1m2 0h1m0 0h1m0 0h1m1 0h1m0 0h1m1 0h1m0 0h1m0 0h1m0 0h1m0 0h1m0 0h1m1 0h1m0 0h1m2 0h1m0 0h1m0 0h1m2 0h1m3 0h1m0 0h1m0 0h1m4 0h1m4 0h1m7 0h1m0 0h1m6 0h1m2 0h1m4 0h1m6 0h1m0 0h1m1 0h1m1 0h1m0 0h1m0 0h1m1 0h1m4 0h1m0 0h1m1 0h1m0 0h1m14 0h1m4 0h1m0 0h1m3 0h1m0 0h1m0 0h1m1 0h1m3 0h1m0 0h1m0 0h1m0 0h1m0 0h1M778 567h1m0 0h1m0 0h1m0 0h1m2 0h1m4 0h1m2 0h1m1 0h1m0 0h1m2 0h1m10 0h1m2 0h1m2 0h1m0 0h1m4 0h1m0 0h1m1 0h1m4 0h1m2 0h1m0 0h1m2 0h1m0 0h1m0 0h1m3 0h1m0 0h1m0 0h1m0 0h1m4 0h1m1 0h1m1 0h1m0 0h1m3 0h1m0 0h1m0 0h1m1 0h1m0 0h1m1 0h1m0 0h1m4 0h1m2 0h1m0 0h1m0 0h1m0 0h1m0 0h1m1 0h1m2 0h1m3 0h1m1 0h1m1 0h1m0 0h1m0 0h1m1 0h1m0 0h1m1 0h1m1 0h1m3 0h1m1 0h1m0 0h1m0 0h1m8 0h1m1 0h1m9 0h1m12 0h1m2 0h1m1 0h1m7 0h1m4 0h1m3 0h1m0 0h1m1 0h1m0 0h1m0 0h1m2 0h1m0 0h1m2 0h1m3 0h1m3 0h1m5 0h1m1 0h1m1 0h1m0 0h1m5 0h1m3 0h1m2 0h1m1 0h1m1 0h1m0 0h1m0 0h1m0 0h1m0 0h1m0 0h1m2 0h1m3 0h1m3 0h1M779 568h1m0 0h1m4 0h1m0 0h1m0 0h1m3 0h1m0 0h1m1 0h1m0 0h1m5 0h1m3 0h1m2 0h1m6 0h1m0 0h1m5 0h1m1 0h1m0 0h1m1 0h1m5 0h1m2 0h1m1 0h1m1 0h1m0 0h1m4 0h1m0 0h1m0 0h1m0 0h1m0 0h1m0 0h1m2 0h1m0 0h1m0 0h1m2 0h1m0 0h1m0 0h1m1 0h1m1 0h1m0 0h1m0 0h1m6 0h1m0 0h1m3 0h1m1 0h1m8 0h1m1 0h1m4 0h1m1 0h1m2 0h1m1 0h1m0 0h1m1 0h1m1 0h1m2 0h1m0 0h1m0 0h1m0 0h1m3 0h1m2 0h1m7 0h1m0 0h1m4 0h1m0 0h1m3 0h1m0 0h1m2 0h1m0 0h1m2 0h1m1 0h1m2 0h1m0 0h1m1 0h1m0 0h1m0 0h1m0 0h1m0 0h1m3 0h1m1 0h1m0 0h1m1 0h1m2 0h1m9 0h1m2 0h1m3 0h1m0 0h1m15 0h1m2 0h1m0 0h1m1 0h1m1 0h1m0 0h1m0 0h1m0 0h1m0 0h1m0 0h1m1 0h1m2 0h1m0 0h1m1 0h1m0 0h1M782 569h1m2 0h1m7 0h1m0 0h1m0 0h1m1 0h1m5 0h1m6 0h1m2 0h1m1 0h1m1 0h1m3 0h1m2 0h1m5 0h1m8 0h1m0 0h1m2 0h1m1 0h1m2 0h1m0 0h1m0 0h1m4 0h1m0 0h1m0 0h1m3 0h1m1 0h1m2 0h1m8 0h1m0 0h1m1 0h1m3 0h1m1 0h1m0 0h1m1 0h1m1 0h1m9 0h1m0 0h1m0 0h1m1 0h1m0 0h1m1 0h1m1 0h1m1 0h1m0 0h1m2 0h1m1 0h1m2 0h1m2 0h1m9 0h1m0 0h1m0 0h1m4 0h1m0 0h1m1 0h1m2 0h1m3 0h1m3 0h1m4 0h1m3 0h1m4 0h1m3 0h1m8 0h1m3 0h1m3 0h1m6 0h1m6 0h1m1 0h1m6 0h1m0 0h1m1 0h1m1 0h1m1 0h1m2 0h1m1 0h1m2 0h1m2 0h1M781 570h1m0 0h1m1 0h1m1 0h1m0 0h1m0 0h1m3 0h1m0 0h1m1 0h1m0 0h1m0 0h1m8 0h1m2 0h1m1 0h1m1 0h1m0 0h1m3 0h1m8 0h1m2 0h1m3 0h1m0 0h1m2 0h1m2 0h1m1 0h1m1 0h1m0 0h1m7 0h1m3 0h1m5 0h1m0 0h1m0 0h1m2 0h1m0 0h1m2 0h1m1 0h1m0 0h1m1 0h1m1 0h1m3 0h1m2 0h1m0 0h1m0 0h1m4 0h1m0 0h1m1 0h1m8 0h1m0 0h1m2 0h1m3 0h1m0 0h1m1 0h1m0 0h1m4 0h1m0 0h1m1 0h1m0 0h1m1 0h1m0 0h1m2 0h1m2 0h1m0 0h1m1 0h1m1 0h1m0 0h1m5 0h1m1 0h1m0 0h1m5 0h1m4 0h1m1 0h1m0 0h1m1 0h1m0 0h1m0 0h1m0 0h1m10 0h1m2 0h1m4 0h1m4 0h1m3 0h1m5 0h1m5 0h1m3 0h1m0 0h1m0 0h1m0 0h1m1 0h1m0 0h1m1 0h1m0 0h1m2 0h1m0 0h1M780 571h1m0 0h1m6 0h1m0 0h1m1 0h1m5 0h1m0 0h1m4 0h1m0 0h1m0 0h1m0 0h1m0 0h1m2 0h1m0 0h1m1 0h1m0 0h1m1 0h1m6 0h1m8 0h1m1 0h1m0 0h1m1 0h1m5 0h1m2 0h1m1 0h1m5 0h1m0 0h1m0 0h1m0 0h1m3 0h1m2 0h1m1 0h1m1 0h1m2 0h1m1 0h1m3 0h1m0 0h1m3 0h1m4 0h1m1 0h1m0 0h1m0 0h1m1 0h1m1 0h1m0 0h1m2 0h1m2 0h1m0 0h1m0 0h1m0 0h1m0 0h1m3 0h1m0 0h1m3 0h1m0 0h1m3 0h1m4 0h1m2 0h1m2 0h1m0 0h1m0 0h1m3 0h1m0 0h1m1 0h1m1 0h1m2 0h1m1 0h1m0 0h1m1 0h1m0 0h1m0 0h1m1 0h1m2 0h1m0 0h1m0 0h1m2 0h1m0 0h1m1 0h1m2 0h1m1 0h1m0 0h1m0 0h1m14 0h1m0 0h1m6 0h1m5 0h1m1 0h1m3 0h1m2 0h1m1 0h1m1 0h1m2 0h1m0 0h1m0 0h1m1 0h1m3 0h1m0 0h1m1 0h1M778 572h1m3 0h1m1 0h1m3 0h1m0 0h1m1 0h1m0 0h1m2 0h1m0 0h1m0 0h1m4 0h1m0 0h1m0 0h1m1 0h1m4 0h1m14 0h1m3 0h1m6 0h1m2 0h1m0 0h1m4 0h1m1 0h1m1 0h1m1 0h1m4 0h1m5 0h1m0 0h1m1 0h1m2 0h1m1 0h1m0 0h1m1 0h1m0 0h1m0 0h1m1 0h1m1 0h1m0 0h1m0 0h1m0 0h1m0 0h1m0 0h1m1 0h1m1 0h1m1 0h1m1 0h1m0 0h1m0 0h1m1 0h1m1 0h1m1 0h1m0 0h1m1 0h1m0 0h1m1 0h1m0 0h1m2 0h1m1 0h1m2 0h1m0 0h1m2 0h1m2 0h1m0 0h1m1 0h1m0 0h1m1 0h1m0 0h1m0 0h1m4 0h1m3 0h1m3 0h1m0 0h1m1 0h1m0 0h1m9 0h1m0 0h1m0 0h1m0 0h1m1 0h1m0 0h1m0 0h1m0 0h1m3 0h1m4 0h1m1 0h1m0 0h1m3 0h1m1 0h1m1 0h1m0 0h1m2 0h1m4 0h1m2 0h1m0 0h1m0 0h1m12 0h1m0 0h1m0 0h1m1 0h1m1 0h1m3 0h1m1 0h1m1 0h1m0 0h1M780 573h1m1 0h1m0 0h1m0 0h1m1 0h1m0 0h1m1 0h1m0 0h1m2 0h1m0 0h1m4 0h1m1 0h1m0 0h1m3 0h1m3 0h1m1 0h1m1 0h1m10 0h1m2 0h1m0 0h1m1 0h1m2 0h1m4 0h1m6 0h1m3 0h1m0 0h1m0 0h1m4 0h1m0 0h1m0 0h1m1 0h1m1 0h1m1 0h1m0 0h1m0 0h1m7 0h1m3 0h1m3 0h1m0 0h1m0 0h1m3 0h1m1 0h1m0 0h1m0 0h1m2 0h1m1 0h1m3 0h1m0 0h1m2 0h1m0 0h1m2 0h1m2 0h1m0 0h1m3 0h1m0 0h1m0 0h1m0 0h1m2 0h1m0 0h1m10 0h1m2 0h1m4 0h1m1 0h1m2 0h1m2 0h1m0 0h1m2 0h1m2 0h1m1 0h1m3 0h1m4 0h1m2 0h1m2 0h1m3 0h1m3 0h1m4 0h1m4 0h1m2 0h1m0 0h1m6 0h1m5 0h1m0 0h1m0 0h1m1 0h1m0 0h1m0 0h1m3 0h1m0 0h1m1 0h1m2 0h1m1 0h1M783 574h1m4 0h1m0 0h1m1 0h1m0 0h1m0 0h1m0 0h1m3 0h1m5 0h1m3 0h1m3 0h1m4 0h1m0 0h1m0 0h1m2 0h1m0 0h1m0 0h1m5 0h1m8 0h1m0 0h1m0 0h1m1 0h1m0 0h1m2 0h1m3 0h1m1 0h1m0 0h1m0 0h1m2 0h1m2 0h1m3 0h1m1 0h1m1 0h1m0 0h1m2 0h1m0 0h1m3 0h1m9 0h1m0 0h1m5 0h1m0 0h1m1 0h1m2 0h1m2 0h1m0 0h1m0 0h1m1 0h1m1 0h1m0 0h1m3 0h1m2 0h1m2 0h1m1 0h1m3 0h1m7 0h1m2 0h1m0 0h1m3 0h1m0 0h1m2 0h1m0 0h1m3 0h1m5 0h1m4 0h1m0 0h1m0 0h1m2 0h1m2 0h1m10 0h1m10 0h1m2 0h1m1 0h1m0 0h1m1 0h1m0 0h1m10 0h1m0 0h1m2 0h1m0 0h1m2 0h1m0 0h1m0 0h1m0 0h1m1 0h1m2 0h1M778 575h1m4 0h1m1 0h1m1 0h1m0 0h1m0 0h1m0 0h1m0 0h1m0 0h1m1 0h1m0 0h1m0 0h1m0 0h1m1 0h1m2 0h1m2 0h1m2 0h1m2 0h1m4 0h1m5 0h1m0 0h1m0 0h1m1 0h1m0 0h1m2 0h1m1 0h1m4 0h1m1 0h1m0 0h1m0 0h1m0 0h1m1 0h1m0 0h1m5 0h1m0 0h1m1 0h1m1 0h1m0 0h1m0 0h1m1 0h1m9 0h1m6 0h1m1 0h1m3 0h1m0 0h1m0 0h1m0 0h1m0 0h1m0 0h1m2 0h1m2 0h1m0 0h1m3 0h1m0 0h1m1 0h1m2 0h1m2 0h1m0 0h1m0 0h1m5 0h1m1 0h1m1 0h1m2 0h1m0 0h1m0 0h1m0 0h1m0 0h1m2 0h1m3 0h1m1 0h1m3 0h1m2 0h1m1 0h1m3 0h1m2 0h1m2 0h1m3 0h1m1 0h1m0 0h1m2 0h1m0 0h1m12 0h1m1 0h1m2 0h1m1 0h1m4 0h1m7 0h1m1 0h1m5 0h1m3 0h1m0 0h1m1 0h1m0 0h1m4 0h1m4 0h1m0 0h1m1 0h1M778 576h1m1 0h1m0 0h1m1 0h1m0 0h1m4 0h1m1 0h1m4 0h1m0 0h1m4 0h1m11 0h1m0 0h1m0 0h1m5 0h1m6 0h1m0 0h1m7 0h1m1 0h1m0 0h1m2 0h1m7 0h1m0 0h1m1 0h1m0 0h1m0 0h1m1 0h1m1 0h1m0 0h1m4 0h1m1 0h1m5 0h1m1 0h1m2 0h1m1 0h1m4 0h1m0 0h1m3 0h1m4 0h1m0 0h1m3 0h1m1 0h1m4 0h1m0 0h1m1 0h1m0 0h1m2 0h1m0 0h1m1 0h1m2 0h1m6 0h1m8 0h1m0 0h1m9 0h1m1 0h1m3 0h1m11 0h1m0 0h1m7 0h1m1 0h1m2 0h1m5 0h1m5 0h1m1 0h1m0 0h1m1 0h1m2 0h1m1 0h1m3 0h1m5 0h1m0 0h1m0 0h1m2 0h1m6 0h1m0 0h1m0 0h1m0 0h1" stroke="#00040c" stroke-width="1" fill="none" opacity=".8" transform="translate(0 0.5)"/><path d="M787.4 473.3L1019.9 473.3" stroke="#d8d040" stroke-width="1" fill="none"/><path d="M787.4 473.3h5M1014.9 473.3h5" stroke="#ff4000" stroke-width="1.2" fill="none"/><rect x="612.5" y="575" width="583.0" height="66" fill="url(#nband)"/><rect x="777" y="574" width="254" height="6" fill="url(#blktoe)"/><rect x="790" y="587" width="228" height="3.5" fill="#ffd000" opacity=".18"/><rect x="790" y="598.5" width="228" height="4" fill="#ffb000" opacity=".16"/><path d="M613 574.5v1M614 574.5v1M619 574.5v1M620 574.5v1M621 574.5v1M624 574.5v2M625 574.5v1M627 574.5v2M628 574.5v1M629 574.5v1M631 574.5v1M632 574.5v1M633 574.5v1M634 574.5v1M635 574.5v1M637 574.5v1M639 574.5v1M640 574.5v1M643 574.5v1M644 574.5v1M645 574.5v2M646 574.5v1M647 574.5v2M649 574.5v1M650 574.5v2M651 574.5v2M652 574.5v1M653 574.5v1M656 574.5v1M658 574.5v1M660 574.5v1M661 574.5v1M662 574.5v1M665 574.5v1M666 574.5v1M667 574.5v2M668 574.5v1M669 574.5v1M670 574.5v1M671 574.5v1M672 574.5v1M673 574.5v1M676 574.5v1M677 574.5v1M678 574.5v2M679 574.5v1M680 574.5v1M681 574.5v1M682 574.5v2M684 574.5v2M685 574.5v1M686 574.5v1M688 574.5v1M689 574.5v1M690 574.5v1M691 574.5v2M692 574.5v2M693 574.5v1M694 574.5v1M696 574.5v1M697 574.5v2M699 574.5v1M700 574.5v1M701 574.5v1M702 574.5v1M703 574.5v2M705 574.5v1M706 574.5v1M707 574.5v1M708 574.5v2M709 574.5v1M711 574.5v1M712 574.5v2M713 574.5v1M714 574.5v1M715 574.5v1M716 574.5v1M720 574.5v1M721 574.5v1M723 574.5v2M724 574.5v1M725 574.5v2M726 574.5v2M727 574.5v2M728 574.5v2M729 574.5v1M730 574.5v2M731 574.5v1M732 574.5v2M733 574.5v1M735 574.5v1M736 574.5v2M738 574.5v1M739 574.5v1M740 574.5v2M741 574.5v1M743 574.5v2M744 574.5v2M745 574.5v1M747 574.5v2M749 574.5v1M751 574.5v1M752 574.5v1M756 574.5v1M757 574.5v2M758 574.5v1M759 574.5v1M760 574.5v1M761 574.5v1M762 574.5v2M764 574.5v1M765 574.5v1M767 574.5v1M768 574.5v2M769 574.5v1M770 574.5v1M771 574.5v1M772 574.5v2M773 574.5v2M774 574.5v2M775 574.5v2M1031 574.5v1M1032 574.5v1M1033 574.5v1M1034 574.5v1M1035 574.5v1M1038 574.5v1M1040 574.5v1M1041 574.5v1M1042 574.5v2M1043 574.5v1M1044 574.5v2M1048 574.5v1M1051 574.5v1M1052 574.5v1M1054 574.5v1M1055 574.5v1M1056 574.5v1M1057 574.5v1M1058 574.5v2M1059 574.5v1M1060 574.5v1M1062 574.5v1M1063 574.5v1M1064 574.5v1M1065 574.5v2M1067 574.5v1M1069 574.5v1M1070 574.5v1M1071 574.5v1M1072 574.5v1M1073 574.5v2M1074 574.5v1M1076 574.5v1M1078 574.5v1M1079 574.5v1M1081 574.5v1M1082 574.5v1M1083 574.5v1M1084 574.5v1M1085 574.5v2M1086 574.5v1M1087 574.5v2M1088 574.5v1M1090 574.5v2M1092 574.5v2M1095 574.5v1M1096 574.5v2M1097 574.5v1M1098 574.5v1M1099 574.5v2M1101 574.5v1M1103 574.5v2M1105 574.5v1M1106 574.5v2M1107 574.5v1M1108 574.5v1M1109 574.5v1M1111 574.5v2M1112 574.5v2M1113 574.5v1M1115 574.5v1M1116 574.5v1M1117 574.5v1M1118 574.5v2M1119 574.5v1M1120 574.5v1M1121 574.5v2M1122 574.5v1M1123 574.5v1M1124 574.5v1M1125 574.5v2M1129 574.5v2M1130 574.5v1M1131 574.5v1M1132 574.5v1M1133 574.5v2M1134 574.5v1M1137 574.5v1M1138 574.5v1M1139 574.5v2M1142 574.5v1M1144 574.5v1M1145 574.5v2M1146 574.5v2M1148 574.5v1M1149 574.5v1M1151 574.5v1M1153 574.5v1M1154 574.5v2M1157 574.5v1M1161 574.5v2M1163 574.5v2M1164 574.5v2M1166 574.5v1M1167 574.5v1M1168 574.5v1M1169 574.5v1M1170 574.5v2M1172 574.5v2M1173 574.5v2M1174 574.5v1M1176 574.5v2M1177 574.5v2M1179 574.5v1M1180 574.5v1M1181 574.5v1M1182 574.5v2M1184 574.5v1M1185 574.5v2M1186 574.5v1M1188 574.5v1M1189 574.5v1M1190 574.5v1" stroke="#000" stroke-width="1" fill="none" transform="translate(0.5 0)"/><path d="M642 624h1m28 0h1m98 0h1m1 0h1m0 0h1m12 0h1m84 0h1m11 0h1m26 0h1m15 0h1m5 0h1m18 0h1m21 0h1m90 0h1m1 0h1m16 0h1m11 0h1m42 0h1m43 0h1M650 625h1m12 0h1m23 0h1m0 0h1m10 0h1m13 0h1m10 0h1m30 0h1m10 0h1m3 0h1m4 0h1m121 0h1m43 0h1m3 0h1m3 0h1m64 0h1m1 0h1m3 0h1m50 0h1m2 0h1m55 0h1m6 0h1m1 0h1m24 0h1M639 626h1m20 0h1m39 0h1m15 0h1m7 0h1m29 0h1m13 0h1m28 0h1m7 0h1m19 0h1m1 0h1m1 0h1m11 0h1m2 0h1m4 0h1m12 0h1m1 0h1m9 0h1m4 0h1m0 0h1m0 0h1m25 0h1m12 0h1m19 0h1m14 0h1m9 0h1m11 0h1m0 0h1m29 0h1m10 0h1m29 0h1m14 0h1m19 0h1m0 0h1m9 0h1m52 0h1m17 0h1m15 0h1m10 0h1M613 627h1m2 0h1m19 0h1m10 0h1m9 0h1m8 0h1m6 0h1m13 0h1m21 0h1m0 0h1m3 0h1m3 0h1m8 0h1m6 0h1m26 0h1m21 0h1m1 0h1m5 0h1m3 0h1m31 0h1m46 0h1m2 0h1m5 0h1m30 0h1m5 0h1m5 0h1m37 0h1m4 0h1m26 0h1m6 0h1m11 0h1m31 0h1m3 0h1m1 0h1m6 0h1m12 0h1m5 0h1m15 0h1m24 0h1m2 0h1m23 0h1m6 0h1m1 0h1m7 0h1m4 0h1m18 0h1M619 628h1m12 0h1m2 0h1m82 0h1m6 0h1m4 0h1m9 0h1m5 0h1m7 0h1m0 0h1m19 0h1m11 0h1m8 0h1m6 0h1m3 0h1m23 0h1m2 0h1m5 0h1m6 0h1m3 0h1m2 0h1m20 0h1m9 0h1m4 0h1m15 0h1m12 0h1m16 0h1m13 0h1m16 0h1m1 0h1m2 0h1m0 0h1m1 0h1m11 0h1m10 0h1m0 0h1m33 0h1m11 0h1m34 0h1m1 0h1m19 0h1m3 0h1m1 0h1m3 0h1m6 0h1m2 0h1m4 0h1m8 0h1m6 0h1m6 0h1m14 0h1m5 0h1m3 0h1M613 629h1m3 0h1m1 0h1m0 0h1m13 0h1m6 0h1m2 0h1m5 0h1m21 0h1m23 0h1m7 0h1m0 0h1m5 0h1m0 0h1m1 0h1m1 0h1m0 0h1m9 0h1m0 0h1m0 0h1m7 0h1m12 0h1m11 0h1m8 0h1m0 0h1m18 0h1m4 0h1m12 0h1m4 0h1m7 0h1m0 0h1m9 0h1m1 0h1m6 0h1m12 0h1m3 0h1m1 0h1m0 0h1m8 0h1m9 0h1m7 0h1m0 0h1m0 0h1m2 0h1m0 0h1m0 0h1m11 0h1m0 0h1m1 0h1m5 0h1m20 0h1m4 0h1m14 0h1m4 0h1m2 0h1m5 0h1m22 0h1m22 0h1m3 0h1m3 0h1m5 0h1m4 0h1m6 0h1m1 0h1m6 0h1m0 0h1m0 0h1m4 0h1m10 0h1m8 0h1m5 0h1m1 0h1m10 0h1m2 0h1m4 0h1m5 0h1m7 0h1m10 0h1m0 0h1M614 630h1m0 0h1m14 0h1m0 0h1m14 0h1m5 0h1m4 0h1m5 0h1m9 0h1m14 0h1m9 0h1m9 0h1m23 0h1m7 0h1m4 0h1m13 0h1m1 0h1m1 0h1m19 0h1m13 0h1m16 0h1m36 0h1m0 0h1m5 0h1m4 0h1m3 0h1m1 0h1m5 0h1m2 0h1m3 0h1m0 0h1m4 0h1m14 0h1m7 0h1m1 0h1m5 0h1m58 0h1m6 0h1m0 0h1m0 0h1m13 0h1m3 0h1m14 0h1m0 0h1m0 0h1m21 0h1m4 0h1m5 0h1m27 0h1m2 0h1m4 0h1m1 0h1m1 0h1m6 0h1m11 0h1m7 0h1m18 0h1m9 0h1m1 0h1m8 0h1m2 0h1m0 0h1m3 0h1m3 0h1m1 0h1m1 0h1m13 0h1M622 631h1m8 0h1m5 0h1m9 0h1m0 0h1m1 0h1m1 0h1m0 0h1m0 0h1m4 0h1m2 0h1m0 0h1m7 0h1m10 0h1m10 0h1m3 0h1m14 0h1m2 0h1m9 0h1m12 0h1m0 0h1m2 0h1m8 0h1m12 0h1m6 0h1m6 0h1m4 0h1m0 0h1m13 0h1m2 0h1m0 0h1m10 0h1m7 0h1m11 0h1m5 0h1m13 0h1m24 0h1m8 0h1m9 0h1m5 0h1m0 0h1m0 0h1m4 0h1m0 0h1m10 0h1m0 0h1m2 0h1m0 0h1m6 0h1m8 0h1m16 0h1m1 0h1m5 0h1m10 0h1m1 0h1m2 0h1m0 0h1m3 0h1m0 0h1m5 0h1m9 0h1m28 0h1m0 0h1m0 0h1m1 0h1m0 0h1m2 0h1m0 0h1m3 0h1m3 0h1m1 0h1m5 0h1m4 0h1m7 0h1m7 0h1m26 0h1m1 0h1m7 0h1m3 0h1m1 0h1m4 0h1m2 0h1m0 0h1m2 0h1m3 0h1m0 0h1m12 0h1m2 0h1m14 0h1m0 0h1m3 0h1m4 0h1M620 632h1m17 0h1m0 0h1m2 0h1m4 0h1m18 0h1m2 0h1m0 0h1m2 0h1m4 0h1m1 0h1m9 0h1m6 0h1m9 0h1m2 0h1m14 0h1m4 0h1m3 0h1m5 0h1m3 0h1m3 0h1m9 0h1m11 0h1m2 0h1m4 0h1m1 0h1m4 0h1m2 0h1m3 0h1m1 0h1m11 0h1m4 0h1m20 0h1m0 0h1m3 0h1m6 0h1m23 0h1m1 0h1m5 0h1m1 0h1m4 0h1m9 0h1m4 0h1m3 0h1m10 0h1m8 0h1m7 0h1m4 0h1m9 0h1m1 0h1m0 0h1m16 0h1m1 0h1m1 0h1m2 0h1m0 0h1m1 0h1m0 0h1m6 0h1m2 0h1m4 0h1m5 0h1m26 0h1m3 0h1m2 0h1m3 0h1m18 0h1m10 0h1m9 0h1m14 0h1m9 0h1m8 0h1m0 0h1m1 0h1m15 0h1m1 0h1m2 0h1m5 0h1m5 0h1m20 0h1m3 0h1m0 0h1m1 0h1m0 0h1m10 0h1m5 0h1M618 633h1m0 0h1m1 0h1m10 0h1m2 0h1m0 0h1m1 0h1m6 0h1m0 0h1m2 0h1m1 0h1m1 0h1m5 0h1m1 0h1m1 0h1m2 0h1m0 0h1m1 0h1m2 0h1m2 0h1m0 0h1m0 0h1m2 0h1m3 0h1m1 0h1m5 0h1m2 0h1m11 0h1m4 0h1m13 0h1m0 0h1m5 0h1m13 0h1m3 0h1m6 0h1m1 0h1m12 0h1m2 0h1m1 0h1m0 0h1m1 0h1m0 0h1m5 0h1m1 0h1m0 0h1m4 0h1m5 0h1m4 0h1m0 0h1m1 0h1m2 0h1m1 0h1m4 0h1m1 0h1m2 0h1m1 0h1m4 0h1m5 0h1m2 0h1m9 0h1m0 0h1m5 0h1m3 0h1m4 0h1m4 0h1m7 0h1m0 0h1m1 0h1m1 0h1m3 0h1m3 0h1m3 0h1m3 0h1m2 0h1m1 0h1m4 0h1m2 0h1m1 0h1m7 0h1m0 0h1m1 0h1m0 0h1m2 0h1m2 0h1m1 0h1m14 0h1m5 0h1m7 0h1m2 0h1m8 0h1m8 0h1m0 0h1m0 0h1m2 0h1m7 0h1m11 0h1m1 0h1m5 0h1m7 0h1m2 0h1m0 0h1m0 0h1m3 0h1m4 0h1m5 0h1m2 0h1m6 0h1m14 0h1m0 0h1m7 0h1m6 0h1m1 0h1m10 0h1m9 0h1m1 0h1m4 0h1m2 0h1m3 0h1m4 0h1m2 0h1m13 0h1m2 0h1m8 0h1m1 0h1m9 0h1m1 0h1m0 0h1m13 0h1m5 0h1M615 634h1m6 0h1m0 0h1m0 0h1m2 0h1m0 0h1m0 0h1m5 0h1m2 0h1m10 0h1m2 0h1m1 0h1m0 0h1m7 0h1m0 0h1m1 0h1m5 0h1m2 0h1m1 0h1m11 0h1m2 0h1m2 0h1m1 0h1m1 0h1m0 0h1m2 0h1m8 0h1m4 0h1m2 0h1m8 0h1m4 0h1m6 0h1m2 0h1m2 0h1m0 0h1m2 0h1m2 0h1m1 0h1m0 0h1m3 0h1m2 0h1m7 0h1m1 0h1m5 0h1m5 0h1m4 0h1m8 0h1m4 0h1m8 0h1m37 0h1m2 0h1m3 0h1m0 0h1m0 0h1m1 0h1m9 0h1m1 0h1m4 0h1m14 0h1m0 0h1m3 0h1m5 0h1m0 0h1m2 0h1m5 0h1m5 0h1m7 0h1m0 0h1m0 0h1m0 0h1m1 0h1m3 0h1m2 0h1m8 0h1m2 0h1m10 0h1m0 0h1m0 0h1m0 0h1m0 0h1m0 0h1m8 0h1m1 0h1m0 0h1m0 0h1m0 0h1m4 0h1m1 0h1m1 0h1m17 0h1m0 0h1m0 0h1m9 0h1m0 0h1m13 0h1m1 0h1m9 0h1m2 0h1m6 0h1m1 0h1m6 0h1m1 0h1m4 0h1m0 0h1m6 0h1m1 0h1m0 0h1m4 0h1m0 0h1m5 0h1m2 0h1m3 0h1m7 0h1m0 0h1m6 0h1m4 0h1m12 0h1m0 0h1m2 0h1m1 0h1m5 0h1m1 0h1m2 0h1m0 0h1m0 0h1m6 0h1m12 0h1m1 0h1m10 0h1m1 0h1M616 635h1m3 0h1m1 0h1m1 0h1m3 0h1m1 0h1m5 0h1m7 0h1m4 0h1m5 0h1m3 0h1m3 0h1m1 0h1m0 0h1m6 0h1m4 0h1m0 0h1m6 0h1m12 0h1m5 0h1m17 0h1m2 0h1m0 0h1m5 0h1m5 0h1m0 0h1m4 0h1m2 0h1m0 0h1m4 0h1m1 0h1m3 0h1m6 0h1m1 0h1m3 0h1m2 0h1m1 0h1m3 0h1m0 0h1m0 0h1m0 0h1m4 0h1m0 0h1m0 0h1m6 0h1m8 0h1m2 0h1m1 0h1m0 0h1m1 0h1m1 0h1m6 0h1m1 0h1m0 0h1m6 0h1m1 0h1m1 0h1m1 0h1m0 0h1m0 0h1m4 0h1m0 0h1m6 0h1m0 0h1m2 0h1m9 0h1m3 0h1m3 0h1m0 0h1m0 0h1m4 0h1m0 0h1m2 0h1m4 0h1m6 0h1m0 0h1m3 0h1m7 0h1m5 0h1m3 0h1m0 0h1m0 0h1m2 0h1m2 0h1m4 0h1m1 0h1m0 0h1m7 0h1m0 0h1m0 0h1m0 0h1m1 0h1m2 0h1m3 0h1m3 0h1m4 0h1m9 0h1m5 0h1m0 0h1m2 0h1m2 0h1m8 0h1m2 0h1m3 0h1m1 0h1m3 0h1m5 0h1m22 0h1m0 0h1m0 0h1m1 0h1m3 0h1m0 0h1m5 0h1m0 0h1m4 0h1m0 0h1m0 0h1m0 0h1m6 0h1m10 0h1m1 0h1m3 0h1m7 0h1m0 0h1m1 0h1m5 0h1m0 0h1m0 0h1m3 0h1m1 0h1m3 0h1m3 0h1m0 0h1m0 0h1m2 0h1m9 0h1m25 0h1m10 0h1m2 0h1m1 0h1M614 636h1m2 0h1m17 0h1m8 0h1m0 0h1m4 0h1m1 0h1m1 0h1m5 0h1m2 0h1m5 0h1m4 0h1m0 0h1m16 0h1m4 0h1m0 0h1m3 0h1m3 0h1m1 0h1m2 0h1m2 0h1m1 0h1m1 0h1m1 0h1m2 0h1m3 0h1m0 0h1m4 0h1m8 0h1m1 0h1m0 0h1m5 0h1m0 0h1m2 0h1m0 0h1m0 0h1m5 0h1m7 0h1m7 0h1m2 0h1m0 0h1m2 0h1m10 0h1m3 0h1m1 0h1m4 0h1m0 0h1m1 0h1m1 0h1m0 0h1m3 0h1m2 0h1m7 0h1m0 0h1m0 0h1m6 0h1m1 0h1m2 0h1m0 0h1m1 0h1m0 0h1m8 0h1m0 0h1m0 0h1m1 0h1m2 0h1m4 0h1m3 0h1m0 0h1m8 0h1m3 0h1m2 0h1m0 0h1m1 0h1m2 0h1m7 0h1m1 0h1m0 0h1m0 0h1m0 0h1m0 0h1m8 0h1m1 0h1m0 0h1m5 0h1m3 0h1m3 0h1m2 0h1m2 0h1m1 0h1m3 0h1m3 0h1m5 0h1m0 0h1m1 0h1m0 0h1m1 0h1m8 0h1m1 0h1m4 0h1m4 0h1m3 0h1m1 0h1m0 0h1m2 0h1m4 0h1m0 0h1m0 0h1m0 0h1m4 0h1m12 0h1m8 0h1m0 0h1m7 0h1m0 0h1m0 0h1m0 0h1m0 0h1m0 0h1m2 0h1m1 0h1m2 0h1m0 0h1m6 0h1m1 0h1m3 0h1m9 0h1m1 0h1m8 0h1m0 0h1m9 0h1m1 0h1m0 0h1m2 0h1m2 0h1m3 0h1m5 0h1m11 0h1m0 0h1m1 0h1m1 0h1m8 0h1m6 0h1m0 0h1m0 0h1m3 0h1m3 0h1m4 0h1m3 0h1m7 0h1m7 0h1m1 0h1m4 0h1m1 0h1M614 637h1m0 0h1m2 0h1m0 0h1m0 0h1m0 0h1m0 0h1m0 0h1m5 0h1m3 0h1m0 0h1m3 0h1m7 0h1m1 0h1m3 0h1m0 0h1m1 0h1m1 0h1m5 0h1m0 0h1m3 0h1m2 0h1m1 0h1m0 0h1m2 0h1m2 0h1m2 0h1m5 0h1m5 0h1m1 0h1m4 0h1m1 0h1m0 0h1m11 0h1m2 0h1m1 0h1m0 0h1m0 0h1m8 0h1m15 0h1m6 0h1m1 0h1m0 0h1m0 0h1m1 0h1m0 0h1m4 0h1m0 0h1m1 0h1m4 0h1m8 0h1m0 0h1m4 0h1m0 0h1m0 0h1m3 0h1m7 0h1m0 0h1m0 0h1m0 0h1m0 0h1m0 0h1m0 0h1m0 0h1m3 0h1m0 0h1m1 0h1m0 0h1m1 0h1m3 0h1m3 0h1m6 0h1m1 0h1m1 0h1m7 0h1m3 0h1m8 0h1m3 0h1m3 0h1m7 0h1m4 0h1m6 0h1m1 0h1m1 0h1m0 0h1m1 0h1m0 0h1m5 0h1m3 0h1m1 0h1m0 0h1m0 0h1m2 0h1m1 0h1m4 0h1m2 0h1m10 0h1m1 0h1m1 0h1m3 0h1m1 0h1m1 0h1m5 0h1m0 0h1m0 0h1m0 0h1m11 0h1m1 0h1m0 0h1m1 0h1m2 0h1m0 0h1m5 0h1m0 0h1m3 0h1m7 0h1m0 0h1m5 0h1m1 0h1m3 0h1m1 0h1m10 0h1m3 0h1m0 0h1m0 0h1m4 0h1m6 0h1m0 0h1m6 0h1m1 0h1m0 0h1m4 0h1m0 0h1m0 0h1m4 0h1m1 0h1m0 0h1m1 0h1m1 0h1m0 0h1m5 0h1m2 0h1m11 0h1m0 0h1m7 0h1m1 0h1m3 0h1m4 0h1m6 0h1m5 0h1m2 0h1m3 0h1m7 0h1m7 0h1m1 0h1m2 0h1m1 0h1m1 0h1m3 0h1m4 0h1m1 0h1m4 0h1m0 0h1m0 0h1m1 0h1m10 0h1m1 0h1m2 0h1M615 638h1m4 0h1m0 0h1m3 0h1m1 0h1m6 0h1m1 0h1m3 0h1m0 0h1m5 0h1m10 0h1m2 0h1m2 0h1m0 0h1m1 0h1m0 0h1m9 0h1m0 0h1m3 0h1m2 0h1m8 0h1m0 0h1m1 0h1m1 0h1m1 0h1m5 0h1m5 0h1m1 0h1m3 0h1m0 0h1m3 0h1m1 0h1m1 0h1m1 0h1m0 0h1m0 0h1m0 0h1m6 0h1m1 0h1m5 0h1m2 0h1m0 0h1m0 0h1m1 0h1m0 0h1m5 0h1m0 0h1m0 0h1m3 0h1m0 0h1m5 0h1m3 0h1m10 0h1m5 0h1m1 0h1m1 0h1m1 0h1m4 0h1m6 0h1m4 0h1m2 0h1m0 0h1m3 0h1m0 0h1m0 0h1m3 0h1m7 0h1m6 0h1m4 0h1m2 0h1m1 0h1m7 0h1m1 0h1m3 0h1m1 0h1m3 0h1m1 0h1m2 0h1m0 0h1m0 0h1m4 0h1m3 0h1m0 0h1m9 0h1m0 0h1m7 0h1m5 0h1m5 0h1m0 0h1m5 0h1m0 0h1m7 0h1m0 0h1m4 0h1m6 0h1m1 0h1m0 0h1m0 0h1m7 0h1m4 0h1m5 0h1m0 0h1m1 0h1m0 0h1m1 0h1m1 0h1m1 0h1m1 0h1m1 0h1m5 0h1m0 0h1m2 0h1m4 0h1m0 0h1m2 0h1m4 0h1m1 0h1m1 0h1m0 0h1m1 0h1m2 0h1m4 0h1m6 0h1m0 0h1m0 0h1m2 0h1m16 0h1m1 0h1m10 0h1m2 0h1m1 0h1m2 0h1m4 0h1m4 0h1m0 0h1m2 0h1m1 0h1m4 0h1m4 0h1m1 0h1m0 0h1m0 0h1m2 0h1m1 0h1m0 0h1m1 0h1m6 0h1m2 0h1m4 0h1m0 0h1m0 0h1m1 0h1m6 0h1m0 0h1m1 0h1m1 0h1m5 0h1m3 0h1m1 0h1m0 0h1m0 0h1m12 0h1m0 0h1m4 0h1m0 0h1m1 0h1m1 0h1m1 0h1M620 639h1m0 0h1m2 0h1m0 0h1m2 0h1m1 0h1m7 0h1m1 0h1m6 0h1m12 0h1m0 0h1m2 0h1m2 0h1m9 0h1m7 0h1m0 0h1m0 0h1m10 0h1m11 0h1m0 0h1m1 0h1m3 0h1m8 0h1m1 0h1m1 0h1m0 0h1m2 0h1m3 0h1m0 0h1m8 0h1m0 0h1m0 0h1m0 0h1m1 0h1m0 0h1m2 0h1m3 0h1m3 0h1m1 0h1m0 0h1m0 0h1m3 0h1m3 0h1m0 0h1m2 0h1m1 0h1m12 0h1m0 0h1m0 0h1m1 0h1m1 0h1m9 0h1m0 0h1m0 0h1m1 0h1m7 0h1m0 0h1m0 0h1m0 0h1m0 0h1m1 0h1m3 0h1m10 0h1m1 0h1m0 0h1m1 0h1m5 0h1m0 0h1m5 0h1m2 0h1m13 0h1m0 0h1m1 0h1m2 0h1m0 0h1m0 0h1m8 0h1m0 0h1m0 0h1m0 0h1m3 0h1m2 0h1m1 0h1m0 0h1m1 0h1m13 0h1m0 0h1m2 0h1m0 0h1m20 0h1m1 0h1m1 0h1m0 0h1m0 0h1m2 0h1m4 0h1m2 0h1m0 0h1m0 0h1m2 0h1m0 0h1m1 0h1m3 0h1m2 0h1m1 0h1m0 0h1m4 0h1m1 0h1m0 0h1m4 0h1m2 0h1m3 0h1m6 0h1m2 0h1m1 0h1m0 0h1m7 0h1m2 0h1m0 0h1m6 0h1m3 0h1m6 0h1m0 0h1m0 0h1m0 0h1m5 0h1m1 0h1m0 0h1m0 0h1m3 0h1m0 0h1m10 0h1m0 0h1m0 0h1m2 0h1m0 0h1m0 0h1m1 0h1m0 0h1m3 0h1m2 0h1m1 0h1m2 0h1m6 0h1m1 0h1m0 0h1m1 0h1m3 0h1m2 0h1m6 0h1m0 0h1m1 0h1m6 0h1m3 0h1m0 0h1m1 0h1m0 0h1m1 0h1m5 0h1m3 0h1m5 0h1m1 0h1m0 0h1m7 0h1m9 0h1m1 0h1m1 0h1m0 0h1M613 640h1m1 0h1m5 0h1m1 0h1m7 0h1m4 0h1m4 0h1m1 0h1m0 0h1m7 0h1m9 0h1m1 0h1m4 0h1m1 0h1m0 0h1m6 0h1m0 0h1m3 0h1m0 0h1m3 0h1m1 0h1m3 0h1m0 0h1m0 0h1m0 0h1m0 0h1m2 0h1m0 0h1m0 0h1m2 0h1m1 0h1m2 0h1m1 0h1m4 0h1m5 0h1m3 0h1m5 0h1m0 0h1m0 0h1m4 0h1m0 0h1m7 0h1m0 0h1m1 0h1m1 0h1m3 0h1m2 0h1m1 0h1m1 0h1m6 0h1m3 0h1m5 0h1m1 0h1m2 0h1m8 0h1m7 0h1m0 0h1m1 0h1m2 0h1m1 0h1m6 0h1m2 0h1m0 0h1m2 0h1m4 0h1m1 0h1m13 0h1m1 0h1m5 0h1m1 0h1m2 0h1m2 0h1m0 0h1m12 0h1m0 0h1m3 0h1m4 0h1m4 0h1m3 0h1m5 0h1m0 0h1m0 0h1m1 0h1m0 0h1m0 0h1m1 0h1m0 0h1m0 0h1m4 0h1m0 0h1m3 0h1m2 0h1m0 0h1m2 0h1m0 0h1m0 0h1m8 0h1m5 0h1m8 0h1m5 0h1m1 0h1m2 0h1m3 0h1m0 0h1m1 0h1m10 0h1m2 0h1m8 0h1m0 0h1m1 0h1m0 0h1m2 0h1m4 0h1m3 0h1m4 0h1m1 0h1m5 0h1m0 0h1m5 0h1m4 0h1m3 0h1m1 0h1m1 0h1m7 0h1m2 0h1m2 0h1m7 0h1m1 0h1m5 0h1m3 0h1m0 0h1m6 0h1m0 0h1m1 0h1m0 0h1m0 0h1m1 0h1m1 0h1m0 0h1m0 0h1m2 0h1m4 0h1m2 0h1m1 0h1m1 0h1m1 0h1m0 0h1m8 0h1m3 0h1m13 0h1m3 0h1m4 0h1m3 0h1m3 0h1m3 0h1m6 0h1m2 0h1m2 0h1m1 0h1m0 0h1m1 0h1m0 0h1m1 0h1m0 0h1" stroke="#0020c8" stroke-width="1" fill="none" opacity=".5" transform="translate(0 0.5)"/></g><g opacity=".14"><path d="M670.5 446.5V640.6" stroke="#9aa0a8" stroke-width="1" stroke-dasharray="2.5 1.5" fill="none"/><path d="M729.5 446.5V640.6" stroke="#9aa0a8" stroke-width="1" stroke-dasharray="2.5 1.5" fill="none"/><path d="M787.5 446.5V640.6" stroke="#9aa0a8" stroke-width="1" stroke-dasharray="2.5 1.5" fill="none"/><path d="M845.5 446.5V640.6" stroke="#9aa0a8" stroke-width="1" stroke-dasharray="2.5 1.5" fill="none"/><path d="M904.5 446.5V640.6" stroke="#9aa0a8" stroke-width="1" stroke-dasharray="2.5 1.5" fill="none"/><path d="M962.5 446.5V640.6" stroke="#9aa0a8" stroke-width="1" stroke-dasharray="2.5 1.5" fill="none"/><path d="M1020.5 446.5V640.6" stroke="#9aa0a8" stroke-width="1" stroke-dasharray="2.5 1.5" fill="none"/><path d="M1078.5 446.5V640.6" stroke="#9aa0a8" stroke-width="1" stroke-dasharray="2.5 1.5" fill="none"/><path d="M1137.5 446.5V640.6" stroke="#9aa0a8" stroke-width="1" stroke-dasharray="2.5 1.5" fill="none"/><path d="M612.5 465.5H1195.5" stroke="#9aa0a8" stroke-width="1" stroke-dasharray="2.5 1.5" fill="none"/><path d="M612.5 485.5H1195.5" stroke="#9aa0a8" stroke-width="1" stroke-dasharray="2.5 1.5" fill="none"/><path d="M612.5 504.5H1195.5" stroke="#9aa0a8" stroke-width="1" stroke-dasharray="2.5 1.5" fill="none"/><path d="M612.5 524.5H1195.5" stroke="#9aa0a8" stroke-width="1" stroke-dasharray="2.5 1.5" fill="none"/><path d="M612.5 543.5H1195.5" stroke="#9aa0a8" stroke-width="1" stroke-dasharray="2.5 1.5" fill="none"/><path d="M612.5 562.5H1195.5" stroke="#9aa0a8" stroke-width="1" stroke-dasharray="2.5 1.5" fill="none"/><path d="M612.5 582.5H1195.5" stroke="#9aa0a8" stroke-width="1" stroke-dasharray="2.5 1.5" fill="none"/><path d="M612.5 601.5H1195.5" stroke="#9aa0a8" stroke-width="1" stroke-dasharray="2.5 1.5" fill="none"/><path d="M612.5 621.5H1195.5" stroke="#9aa0a8" stroke-width="1" stroke-dasharray="2.5 1.5" fill="none"/></g><path d="M612.5,570.6 L614.3,571.3 L616.2,571.2 L618.0,571.4 L619.8,571.9 L621.7,571.7 L623.5,571.0 L625.4,571.6 L627.2,571.2 L629.0,572.4 L630.9,572.1 L632.7,572.4 L634.5,571.8 L636.4,571.4 L638.2,570.3 L640.1,570.1 L641.9,570.3 L643.7,570.5 L645.6,569.8 L647.4,570.2 L649.2,571.5 L651.1,571.5 L652.9,571.2 L654.8,570.7 L656.6,572.1 L658.4,571.7 L660.3,571.6 L662.1,570.6 L663.9,570.9 L665.8,570.9 L667.6,571.0 L669.4,570.7 L671.3,570.3 L673.1,571.0 L675.0,570.7 L676.8,570.2 L678.6,569.3 L680.5,570.5 L682.3,571.1 L684.1,572.0 L686.0,571.8 L687.8,571.8 L689.7,571.9 L691.5,571.7 L693.3,572.0 L695.2,571.2 L697.0,570.9 L698.8,570.1 L700.7,570.4 L702.5,570.1 L704.4,571.1 L706.2,571.4 L708.0,571.4 L709.9,571.6 L711.7,572.1 L713.5,572.5 L715.4,571.6 L717.2,571.2 L719.1,569.8 L720.9,569.9 L722.7,569.9 L724.6,572.4 L726.4,572.4 L728.2,572.9 L730.1,573.1 L731.9,574.6 L733.7,572.4 L735.6,571.7 L737.4,570.7 L739.3,572.6 L741.1,571.9 L742.9,571.4 L744.8,570.7 L746.6,571.7 L748.4,572.5 L750.3,572.5 L752.1,571.8 L754.0,571.9 L755.8,572.3 L757.6,572.1 L759.5,571.2 L761.3,570.5 L763.1,570.3 L765.0,570.3 L766.8,569.8 L768.7,569.3 L770.5,570.1 L772.3,570.4 L774.2,570.4 L776.0,569.9 L776.6 566 C777.4 545 779 520 780.6 505 C782.3 490 784.5 477 787.4 472.3 L1019.9 472.3 C1022.4 477 1024.7 490 1026.5 505 C1028.1 520 1029.8 545 1030.7 566 L1031.2,572.6 L1033.0,571.2 L1034.9,570.2 L1036.7,569.9 L1038.6,570.2 L1040.4,570.7 L1042.3,570.7 L1044.1,570.5 L1046.0,570.1 L1047.8,570.7 L1049.7,570.7 L1051.5,570.4 L1053.4,569.8 L1055.2,569.8 L1057.0,570.5 L1058.9,571.0 L1060.7,569.7 L1062.6,569.7 L1064.4,569.8 L1066.3,571.1 L1068.1,570.6 L1070.0,568.9 L1071.8,568.5 L1073.7,569.3 L1075.5,572.2 L1077.4,574.4 L1079.2,573.4 L1081.0,572.2 L1082.9,571.4 L1084.7,571.1 L1086.6,572.0 L1088.4,571.2 L1090.3,572.1 L1092.1,570.4 L1094.0,571.1 L1095.8,570.8 L1097.7,572.1 L1099.5,571.3 L1101.4,571.3 L1103.2,571.7 L1105.0,571.7 L1106.9,571.9 L1108.7,571.1 L1110.6,571.5 L1112.4,571.1 L1114.3,571.7 L1116.1,572.6 L1118.0,573.1 L1119.8,572.4 L1121.7,571.1 L1123.5,570.9 L1125.3,571.7 L1127.2,573.0 L1129.0,572.2 L1130.9,569.9 L1132.7,568.9 L1134.6,569.8 L1136.4,570.7 L1138.3,570.9 L1140.1,571.0 L1142.0,571.8 L1143.8,572.1 L1145.7,572.7 L1147.5,571.3 L1149.3,571.5 L1151.2,571.0 L1153.0,571.0 L1154.9,571.4 L1156.7,570.2 L1158.6,570.3 L1160.4,571.1 L1162.3,572.8 L1164.1,573.8 L1166.0,573.1 L1167.8,573.0 L1169.7,572.1 L1171.5,571.6 L1173.3,571.7 L1175.2,572.3 L1177.0,572.1 L1178.9,571.0 L1180.7,571.5 L1182.6,571.1 L1184.4,571.1 L1186.3,569.9 L1188.1,569.7 L1190.0,570.2 L1191.8,571.2 L1193.7,571.5 L1195.5,570.7" fill="none" stroke="#b4b4b4" stroke-width="0.9"/><rect x="612.5" y="446.5" width="583.0" height="194.1" fill="none" stroke="#3a4868" stroke-width="1.6"/></svg>
<div class="yl" style="left:20.5px;top:154.3px">0.00dBm</div><div class="yl" style="left:19.3px;top:174.2px">-10.00dBm</div><div class="yl" style="left:19.3px;top:194.1px">-20.00dBm</div><div class="yl" style="left:19.3px;top:214.0px">-30.00dBm</div><div class="yl" style="left:19.3px;top:233.9px">-40.00dBm</div><div class="yl" style="left:19.3px;top:253.8px">-50.00dBm</div><div class="yl" style="left:19.3px;top:273.7px">-60.00dBm</div><div class="yl" style="left:19.3px;top:293.6px">-70.00dBm</div><div class="yl" style="left:19.3px;top:313.5px">-80.00dBm</div><div class="yl" style="left:19.3px;top:333.4px">-90.00dBm</div><div class="yl" style="left:19.3px;top:353.3px">-100.00dBm</div>
<div class="yl" style="left:422.2px;top:154.3px">2.31dBm</div><div class="yl" style="left:421.0px;top:174.2px">-7.69dBm</div><div class="yl" style="left:421.0px;top:194.1px">-17.69dBm</div><div class="yl" style="left:421.0px;top:214.0px">-27.69dBm</div><div class="yl" style="left:421.0px;top:233.9px">-37.69dBm</div><div class="yl" style="left:421.0px;top:253.8px">-47.69dBm</div><div class="yl" style="left:421.0px;top:273.7px">-57.69dBm</div><div class="yl" style="left:421.0px;top:293.6px">-67.69dBm</div><div class="yl" style="left:421.0px;top:313.5px">-77.69dBm</div><div class="yl" style="left:421.0px;top:333.4px">-87.69dBm</div><div class="yl" style="left:421.0px;top:353.3px">-97.69dBm</div>
<div class="yl" style="left:823.2px;top:154.3px">52.12MHz</div><div class="yl" style="left:823.2px;top:174.2px">41.78MHz</div><div class="yl" style="left:823.2px;top:194.1px">31.44MHz</div><div class="yl" style="left:823.2px;top:214.0px">21.10MHz</div><div class="yl" style="left:823.2px;top:233.9px">10.76MHz</div><div class="yl" style="left:823.2px;top:253.8px">421.87kHz</div><div class="yl" style="left:822.0px;top:273.7px">-9.92MHz</div><div class="yl" style="left:822.0px;top:293.6px">-20.26MHz</div><div class="yl" style="left:822.0px;top:313.5px">-30.60MHz</div><div class="yl" style="left:822.0px;top:333.4px">-40.93MHz</div><div class="yl" style="left:822.0px;top:353.3px">-51.27MHz</div>
<div class="yl" style="left:622.3px;top:441.4px;font-size:13px;color:#b4c0dc">2.31dBm</div><div class="yl" style="left:623.3px;top:460.8px;font-size:13px;color:#b4c0dc">-7.69dBm</div><div class="yl" style="left:623.3px;top:480.3px;font-size:13px;color:#b4c0dc">-17.69dBm</div><div class="yl" style="left:623.3px;top:499.7px;font-size:13px;color:#b4c0dc">-27.69dBm</div><div class="yl" style="left:623.3px;top:519.2px;font-size:13px;color:#b4c0dc">-37.69dBm</div><div class="yl" style="left:623.3px;top:538.6px;font-size:13px;color:#b4c0dc">-47.69dBm</div><div class="yl" style="left:623.3px;top:558.0px;font-size:13px;color:#b4c0dc">-57.69dBm</div><div class="yl" style="left:623.3px;top:577.5px;font-size:13px;color:#b4c0dc;opacity:.88;color:#aab4d0">-67.69dBm</div><div class="yl" style="left:623.3px;top:596.9px;font-size:13px;color:#b4c0dc;opacity:.88;color:#aab4d0">-77.69dBm</div><div class="yl" style="left:623.3px;top:616.4px;font-size:13px;color:#b4c0dc;opacity:.88;color:#aab4d0">-87.69dBm</div><div class="yl" style="left:623.3px;top:635.8px;font-size:13px;color:#b4c0dc">-97.69dBm</div>
<div class="bl" style="left:11px;top:372px">中心频率 <span class="lt">5.00GHz</span></div><div class="bl" style="right:875.0px;top:372px">频宽 <span class="lt">200.00MHz</span></div>
<div class="bl" style="left:412px;top:372px">中心频率 <span class="lt">0.00Hz</span></div><div class="bl" style="right:477.0px;top:372px">测量时间 <span class="lt">50.00ms</span></div>
<div class="bl" style="left:813px;top:372px">中心频率 <span class="lt">0.00Hz</span></div><div class="bl" style="right:75.5px;top:372px">测量时间 <span class="lt">50.00ms</span></div>
<div class="bl2" style="left:40px;top:651.8px">中心频率 5.00GHz</div><div class="bl2" style="left:216.5px;width:200px;text-align:center;top:651.5px">分辨率带宽 1.89MHz</div><div class="bl2" style="right:674.5px;top:651.5px">频宽 200.00MHz</div>
<div class="bl2" style="left:613px;top:651.5px">中心频率 5.00GHz</div><div class="bl2" style="left:804px;width:200px;text-align:center;top:651.5px">分辨率带宽 1.89MHz</div><div class="bl2" style="right:73.0px;top:651.5px">频宽 200.00MHz</div>
<div class="abs" style="left:10px;top:434.8px;font-size:8.3px;line-height:9px;color:#ccc">#0</div><div class="abs" style="left:10px;top:633.3px;font-size:8.3px;line-height:9px;color:#ccc">#300</div>
<div class="abs" style="left:53.8px;top:433.5px;width:40px;text-align:center;font-size:8.3px;line-height:9px;color:#201000;white-space:nowrap">-10dBm</div><div class="abs" style="left:122.5px;top:433.5px;width:40px;text-align:center;font-size:8.3px;line-height:9px;color:#201000;white-space:nowrap">-19dBm</div><div class="abs" style="left:191.2px;top:433.5px;width:40px;text-align:center;font-size:8.3px;line-height:9px;color:#201000;white-space:nowrap">-28dBm</div><div class="abs" style="left:260.0px;top:433.5px;width:40px;text-align:center;font-size:8.3px;line-height:9px;color:#201000;white-space:nowrap">-37dBm</div><div class="abs" style="left:328.7px;top:433.5px;width:40px;text-align:center;font-size:8.3px;line-height:9px;color:#201000;white-space:nowrap">-47dBm</div><div class="abs" style="left:397.4px;top:433.5px;width:40px;text-align:center;font-size:8.3px;line-height:9px;color:#201000;white-space:nowrap">-56dBm</div><div class="abs" style="left:466.1px;top:433.5px;width:40px;text-align:center;font-size:8.3px;line-height:9px;color:#201000;white-space:nowrap">-65dBm</div><div class="abs" style="left:534.8px;top:433.5px;width:40px;text-align:center;font-size:8.3px;line-height:9px;color:#201000;white-space:nowrap">-74dBm</div><div class="abs" style="left:628.3px;top:435px;width:40px;text-align:center;font-size:8.3px;line-height:9px;color:#301000;white-space:nowrap">0.89%</div><div class="abs" style="left:701.0px;top:435px;width:40px;text-align:center;font-size:8.3px;line-height:9px;color:#301000;white-space:nowrap">0.78%</div><div class="abs" style="left:773.7px;top:435px;width:40px;text-align:center;font-size:8.3px;line-height:9px;color:#301000;white-space:nowrap">0.67%</div><div class="abs" style="left:846.4px;top:435px;width:40px;text-align:center;font-size:8.3px;line-height:9px;color:#301000;white-space:nowrap">0.56%</div><div class="abs" style="left:919.1px;top:435px;width:40px;text-align:center;font-size:8.3px;line-height:9px;color:#301000;white-space:nowrap">0.45%</div><div class="abs" style="left:991.8px;top:435px;width:40px;text-align:center;font-size:8.3px;line-height:9px;color:#301000;white-space:nowrap">0.33%</div><div class="abs" style="left:1064.5px;top:435px;width:40px;text-align:center;font-size:8.3px;line-height:9px;color:#301000;white-space:nowrap">0.22%</div><div class="abs" style="left:1137.2px;top:435px;width:40px;text-align:center;font-size:8.3px;line-height:9px;color:#301000;white-space:nowrap">0.11%</div>
<div class="hd" style="left:394.3px;top:235.9px;width:12px;height:45px"><svg class="abs" style="left:0;top:0" width="12" height="45"><path d="M5.0 18.0l-4.8 4.5l4.8 4.5zM7.0 18.0l4.8 4.5l-4.8 4.5z" fill="#7686b0"/></svg></div>
<div class="hd" style="left:795.0px;top:235.9px;width:12px;height:45px"><svg class="abs" style="left:0;top:0" width="12" height="45"><path d="M5.0 18.0l-4.8 4.5l4.8 4.5zM7.0 18.0l4.8 4.5l-4.8 4.5z" fill="#7686b0"/></svg></div>
<div class="hd" style="left:595.0px;top:517.6px;width:12px;height:45px"><svg class="abs" style="left:0;top:0" width="12" height="45"><path d="M5.0 18.0l-4.8 4.5l4.8 4.5zM7.0 18.0l4.8 4.5l-4.8 4.5z" fill="#7686b0"/></svg></div>
<div class="hd" style="left:578.6px;top:393.2px;width:45px;height:12px"><svg class="abs" style="left:0;top:0" width="45" height="12"><path d="M22.0 0.4l-4.8 4.8h9.6zM22.0 11.6l-4.8 -4.8h9.6z" fill="#7686b0"/></svg></div>
<svg class="abs" style="left:0;top:330px" width="50" height="100"><path d="M0 3.5L42 36V65L0 98Z" fill="#3a445c" fill-opacity=".6"/><path d="M13 44L24.5 49.5L13 55M25 44L36.5 49.5L25 55" stroke="#2a80f0" stroke-width="1.8" fill="none"/></svg>
<div class="sb" style="top:121.7px"><div class="in"></div><svg viewBox="0 0 31 31"><defs><linearGradient id="sbg" x1="0" y1="0" x2="0" y2="1"><stop offset="0" stop-color="#1d3a80"/><stop offset="1" stop-color="#3560b8"/></linearGradient><linearGradient id="sbg2" x1="0" y1="0" x2="1" y2="1"><stop offset="0" stop-color="#1d3a80"/><stop offset="1" stop-color="#3a68c4"/></linearGradient></defs><circle cx="15.5" cy="13.2" r="8" fill="url(#sbg2)"/><path d="M11.6 6.2A8 8 0 1 1 8.2 16.5" stroke="#d4dcf0" stroke-width="1" fill="none" stroke-linejoin="round" stroke-linecap="round"/><path d="M9.2 8.2L9.6 5L12.8 5.6" stroke="#d4dcf0" stroke-width="1" fill="none" stroke-linejoin="round" stroke-linecap="round"/><rect x="2.3" y="19" width="25.8" height="8.6" rx="1.5" fill="url(#sbg)" stroke="#d4dcf0" stroke-width="1" fill="none" stroke-linejoin="round" stroke-linecap="round"/><rect x="22.5" y="21.8" width="3" height="2" fill="#e8ecf8"/></svg></div>
<div class="sb" style="top:183.2px"><div class="in"></div><svg viewBox="0 0 31 31"><circle cx="15.5" cy="15.5" r="13.2" fill="url(#sbg2)" stroke="#d4dcf0" stroke-width="1" fill="none" stroke-linejoin="round" stroke-linecap="round"/><path d="M9.5 12.8H16V9.5L22.5 15.5L16 21.5V18.2H9.5Z" fill="#3a66c0" stroke="#d4dcf0" stroke-width="1" fill="none" stroke-linejoin="round" stroke-linecap="round"/></svg></div>
<div class="sb" style="top:244.8px"><div class="in"></div><svg viewBox="0 0 31 31"><path id="rfa" d="M3.6 11.3C5.5 4.5 15 1.2 22.8 6.6L26.6 4.6V16.8L17.2 12.6L20.4 10.9C15 8.2 9 9 3.6 11.3Z" fill="url(#sbg)" stroke="#d4dcf0" stroke-width="1" fill="none" stroke-linejoin="round" stroke-linecap="round"/><path transform="rotate(180 15.1 15.8)" d="M3.6 11.3C5.5 4.5 15 1.2 22.8 6.6L26.6 4.6V16.8L17.2 12.6L20.4 10.9C15 8.2 9 9 3.6 11.3Z" fill="url(#sbg)" stroke="#d4dcf0" stroke-width="1" fill="none" stroke-linejoin="round" stroke-linecap="round"/></svg></div>
<div class="sb" style="top:306.3px"><div class="in"></div><svg viewBox="0 0 31 31"><path d="M3.5 2.5H22L27.5 8V28.5H3.5Z" fill="url(#sbg)" stroke="#d4dcf0" stroke-width="1" fill="none" stroke-linejoin="round" stroke-linecap="round"/><path d="M9.5 2.5V10.5H22V2.5" fill="#10204a" stroke="#d4dcf0" stroke-width="1" fill="none" stroke-linejoin="round" stroke-linecap="round"/><rect x="17.5" y="4.8" width="2.2" height="2.6" fill="#e8ecf8"/><path d="M8.5 28.5V18Q8.5 16.5 10 16.5H21Q22.5 16.5 22.5 18V28.5" fill="#2a4c9c" stroke="#d4dcf0" stroke-width="1" fill="none" stroke-linejoin="round" stroke-linecap="round"/><path d="M11.5 21H19.5M11.5 24H19.5" stroke="#d4dcf0" stroke-width="1" fill="none" stroke-linejoin="round" stroke-linecap="round"/></svg></div>
<div class="sb" style="top:367.9px"><div class="in"></div><svg viewBox="0 0 31 31"><path d="M3 25.5V4.5H10L12.5 8H24.5V11" fill="#1d3a80" stroke="#d4dcf0" stroke-width="1" fill="none" stroke-linejoin="round" stroke-linecap="round"/><path d="M3 25.5L8.5 11H29L23 25.5Z" fill="url(#sbg2)" stroke="#d4dcf0" stroke-width="1" fill="none" stroke-linejoin="round" stroke-linecap="round"/></svg></div>
<div class="sb" style="top:429.4px"><div class="in"></div><svg viewBox="0 0 31 31"><rect x="2.5" y="4" width="26" height="24" rx="1" fill="url(#sbg)" stroke="#d4dcf0" stroke-width="1" fill="none" stroke-linejoin="round" stroke-linecap="round"/><rect x="5" y="10.5" width="21" height="15" fill="none" stroke="#d4dcf0" stroke-width="1" fill="none" stroke-linejoin="round" stroke-linecap="round"/><path d="M5 21.5H26M20.5 10.5V25.5" stroke="#d4dcf0" stroke-width="1" fill="none" stroke-linejoin="round" stroke-linecap="round"/><path d="M11 21.5H15" stroke="#e8ecf8" stroke-width="1.8"/><path d="M20.5 13.5V17.5" stroke="#e8ecf8" stroke-width="1.8"/><rect x="21.5" y="6" width="1.8" height="1.8" fill="#e8ecf8"/><rect x="24.5" y="6" width="1.8" height="1.8" fill="#e8ecf8"/></svg></div>
<div class="sb" style="top:491.0px"><div class="in"></div><svg viewBox="0 0 31 31"><path d="M4 3.5H27Q28.5 3.5 28.5 5V22Q28.5 23.5 27 23.5H15.5L9.5 28.5V23.5H4Q2.5 23.5 2.5 22V5Q2.5 3.5 4 3.5Z" fill="url(#sbg)" stroke="#d4dcf0" stroke-width="1" fill="none" stroke-linejoin="round" stroke-linecap="round"/><circle cx="6.7" cy="13.5" r="1" fill="#e8ecf8"/><text x="9" y="16.4" font-family="Liberation Sans, sans-serif" font-size="7.6" font-weight="bold" fill="#dfe6f8" textLength="17.5" lengthAdjust="spacingAndGlyphs">SCPI</text></svg></div>
<div class="sb" style="top:552.5px;background:#27344f;border-color:#3a4a68"><div class="in" style="background:#0a1428;border:1.5px solid #0a84ff;box-shadow:inset 0 0 6px 1px rgba(10,132,255,.8),0 0 2px #0a84ff"></div><svg viewBox="0 0 31 31"><rect x="3.5" y="3.5" width="24" height="24" fill="url(#sbg)"/><path d="M2.5 8V4Q2.5 2.5 4 2.5H8M23 2.5H27Q28.5 2.5 28.5 4V8M28.5 23V27Q28.5 28.5 27 28.5H23M8 28.5H4Q2.5 28.5 2.5 27V23" stroke="#d4dcf0" stroke-width="1" fill="none" stroke-linejoin="round" stroke-linecap="round"/><path d="M7 11.5H10.5L12 9H19L20.5 11.5H24V22H7Z" stroke="#d4dcf0" stroke-width="1" fill="none" stroke-linejoin="round" stroke-linecap="round"/><circle cx="15.5" cy="16.5" r="3" stroke="#d4dcf0" stroke-width="1" fill="none" stroke-linejoin="round" stroke-linecap="round"/><circle cx="21.3" cy="13.7" r="0.7" fill="#e8ecf8"/></svg></div>
<div class="abs" style="left:1206px;top:614px;width:57px;height:8px;overflow:hidden"><div class="sb" style="left:0;top:0;background:#141a28;border-color:#283044"></div></div>
<svg class="abs" style="left:1208px;top:624px" width="58" height="58" viewBox="0 0 58 58"><circle cx="28.5" cy="28.5" r="25.5" fill="#0a0d15" stroke="#2c3446" stroke-width="1.2"/><circle cx="28.5" cy="28.5" r="20.2" fill="#0e1d3c"/><g transform="rotate(0 28.5 28.5)"><path d="M14.5 14.9L20.5 14.9L27.1 21.3L27.1 24.5L24.5 27.2L21.3 27.2L14.5 20.6Z" fill="#0e1c3e" stroke="#c0cbe8" stroke-width="0.8" stroke-linejoin="round"/><path d="M16.3 16.6L20.7 16.6L25.6 21.4L25.6 23.7L23.7 25.7L21.3 25.7L16.3 20.8Z" fill="none" stroke="#3464c2" stroke-width="1.5" stroke-linejoin="round"/></g><g transform="rotate(90 28.5 28.5)"><path d="M14.5 14.9L20.5 14.9L27.1 21.3L27.1 24.5L24.5 27.2L21.3 27.2L14.5 20.6Z" fill="#0e1c3e" stroke="#c0cbe8" stroke-width="0.8" stroke-linejoin="round"/><path d="M16.3 16.6L20.7 16.6L25.6 21.4L25.6 23.7L23.7 25.7L21.3 25.7L16.3 20.8Z" fill="none" stroke="#3464c2" stroke-width="1.5" stroke-linejoin="round"/></g><g transform="rotate(180 28.5 28.5)"><path d="M14.5 14.9L20.5 14.9L27.1 21.3L27.1 24.5L24.5 27.2L21.3 27.2L14.5 20.6Z" fill="#0e1c3e" stroke="#c0cbe8" stroke-width="0.8" stroke-linejoin="round"/><path d="M16.3 16.6L20.7 16.6L25.6 21.4L25.6 23.7L23.7 25.7L21.3 25.7L16.3 20.8Z" fill="none" stroke="#3464c2" stroke-width="1.5" stroke-linejoin="round"/></g><g transform="rotate(270 28.5 28.5)"><path d="M14.5 14.9L20.5 14.9L27.1 21.3L27.1 24.5L24.5 27.2L21.3 27.2L14.5 20.6Z" fill="#0e1c3e" stroke="#c0cbe8" stroke-width="0.8" stroke-linejoin="round"/><path d="M16.3 16.6L20.7 16.6L25.6 21.4L25.6 23.7L23.7 25.7L21.3 25.7L16.3 20.8Z" fill="none" stroke="#3464c2" stroke-width="1.5" stroke-linejoin="round"/></g><circle cx="28.5" cy="28.5" r="2.7" fill="#0e1c3e" stroke="#d4dcf0" stroke-width="1"/><circle cx="28.5" cy="16.0" r="1.2" fill="none" stroke="#c8d2ec" stroke-width="0.8"/><circle cx="28.5" cy="41.0" r="1.2" fill="none" stroke="#c8d2ec" stroke-width="0.8"/><circle cx="15.9" cy="28.5" r="1.2" fill="none" stroke="#c8d2ec" stroke-width="0.8"/><circle cx="41.1" cy="28.5" r="1.2" fill="none" stroke="#c8d2ec" stroke-width="0.8"/></svg>
<div id="status">
<div class="sep" style="left:255.5px;top:8px;height:18px;background:#343d56"></div><div class="sep" style="left:513.0px;top:8px;height:18px;background:#343d56"></div><div class="sep" style="left:769.5px;top:8px;height:18px;background:#343d56"></div><div class="sep" style="left:1166.5px;top:8px;height:18px;background:#343d56"></div>
<svg class="abs" style="left:85px;top:8px" width="25" height="16" viewBox="0 0 25 16"><path d="M2.5 1.5H1V14.5H2.5M22.5 1.5H24V14.5H22.5" stroke="#1aa8d8" stroke-width="1.1" fill="none"/><path d="M1.5 9L3.5 12.5L5.6 3L7.8 13L10 3L12.2 13L14.4 3L16.6 13L18.8 3L21 12.5L23.5 9" stroke="#1aa8d8" stroke-width="1" fill="none" stroke-linejoin="round"/></svg>
<div class="abs" style="left:115px;top:7.5px;font-size:13px;line-height:18px;color:#f4f4f4;white-space:nowrap">扫描就绪</div>
<div class="abs" style="left:1168px;top:2.5px;width:100px;text-align:center;font-size:12.9px;line-height:14.2px;color:#e4e6ec;white-space:nowrap">2025-03-05<br>15:55:08</div>
</div>
<div class="abs" style="left:13px;top:669px;width:45px;height:45px;border-radius:50%;background:#1a2236;border:1.8px solid #2a7ce0;box-shadow:0 0 1.5px #2a7ce0"></div>
<svg class="abs" style="left:27px;top:679px" width="19" height="14" viewBox="0 0 19 14"><path d="M10 10.5H2Q1 10.5 1 9.5V2Q1 1 2 1H15Q16 1 16 2V4.5" stroke="#d8dce8" stroke-width="1" fill="none"/><path d="M3.5 4H9M3.5 6.5H7" stroke="#d8dce8" stroke-width="1" fill="none"/><path d="M3 13H9.5" stroke="#d8dce8" stroke-width="1"/><circle cx="14" cy="9.5" r="2.6" fill="none" stroke="#2a7ce0" stroke-width="1.8"/><path d="M14 5.3V6.5M14 12.5V13.7M9.8 9.5H11M17 9.5H18.2M11 6.5L11.9 7.4M16.1 11.6L17 12.5M17 6.5L16.1 7.4M11.9 11.6L11 12.5" stroke="#2a7ce0" stroke-width="1.3"/></svg>
<div class="abs" style="left:13px;top:692px;width:45px;text-align:center;font-size:10.5px;line-height:13px;color:#f0f0f0">系统</div>
</div>
</body></html>
